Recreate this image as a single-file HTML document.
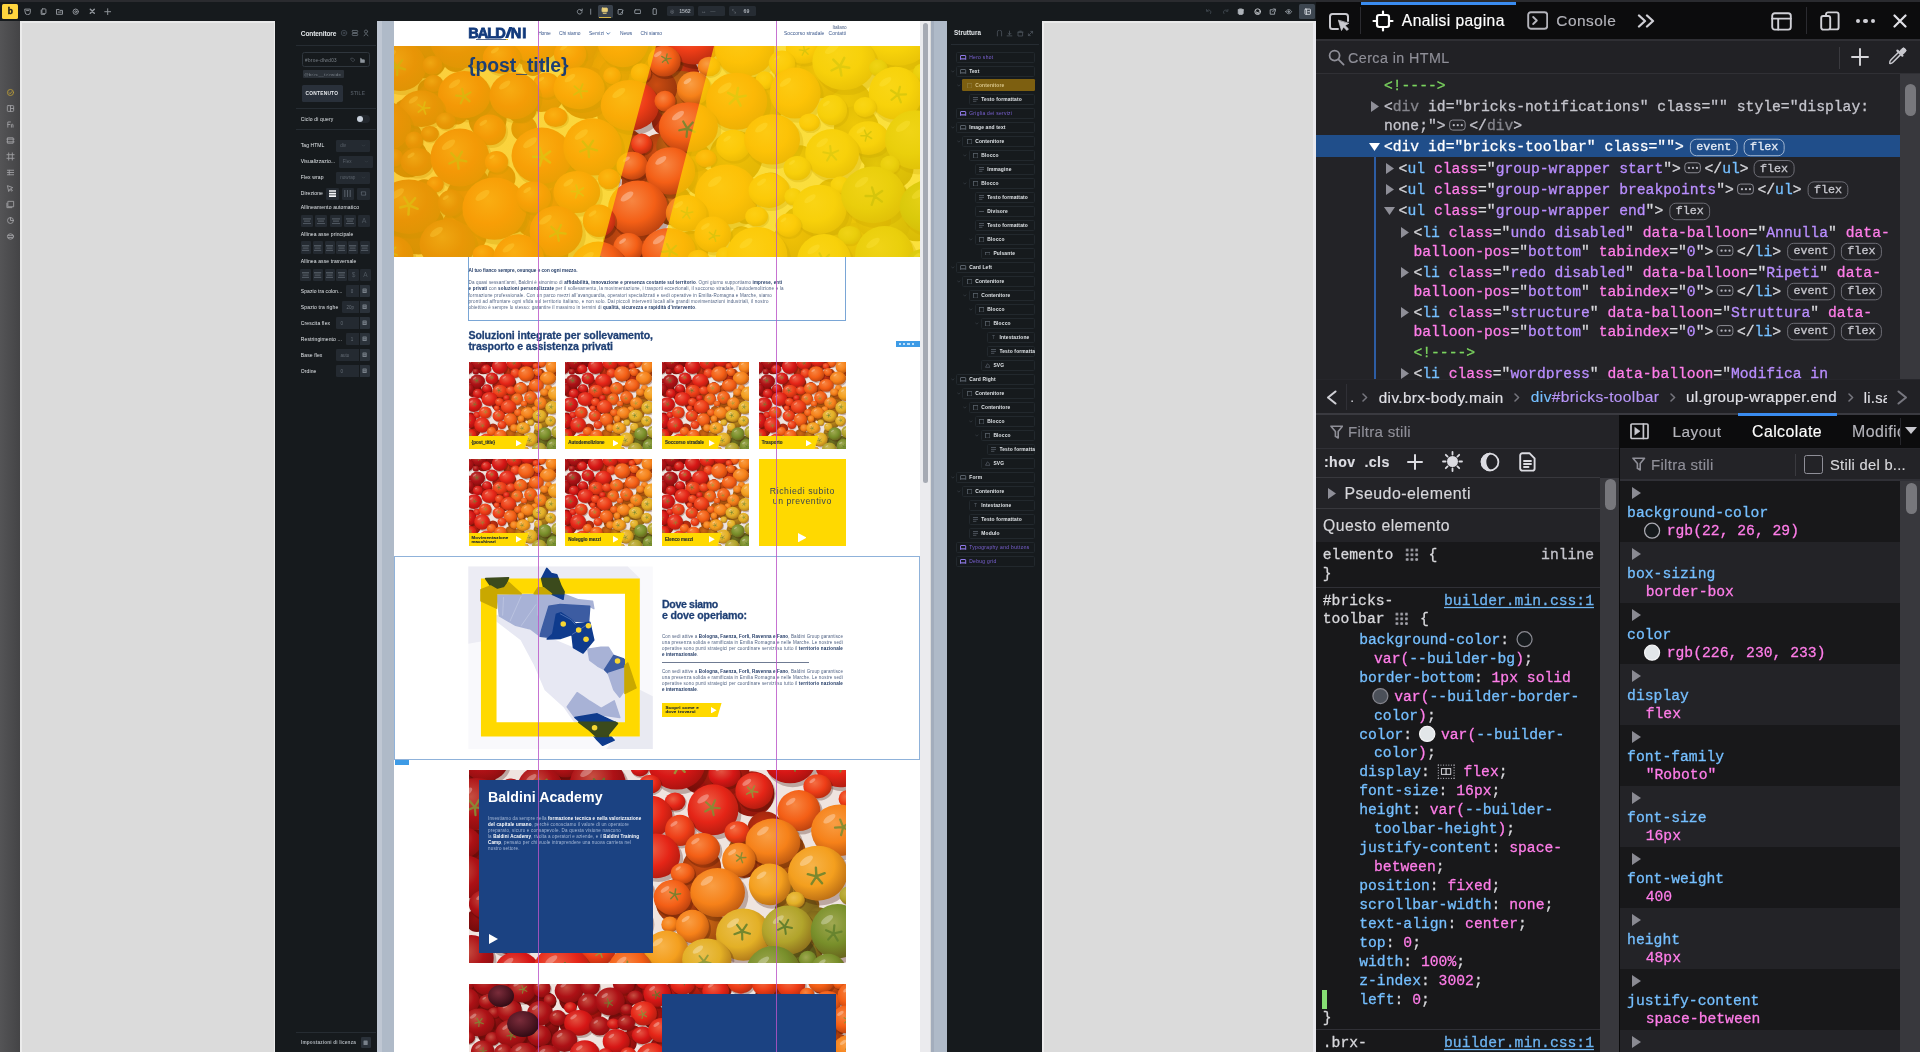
<!DOCTYPE html><html><head><meta charset="utf-8"><title>Bricks builder</title><style>
html,body{margin:0;padding:0}body{width:1920px;height:1052px;overflow:hidden;position:relative;background:#dcdcdc;font-family:"Liberation Sans",sans-serif;-webkit-font-smoothing:antialiased}
#root{position:absolute;left:0;top:0;width:1920px;height:1052px;overflow:hidden;will-change:transform}i{font-style:normal}
</style></head><body><div id="root">
<div style="position:absolute;left:20.00px;top:21.00px;width:255.00px;height:1031.00px;background:#dbdbdb;"></div>
<div style="position:absolute;left:1042.00px;top:21.00px;width:271.40px;height:1031.00px;background:#dbdbdb;"></div>
<div style="position:absolute;left:1313.40px;top:21.00px;width:2.80px;height:1031.00px;background:#e9e9ee;"></div>
<div style="position:absolute;left:377.00px;top:21.00px;width:5.20px;height:1031.00px;background:#bfc7d3;"></div>
<div style="position:absolute;left:273.60px;top:21.00px;width:1.40px;height:1031.00px;background:#ececec;"></div>
<div style="position:absolute;left:1042.00px;top:21.00px;width:2.40px;height:1031.00px;background:#ececec;"></div>
<div style="position:absolute;left:20.00px;top:21.00px;width:1.80px;height:1031.00px;background:#ebebeb;"></div>
<div style="position:absolute;left:20.00px;top:21.00px;width:255.00px;height:1.60px;background:#e9e9e9;"></div>
<div style="position:absolute;left:1042.00px;top:21.00px;width:272.00px;height:1.60px;background:#e9e9e9;"></div>
<div style="position:absolute;left:382.20px;top:21.00px;width:12.00px;height:1031.00px;background:#afbac8;"></div>
<div style="position:absolute;left:930.50px;top:21.00px;width:16.50px;height:1031.00px;background:#afbac8;"></div>
<div style="position:absolute;left:930.50px;top:21.00px;width:3.00px;height:1031.00px;background:#a3adbc;"></div>
<div style="position:absolute;left:394.20px;top:21.00px;width:526.00px;height:1031.00px;background:#ffffff;"></div>
<span style='position:absolute;left:468px;top:17px;font:700 58.40px/117px "Liberation Sans",sans-serif;color:#123a7c;white-space:pre;transform:translate(0.200px,0.940px) scale(.25);transform-origin:0 0;letter-spacing:-3.950px;-webkit-text-stroke:3.2px #123a7c;'>BALD</span><svg style="position:absolute;left:504.80px;top:26.60px;" width="7.40" height="11.20" viewBox="0 0 7.4 11.2"><path d="M4.2 0H7.4L3.2 11.2H0z" fill="#123a7c"/></svg><span style='position:absolute;left:510px;top:17px;font:700 58.40px/117px "Liberation Sans",sans-serif;color:#123a7c;white-space:pre;transform:translate(0.800px,0.940px) scale(.25);transform-origin:0 0;letter-spacing:3.600px;-webkit-text-stroke:3.2px #123a7c;'>NI</span><div style="position:absolute;left:476.00px;top:39.40px;width:30.00px;height:1.00px;background:#54688c;"></div><div style="position:absolute;left:506.40px;top:38.80px;width:2.00px;height:1.60px;background:#f0c818;"></div><span style='position:absolute;left:538px;top:28px;font:400 19.60px/39px "Liberation Sans",sans-serif;color:#37558a;white-space:pre;transform:translate(0.200px,0.788px) scale(.25);transform-origin:0 0;letter-spacing:-0.671px;'>Home</span><span style='position:absolute;left:559px;top:28px;font:400 19.60px/39px "Liberation Sans",sans-serif;color:#37558a;white-space:pre;transform:translate(0.000px,0.788px) scale(.25);transform-origin:0 0;letter-spacing:-0.171px;'>Chi siamo</span><span style='position:absolute;left:589px;top:28px;font:400 19.60px/39px "Liberation Sans",sans-serif;color:#37558a;white-space:pre;transform:translate(0.000px,0.788px) scale(.25);transform-origin:0 0;letter-spacing:0.284px;'>Servizi</span><span style='position:absolute;left:620px;top:28px;font:400 19.60px/39px "Liberation Sans",sans-serif;color:#37558a;white-space:pre;transform:translate(0.000px,0.788px) scale(.25);transform-origin:0 0;letter-spacing:-0.053px;'>News</span><span style='position:absolute;left:640px;top:28px;font:400 19.60px/39px "Liberation Sans",sans-serif;color:#37558a;white-space:pre;transform:translate(0.400px,0.788px) scale(.25);transform-origin:0 0;letter-spacing:-0.082px;'>Chi siamo</span><svg style="position:absolute;left:606.40px;top:32.20px;" width="4.40" height="3.00" viewBox="0 0 4.4 3"><path d="M.5 .5l1.7 1.8L3.9 .5" fill="none" stroke="#2c5a9a" stroke-width=".8"/></svg><span style='position:absolute;left:832px;top:22px;font:400 18.80px/38px "Liberation Sans",sans-serif;color:#4a5f85;white-space:pre;transform:translate(0.600px,0.984px) scale(.25);transform-origin:0 0;letter-spacing:-0.578px;'>Italiano</span><span style='position:absolute;left:784px;top:28px;font:400 19.60px/39px "Liberation Sans",sans-serif;color:#37558a;white-space:pre;transform:translate(0.000px,0.788px) scale(.25);transform-origin:0 0;letter-spacing:0.278px;'>Soccorso stradale</span><span style='position:absolute;left:828px;top:28px;font:400 19.60px/39px "Liberation Sans",sans-serif;color:#37558a;white-space:pre;transform:translate(0.600px,0.788px) scale(.25);transform-origin:0 0;letter-spacing:0.256px;'>Contatti</span>
<svg style="position:absolute;left:394.00px;top:45.60px;" width="526.00" height="211.60" viewBox="0 0 526 211.6"><defs><radialGradient id="h0" cx=".40" cy=".36" r=".70"><stop offset="0" stop-color="#c65042"/><stop offset=".55" stop-color="#ad1116"/><stop offset="1" stop-color="#880e0e"/></radialGradient><radialGradient id="hd0" cx=".45" cy=".40" r=".75"><stop offset="0" stop-color="#940f11"/><stop offset="1" stop-color="#690b0a"/></radialGradient><radialGradient id="h1" cx=".40" cy=".36" r=".70"><stop offset="0" stop-color="#e35442"/><stop offset=".55" stop-color="#d71716"/><stop offset="1" stop-color="#a3120e"/></radialGradient><radialGradient id="hd1" cx=".45" cy=".40" r=".75"><stop offset="0" stop-color="#b51411"/><stop offset="1" stop-color="#7d0e0a"/></radialGradient><radialGradient id="h2" cx=".40" cy=".36" r=".70"><stop offset="0" stop-color="#ed5e43"/><stop offset=".55" stop-color="#e52517"/><stop offset="1" stop-color="#ac1b0f"/></radialGradient><radialGradient id="hd2" cx=".45" cy=".40" r=".75"><stop offset="0" stop-color="#c01f12"/><stop offset="1" stop-color="#83150b"/></radialGradient><radialGradient id="h3" cx=".40" cy=".36" r=".70"><stop offset="0" stop-color="#f36e43"/><stop offset=".55" stop-color="#ee3d17"/><stop offset="1" stop-color="#b22a0f"/></radialGradient><radialGradient id="hd3" cx=".45" cy=".40" r=".75"><stop offset="0" stop-color="#c73212"/><stop offset="1" stop-color="#88200b"/></radialGradient><radialGradient id="h4" cx=".40" cy=".36" r=".70"><stop offset="0" stop-color="#f78642"/><stop offset=".55" stop-color="#f45f16"/><stop offset="1" stop-color="#b53f0e"/></radialGradient><radialGradient id="hd4" cx=".45" cy=".40" r=".75"><stop offset="0" stop-color="#cb4c11"/><stop offset="1" stop-color="#8a300a"/></radialGradient><radialGradient id="h5" cx=".40" cy=".36" r=".70"><stop offset="0" stop-color="#f99e44"/><stop offset=".55" stop-color="#f68119"/><stop offset="1" stop-color="#b75510"/></radialGradient><radialGradient id="hd5" cx=".45" cy=".40" r=".75"><stop offset="0" stop-color="#cd6713"/><stop offset="1" stop-color="#8b400b"/></radialGradient><radialGradient id="h6" cx=".40" cy=".36" r=".70"><stop offset="0" stop-color="#f7b348"/><stop offset=".55" stop-color="#f49f1e"/><stop offset="1" stop-color="#b56913"/></radialGradient><radialGradient id="hd6" cx=".45" cy=".40" r=".75"><stop offset="0" stop-color="#cc7e18"/><stop offset="1" stop-color="#8a4e0e"/></radialGradient><radialGradient id="h7" cx=".40" cy=".36" r=".70"><stop offset="0" stop-color="#ebbf4d"/><stop offset=".55" stop-color="#e3b026"/><stop offset="1" stop-color="#aa7318"/></radialGradient><radialGradient id="hd7" cx=".45" cy=".40" r=".75"><stop offset="0" stop-color="#be8b1d"/><stop offset="1" stop-color="#825612"/></radialGradient><radialGradient id="h8" cx=".40" cy=".36" r=".70"><stop offset="0" stop-color="#c9b751"/><stop offset=".55" stop-color="#b1a42b"/><stop offset="1" stop-color="#8b6c1b"/></radialGradient><radialGradient id="hd8" cx=".45" cy=".40" r=".75"><stop offset="0" stop-color="#988221"/><stop offset="1" stop-color="#6b5014"/></radialGradient><radialGradient id="h9" cx=".40" cy=".36" r=".70"><stop offset="0" stop-color="#a0a851"/><stop offset=".55" stop-color="#788f2a"/><stop offset="1" stop-color="#665e1b"/></radialGradient><radialGradient id="hd9" cx=".45" cy=".40" r=".75"><stop offset="0" stop-color="#6b7121"/><stop offset="1" stop-color="#504614"/></radialGradient><clipPath id="hsl"><polygon points="262,0 320,0 266,211.6 205.6,211.6"/></clipPath></defs><g><rect width="526" height="211.6" fill="#efe4df"/><circle cx="79.3" cy="137.7" r="16.1" fill="url(#hd1)"/><circle cx="192.4" cy="12.3" r="19.6" fill="url(#hd2)"/><circle cx="228.1" cy="14.8" r="11.4" fill="url(#hd2)"/><circle cx="434.9" cy="26.2" r="17.8" fill="url(#hd6)"/><circle cx="498.5" cy="122.1" r="21.1" fill="url(#hd8)"/><circle cx="24.5" cy="181.7" r="26.8" fill="url(#hd0)"/><circle cx="62.0" cy="65.3" r="13.2" fill="url(#hd1)"/><circle cx="305.9" cy="135.2" r="13.8" fill="url(#hd5)"/><circle cx="33.0" cy="12.6" r="19.8" fill="url(#hd0)"/><circle cx="224.9" cy="66.5" r="22.0" fill="url(#hd3)"/><circle cx="157.7" cy="168.1" r="18.2" fill="url(#hd3)"/><circle cx="302.1" cy="111.1" r="14.8" fill="url(#hd5)"/><circle cx="151.5" cy="207.4" r="22.8" fill="url(#hd2)"/><circle cx="398.3" cy="32.2" r="17.7" fill="url(#hd6)"/><circle cx="351.5" cy="161.8" r="11.4" fill="url(#hd6)"/><circle cx="165.0" cy="147.1" r="25.2" fill="url(#hd3)"/><circle cx="240.0" cy="177.7" r="20.3" fill="url(#hd4)"/><circle cx="349.3" cy="12.8" r="18.6" fill="url(#hd5)"/><circle cx="522.4" cy="173.9" r="21.4" fill="url(#hd8)"/><circle cx="351.7" cy="4.8" r="17.1" fill="url(#hd5)"/><circle cx="61.6" cy="12.5" r="13.6" fill="url(#hd1)"/><circle cx="130.2" cy="82.7" r="12.9" fill="url(#hd2)"/><circle cx="236.3" cy="116.3" r="12.1" fill="url(#hd4)"/><circle cx="454.5" cy="58.9" r="24.2" fill="url(#hd7)"/><circle cx="465.1" cy="202.7" r="16.7" fill="url(#hd7)"/><circle cx="122.0" cy="49.4" r="13.7" fill="url(#hd1)"/><circle cx="138.2" cy="0.9" r="20.5" fill="url(#hd1)"/><circle cx="297.9" cy="201.7" r="16.9" fill="url(#hd5)"/><circle cx="324.9" cy="143.1" r="19.3" fill="url(#hd5)"/><circle cx="410.3" cy="185.0" r="25.6" fill="url(#hd7)"/><circle cx="209.9" cy="21.9" r="17.2" fill="url(#hd3)"/><circle cx="35.4" cy="44.2" r="11.8" fill="url(#hd0)"/><circle cx="27.7" cy="0.0" r="16.4" fill="url(#hd0)"/><circle cx="191.3" cy="5.4" r="12.5" fill="url(#hd3)"/><circle cx="78.1" cy="53.4" r="20.9" fill="url(#hd0)"/><circle cx="64.6" cy="179.6" r="16.8" fill="url(#hd2)"/><circle cx="254.5" cy="18.2" r="18.4" fill="url(#hd3)"/><circle cx="139.3" cy="175.4" r="16.4" fill="url(#hd2)"/><circle cx="500.2" cy="111.8" r="11.2" fill="url(#hd7)"/><circle cx="14.2" cy="111.7" r="19.7" fill="url(#hd0)"/><circle cx="366.2" cy="55.3" r="25.0" fill="url(#hd5)"/><circle cx="406.0" cy="112.7" r="13.5" fill="url(#hd7)"/><circle cx="117.3" cy="171.7" r="16.2" fill="url(#hd2)"/><circle cx="424.0" cy="173.2" r="24.8" fill="url(#hd7)"/><circle cx="272.3" cy="75.2" r="14.5" fill="url(#hd3)"/><circle cx="147.0" cy="54.8" r="11.3" fill="url(#hd2)"/><circle cx="235.2" cy="198.3" r="26.5" fill="url(#hd4)"/><circle cx="191.8" cy="46.6" r="26.5" fill="url(#hd2)"/><circle cx="107.5" cy="132.1" r="14.0" fill="url(#hd2)"/><circle cx="252.2" cy="138.2" r="24.6" fill="url(#hd4)"/><circle cx="347.5" cy="192.5" r="12.2" fill="url(#hd6)"/><circle cx="251.4" cy="37.8" r="23.1" fill="url(#hd4)"/><circle cx="421.2" cy="205.6" r="16.3" fill="url(#hd7)"/><circle cx="498.0" cy="153.4" r="17.4" fill="url(#hd8)"/><circle cx="79.5" cy="191.5" r="12.9" fill="url(#hd2)"/><circle cx="434.7" cy="207.4" r="13.2" fill="url(#hd7)"/><circle cx="288.6" cy="27.7" r="16.5" fill="url(#hd3)"/><circle cx="341.7" cy="111.4" r="26.7" fill="url(#hd6)"/><circle cx="458.5" cy="174.8" r="17.9" fill="url(#hd7)"/><circle cx="154.1" cy="50.9" r="14.9" fill="url(#hd2)"/><circle cx="220.4" cy="27.7" r="15.1" fill="url(#hd3)"/><circle cx="241.0" cy="123.4" r="16.6" fill="url(#hd4)"/><circle cx="482.7" cy="106.1" r="17.7" fill="url(#hd8)"/><circle cx="9.8" cy="93.1" r="19.4" fill="url(#hd0)"/><circle cx="420.4" cy="36.5" r="10.9" fill="url(#hd6)"/><circle cx="292.7" cy="69.0" r="22.7" fill="url(#hd4)"/><circle cx="412.5" cy="22.5" r="19.9" fill="url(#hd6)"/><circle cx="145.7" cy="163.4" r="14.9" fill="url(#hd2)"/><circle cx="399.8" cy="193.1" r="20.0" fill="url(#hd6)"/><circle cx="265.9" cy="108.4" r="20.8" fill="url(#hd4)"/><circle cx="280.5" cy="101.2" r="18.2" fill="url(#hd5)"/><circle cx="461.1" cy="199.4" r="22.3" fill="url(#hd7)"/><circle cx="496.2" cy="177.7" r="20.0" fill="url(#hd8)"/><circle cx="232.6" cy="15.4" r="12.8" fill="url(#hd3)"/><circle cx="352.1" cy="165.9" r="12.0" fill="url(#hd6)"/><circle cx="376.7" cy="139.7" r="13.3" fill="url(#hd5)"/><circle cx="508.9" cy="46.5" r="25.3" fill="url(#hd8)"/><circle cx="256.3" cy="209.5" r="17.3" fill="url(#hd5)"/><circle cx="227.0" cy="109.1" r="13.4" fill="url(#hd3)"/><circle cx="167.5" cy="152.8" r="14.0" fill="url(#hd2)"/><circle cx="231.7" cy="3.8" r="19.9" fill="url(#hd3)"/><circle cx="269.4" cy="13.6" r="21.0" fill="url(#hd4)"/><circle cx="511.1" cy="22.2" r="23.7" fill="url(#hd7)"/><circle cx="409.8" cy="57.2" r="11.4" fill="url(#hd6)"/><circle cx="479.4" cy="173.3" r="17.7" fill="url(#hd7)"/><circle cx="483.5" cy="120.7" r="13.2" fill="url(#hd8)"/><circle cx="30.3" cy="145.6" r="12.3" fill="url(#hd0)"/><circle cx="493.6" cy="134.2" r="12.0" fill="url(#hd8)"/><circle cx="450.4" cy="14.1" r="12.2" fill="url(#hd7)"/><circle cx="178.4" cy="117.0" r="18.2" fill="url(#hd3)"/><circle cx="68.0" cy="111.5" r="15.2" fill="url(#hd0)"/><circle cx="84.9" cy="10.7" r="12.6" fill="url(#hd0)"/><circle cx="160.4" cy="160.7" r="15.9" fill="url(#hd2)"/><circle cx="93.6" cy="73.4" r="19.0" fill="url(#hd0)"/><circle cx="8.1" cy="155.1" r="14.9" fill="url(#hd0)"/><circle cx="249.7" cy="197.8" r="13.9" fill="url(#hd4)"/><circle cx="227.3" cy="104.7" r="24.2" fill="url(#hd4)"/><circle cx="266.5" cy="145.5" r="17.2" fill="url(#hd5)"/><circle cx="437.8" cy="149.5" r="16.4" fill="url(#hd7)"/><circle cx="182.8" cy="11.5" r="17.4" fill="url(#hd2)"/><circle cx="389.7" cy="54.1" r="12.0" fill="url(#hd5)"/><circle cx="442.5" cy="184.2" r="12.2" fill="url(#hd7)"/><circle cx="127.4" cy="62.0" r="15.4" fill="url(#hd1)"/><circle cx="234.5" cy="55.7" r="13.4" fill="url(#hd4)"/><circle cx="287.8" cy="51.7" r="26.8" fill="url(#hd5)"/><circle cx="187.6" cy="0.2" r="15.9" fill="url(#hd2)"/><circle cx="264.5" cy="42.5" r="18.6" fill="url(#hd4)"/><circle cx="139.0" cy="19.0" r="10.9" fill="url(#hd1)"/><circle cx="11.8" cy="64.4" r="11.5" fill="url(#hd0)"/><circle cx="278.4" cy="158.8" r="20.4" fill="url(#hd5)"/><circle cx="462.4" cy="82.4" r="22.5" fill="url(#hd7)"/><circle cx="78.6" cy="153.2" r="26.9" fill="url(#hd1)"/><circle cx="439.4" cy="188.7" r="11.5" fill="url(#hd7)"/><circle cx="427.2" cy="29.5" r="22.8" fill="url(#hd6)"/><circle cx="439.2" cy="170.3" r="19.1" fill="url(#hd7)"/><ellipse cx="70.6" cy="-1.4" rx="31.9" ry="28.4" fill="#3a0a00" opacity=".28"/><ellipse cx="67.6" cy="-5.5" rx="31.2" ry="27.8" fill="url(#h0)"/><ellipse cx="56.3" cy="-18.0" rx="7.7" ry="3.3" fill="#fff" opacity=".30" transform="rotate(-35 56.3 -18.0)"/><ellipse cx="8.9" cy="24.0" rx="26.5" ry="25.2" fill="#3a0a00" opacity=".28"/><ellipse cx="6.2" cy="20.2" rx="25.9" ry="24.7" fill="url(#h0)"/><ellipse cx="-4.2" cy="8.7" rx="7.1" ry="3.0" fill="#fff" opacity=".30" transform="rotate(-35 -4.2 8.7)"/><path d="M3.2 20.9L8.0 14.3M3.2 20.9L11.0 23.4M3.2 20.9L3.2 29.1M3.2 20.9L-4.6 23.5M3.2 20.9L-1.6 14.4" stroke="#607e2b" stroke-width="2.2" stroke-linecap="round" opacity=".85"/><ellipse cx="39.4" cy="20.8" rx="10.2" ry="9.8" fill="#3a0a00" opacity=".28"/><ellipse cx="38.4" cy="19.4" rx="10.0" ry="9.6" fill="url(#h0)"/><ellipse cx="142.9" cy="-6.1" rx="29.0" ry="26.7" fill="#3a0a00" opacity=".28"/><ellipse cx="140.2" cy="-9.8" rx="28.5" ry="26.2" fill="url(#h2)"/><ellipse cx="130.0" cy="-21.1" rx="7.0" ry="2.9" fill="#fff" opacity=".30" transform="rotate(-35 130.0 -21.1)"/><ellipse cx="109.4" cy="14.2" rx="19.3" ry="16.4" fill="#3a0a00" opacity=".28"/><ellipse cx="107.7" cy="11.7" rx="18.9" ry="16.1" fill="url(#h1)"/><ellipse cx="101.0" cy="4.4" rx="4.6" ry="1.9" fill="#fff" opacity=".30" transform="rotate(-35 101.0 4.4)"/><ellipse cx="40.5" cy="38.8" rx="9.9" ry="8.5" fill="#3a0a00" opacity=".28"/><ellipse cx="39.6" cy="37.5" rx="9.7" ry="8.4" fill="url(#h0)"/><ellipse cx="177.7" cy="10.6" rx="16.5" ry="15.6" fill="#3a0a00" opacity=".28"/><ellipse cx="176.1" cy="8.3" rx="16.2" ry="15.3" fill="url(#h2)"/><ellipse cx="169.8" cy="1.4" rx="4.3" ry="1.8" fill="#fff" opacity=".30" transform="rotate(-35 169.8 1.4)"/><ellipse cx="231.9" cy="-1.6" rx="26.3" ry="27.2" fill="#3a0a00" opacity=".28"/><ellipse cx="229.2" cy="-5.4" rx="25.8" ry="26.7" fill="url(#h3)"/><ellipse cx="219.0" cy="-16.7" rx="7.0" ry="3.0" fill="#fff" opacity=".30" transform="rotate(-35 219.0 -16.7)"/><ellipse cx="72.8" cy="52.3" rx="26.9" ry="24.1" fill="#3a0a00" opacity=".28"/><ellipse cx="70.3" cy="48.7" rx="26.4" ry="23.7" fill="url(#h1)"/><ellipse cx="60.5" cy="37.8" rx="6.7" ry="2.8" fill="#fff" opacity=".30" transform="rotate(-35 60.5 37.8)"/><path d="M69.8 50.3L68.1 42.7M69.8 50.3L76.5 46.4M69.8 50.3L75.6 55.4M69.8 50.3L66.7 57.4M69.8 50.3L62.1 49.6" stroke="#708830" stroke-width="2.1" stroke-linecap="round" opacity=".85"/><ellipse cx="29.5" cy="65.6" rx="22.8" ry="18.7" fill="#3a0a00" opacity=".28"/><ellipse cx="27.4" cy="62.7" rx="22.3" ry="18.3" fill="url(#h0)"/><ellipse cx="19.4" cy="53.9" rx="5.5" ry="2.3" fill="#fff" opacity=".30" transform="rotate(-35 19.4 53.9)"/><path d="M29.4 62.1L31.6 68.0M29.4 62.1L24.4 66.0M29.4 62.1L24.1 58.6M29.4 62.1L31.0 56.0M29.4 62.1L35.7 61.8" stroke="#929e3b" stroke-width="1.7" stroke-linecap="round" opacity=".85"/><ellipse cx="-8.8" cy="84.4" rx="29.4" ry="26.1" fill="#3a0a00" opacity=".28"/><ellipse cx="-11.8" cy="80.3" rx="28.8" ry="25.5" fill="url(#h0)"/><ellipse cx="-23.0" cy="67.8" rx="7.7" ry="3.3" fill="#fff" opacity=".30" transform="rotate(-35 -23.0 67.8)"/><path d="M-16.1 78.4L-7.7 81.4M-16.1 78.4L-16.3 87.3M-16.1 78.4L-24.6 80.9M-16.1 78.4L-21.1 71.0M-16.1 78.4L-10.7 71.3" stroke="#7c9034" stroke-width="2.4" stroke-linecap="round" opacity=".85"/><ellipse cx="302.9" cy="-4.3" rx="30.1" ry="27.3" fill="#3a0a00" opacity=".28"/><ellipse cx="300.1" cy="-8.2" rx="29.5" ry="26.8" fill="url(#h3)"/><ellipse cx="289.6" cy="-19.9" rx="7.2" ry="3.1" fill="#fff" opacity=".30" transform="rotate(-35 289.6 -19.9)"/><path d="M301.9 -10.0L294.7 -5.8M301.9 -10.0L295.7 -15.5M301.9 -10.0L305.3 -17.6M301.9 -10.0L310.2 -9.1M301.9 -10.0L303.6 -1.8" stroke="#708830" stroke-width="2.2" stroke-linecap="round" opacity=".85"/><ellipse cx="153.6" cy="41.0" rx="13.8" ry="13.0" fill="#3a0a00" opacity=".28"/><ellipse cx="152.3" cy="39.1" rx="13.5" ry="12.7" fill="url(#h2)"/><ellipse cx="147.1" cy="33.3" rx="3.6" ry="1.5" fill="#fff" opacity=".30" transform="rotate(-35 147.1 33.3)"/><ellipse cx="123.0" cy="53.3" rx="25.4" ry="24.0" fill="#3a0a00" opacity=".28"/><ellipse cx="120.4" cy="49.7" rx="24.9" ry="23.5" fill="url(#h1)"/><ellipse cx="110.7" cy="39.0" rx="6.6" ry="2.8" fill="#fff" opacity=".30" transform="rotate(-35 110.7 39.0)"/><ellipse cx="52.8" cy="76.3" rx="10.1" ry="8.7" fill="#3a0a00" opacity=".28"/><ellipse cx="51.8" cy="74.9" rx="9.9" ry="8.5" fill="url(#h0)"/><ellipse cx="219.0" cy="30.9" rx="9.1" ry="8.6" fill="#3a0a00" opacity=".28"/><ellipse cx="218.1" cy="29.7" rx="8.9" ry="8.5" fill="url(#h3)"/><ellipse cx="271.9" cy="17.5" rx="16.7" ry="15.7" fill="#3a0a00" opacity=".28"/><ellipse cx="270.2" cy="15.1" rx="16.4" ry="15.4" fill="url(#h4)"/><ellipse cx="263.8" cy="8.1" rx="4.4" ry="1.9" fill="#fff" opacity=".30" transform="rotate(-35 263.8 8.1)"/><path d="M272.1 13.0L274.2 17.6M272.1 13.0L268.4 16.3M272.1 13.0L267.7 10.4M272.1 13.0L273.1 8.0M272.1 13.0L277.1 12.4" stroke="#6d872f" stroke-width="1.3" stroke-linecap="round" opacity=".85"/><ellipse cx="187.5" cy="45.5" rx="26.2" ry="21.4" fill="#3a0a00" opacity=".28"/><ellipse cx="185.1" cy="42.2" rx="25.6" ry="21.0" fill="url(#h3)"/><ellipse cx="176.0" cy="32.1" rx="6.2" ry="2.6" fill="#fff" opacity=".30" transform="rotate(-35 176.0 32.1)"/><path d="M186.0 44.9L180.0 48.8M186.0 44.9L180.4 40.3M186.0 44.9L188.6 38.2M186.0 44.9L193.2 45.3M186.0 44.9L187.8 51.9" stroke="#798e33" stroke-width="1.9" stroke-linecap="round" opacity=".85"/><ellipse cx="36.8" cy="89.3" rx="9.3" ry="8.2" fill="#3a0a00" opacity=".28"/><ellipse cx="35.8" cy="88.0" rx="9.1" ry="8.0" fill="url(#h0)"/><ellipse cx="21.1" cy="96.1" rx="9.2" ry="9.3" fill="#3a0a00" opacity=".28"/><ellipse cx="20.2" cy="94.8" rx="9.0" ry="9.2" fill="url(#h0)"/><ellipse cx="248.0" cy="28.3" rx="10.5" ry="9.9" fill="#3a0a00" opacity=".28"/><ellipse cx="247.0" cy="26.9" rx="10.3" ry="9.7" fill="url(#h4)"/><ellipse cx="353.6" cy="7.8" rx="30.3" ry="27.6" fill="#3a0a00" opacity=".28"/><ellipse cx="350.6" cy="3.6" rx="29.7" ry="27.0" fill="url(#h5)"/><ellipse cx="339.2" cy="-8.9" rx="7.8" ry="3.3" fill="#fff" opacity=".30" transform="rotate(-35 339.2 -8.9)"/><ellipse cx="1.0" cy="113.0" rx="9.4" ry="9.1" fill="#3a0a00" opacity=".28"/><ellipse cx="0.1" cy="111.7" rx="9.2" ry="9.0" fill="url(#h0)"/><ellipse cx="97.4" cy="86.3" rx="16.6" ry="15.7" fill="#3a0a00" opacity=".28"/><ellipse cx="95.7" cy="83.9" rx="16.3" ry="15.4" fill="url(#h1)"/><ellipse cx="89.3" cy="76.8" rx="4.4" ry="1.9" fill="#fff" opacity=".30" transform="rotate(-35 89.3 76.8)"/><ellipse cx="316.3" cy="22.0" rx="11.5" ry="10.0" fill="#3a0a00" opacity=".28"/><ellipse cx="315.2" cy="20.5" rx="11.3" ry="9.8" fill="url(#h5)"/><ellipse cx="162.9" cy="72.7" rx="12.1" ry="10.1" fill="#3a0a00" opacity=".28"/><ellipse cx="161.7" cy="71.2" rx="11.8" ry="9.9" fill="url(#h2)"/><ellipse cx="24.5" cy="118.2" rx="16.4" ry="14.4" fill="#3a0a00" opacity=".28"/><ellipse cx="23.0" cy="116.0" rx="16.1" ry="14.1" fill="url(#h0)"/><ellipse cx="17.0" cy="109.4" rx="4.1" ry="1.7" fill="#fff" opacity=".30" transform="rotate(-35 17.0 109.4)"/><ellipse cx="411.1" cy="4.9" rx="17.9" ry="15.6" fill="#3a0a00" opacity=".28"/><ellipse cx="409.4" cy="2.5" rx="17.6" ry="15.3" fill="url(#h6)"/><ellipse cx="403.0" cy="-4.6" rx="4.4" ry="1.9" fill="#fff" opacity=".30" transform="rotate(-35 403.0 -4.6)"/><path d="M410.5 4.6L409.6 -0.4M410.5 4.6L415.0 2.3M410.5 4.6L414.1 8.2M410.5 4.6L408.2 9.2M410.5 4.6L405.5 3.9" stroke="#67832d" stroke-width="1.4" stroke-linecap="round" opacity=".85"/><ellipse cx="238.9" cy="63.4" rx="29.8" ry="25.9" fill="#3a0a00" opacity=".28"/><ellipse cx="235.9" cy="59.3" rx="29.2" ry="25.4" fill="url(#h3)"/><ellipse cx="224.8" cy="47.0" rx="7.6" ry="3.2" fill="#fff" opacity=".30" transform="rotate(-35 224.8 47.0)"/><ellipse cx="68.9" cy="115.7" rx="29.9" ry="29.5" fill="#3a0a00" opacity=".28"/><ellipse cx="65.9" cy="111.5" rx="29.4" ry="28.9" fill="url(#h1)"/><ellipse cx="54.5" cy="98.8" rx="7.8" ry="3.3" fill="#fff" opacity=".30" transform="rotate(-35 54.5 98.8)"/><path d="M63.5 113.7L72.3 115.4M63.5 113.7L64.6 122.7M63.5 113.7L55.3 117.5M63.5 113.7L57.3 107.1M63.5 113.7L67.9 105.8" stroke="#728a31" stroke-width="2.4" stroke-linecap="round" opacity=".85"/><ellipse cx="301.6" cy="44.6" rx="17.4" ry="17.0" fill="#3a0a00" opacity=".28"/><ellipse cx="299.9" cy="42.3" rx="17.0" ry="16.7" fill="url(#h5)"/><ellipse cx="293.5" cy="35.1" rx="4.4" ry="1.9" fill="#fff" opacity=".30" transform="rotate(-35 293.5 35.1)"/><ellipse cx="389.3" cy="19.1" rx="13.4" ry="13.2" fill="#3a0a00" opacity=".28"/><ellipse cx="388.0" cy="17.3" rx="13.2" ry="12.9" fill="url(#h6)"/><ellipse cx="383.1" cy="11.8" rx="3.4" ry="1.4" fill="#fff" opacity=".30" transform="rotate(-35 383.1 11.8)"/><ellipse cx="272.2" cy="56.6" rx="10.9" ry="10.6" fill="#3a0a00" opacity=".28"/><ellipse cx="271.0" cy="55.1" rx="10.6" ry="10.4" fill="url(#h4)"/><ellipse cx="507.5" cy="-4.6" rx="34.7" ry="29.7" fill="#3a0a00" opacity=".28"/><ellipse cx="504.2" cy="-9.3" rx="34.1" ry="29.1" fill="url(#h7)"/><ellipse cx="491.4" cy="-23.3" rx="8.7" ry="3.7" fill="#fff" opacity=".30" transform="rotate(-35 491.4 -23.3)"/><ellipse cx="371.6" cy="35.6" rx="9.3" ry="9.2" fill="#3a0a00" opacity=".28"/><ellipse cx="370.6" cy="34.3" rx="9.2" ry="9.0" fill="url(#h6)"/><ellipse cx="103.7" cy="117.6" rx="11.8" ry="11.1" fill="#3a0a00" opacity=".28"/><ellipse cx="102.5" cy="115.9" rx="11.6" ry="10.8" fill="url(#h2)"/><ellipse cx="98.0" cy="110.9" rx="3.1" ry="1.3" fill="#fff" opacity=".30" transform="rotate(-35 98.0 110.9)"/><ellipse cx="453.1" cy="20.2" rx="32.2" ry="28.9" fill="#3a0a00" opacity=".28"/><ellipse cx="449.9" cy="15.8" rx="31.6" ry="28.3" fill="url(#h7)"/><ellipse cx="438.0" cy="2.6" rx="8.2" ry="3.5" fill="#fff" opacity=".30" transform="rotate(-35 438.0 2.6)"/><path d="M445.9 20.3L439.3 13.6M445.9 20.3L450.3 11.9M445.9 20.3L455.3 21.8M445.9 20.3L447.4 29.6M445.9 20.3L437.5 24.5" stroke="#819335" stroke-width="2.5" stroke-linecap="round" opacity=".85"/><ellipse cx="42.1" cy="139.9" rx="8.8" ry="8.2" fill="#3a0a00" opacity=".28"/><ellipse cx="41.2" cy="138.6" rx="8.6" ry="8.0" fill="url(#h1)"/><ellipse cx="150.9" cy="114.0" rx="30.9" ry="28.8" fill="#3a0a00" opacity=".28"/><ellipse cx="147.8" cy="109.7" rx="30.3" ry="28.2" fill="url(#h2)"/><ellipse cx="136.0" cy="96.7" rx="8.1" ry="3.4" fill="#fff" opacity=".30" transform="rotate(-35 136.0 96.7)"/><path d="M148.5 110.9L156.0 116.4M148.5 110.9L145.6 119.7M148.5 110.9L139.2 110.8M148.5 110.9L145.7 102.0M148.5 110.9L156.1 105.5" stroke="#909c3a" stroke-width="2.5" stroke-linecap="round" opacity=".85"/><ellipse cx="345.8" cy="59.6" rx="31.2" ry="29.1" fill="#3a0a00" opacity=".28"/><ellipse cx="342.6" cy="55.2" rx="30.6" ry="28.5" fill="url(#h4)"/><ellipse cx="330.7" cy="42.0" rx="8.1" ry="3.4" fill="#fff" opacity=".30" transform="rotate(-35 330.7 42.0)"/><path d="M342.4 51.2L344.0 41.9M342.4 51.2L351.7 49.8M342.4 51.2L346.6 59.6M342.4 51.2L335.7 57.7M342.4 51.2L334.1 46.8" stroke="#8f9b3a" stroke-width="2.5" stroke-linecap="round" opacity=".85"/><ellipse cx="201.4" cy="105.0" rx="29.8" ry="29.3" fill="#3a0a00" opacity=".28"/><ellipse cx="198.5" cy="100.9" rx="29.2" ry="28.7" fill="url(#h3)"/><ellipse cx="187.3" cy="88.5" rx="7.7" ry="3.2" fill="#fff" opacity=".30" transform="rotate(-35 187.3 88.5)"/><path d="M194.4 102.2L188.7 95.4M194.4 102.2L199.1 94.7M194.4 102.2L203.0 104.3M194.4 102.2L195.0 111.0M194.4 102.2L186.2 105.5" stroke="#6f8830" stroke-width="2.4" stroke-linecap="round" opacity=".85"/><ellipse cx="17.9" cy="165.1" rx="32.8" ry="27.7" fill="#3a0a00" opacity=".28"/><ellipse cx="14.8" cy="160.7" rx="32.2" ry="27.2" fill="url(#h0)"/><ellipse cx="3.0" cy="147.7" rx="8.1" ry="3.4" fill="#fff" opacity=".30" transform="rotate(-35 3.0 147.7)"/><path d="M15.1 159.3L14.4 168.6M15.1 159.3L6.1 161.5M15.1 159.3L10.2 151.4M15.1 159.3L21.1 152.2M15.1 159.3L23.7 162.8" stroke="#8d9a39" stroke-width="2.5" stroke-linecap="round" opacity=".85"/><ellipse cx="485.3" cy="23.1" rx="9.5" ry="8.5" fill="#3a0a00" opacity=".28"/><ellipse cx="484.4" cy="21.8" rx="9.3" ry="8.3" fill="url(#h8)"/><ellipse cx="403.8" cy="50.7" rx="25.9" ry="26.0" fill="#3a0a00" opacity=".28"/><ellipse cx="401.2" cy="47.1" rx="25.4" ry="25.5" fill="url(#h5)"/><ellipse cx="391.4" cy="36.3" rx="6.7" ry="2.8" fill="#fff" opacity=".30" transform="rotate(-35 391.4 36.3)"/><ellipse cx="297.1" cy="85.0" rx="30.2" ry="25.4" fill="#3a0a00" opacity=".28"/><ellipse cx="294.4" cy="81.1" rx="29.6" ry="24.9" fill="url(#h4)"/><ellipse cx="284.0" cy="69.6" rx="7.1" ry="3.0" fill="#fff" opacity=".30" transform="rotate(-35 284.0 69.6)"/><path d="M293.3 82.6L298.8 76.5M293.3 82.6L300.8 85.9M293.3 82.6L292.5 90.8M293.3 82.6L285.3 84.3M293.3 82.6L289.2 75.5" stroke="#6d872f" stroke-width="2.2" stroke-linecap="round" opacity=".85"/><ellipse cx="248.6" cy="99.4" rx="10.7" ry="10.4" fill="#3a0a00" opacity=".28"/><ellipse cx="247.6" cy="97.8" rx="10.5" ry="10.2" fill="url(#h3)"/><ellipse cx="58.0" cy="159.0" rx="13.2" ry="13.3" fill="#3a0a00" opacity=".28"/><ellipse cx="56.7" cy="157.2" rx="12.9" ry="13.1" fill="url(#h0)"/><ellipse cx="51.7" cy="151.6" rx="3.4" ry="1.5" fill="#fff" opacity=".30" transform="rotate(-35 51.7 151.6)"/><ellipse cx="529.0" cy="28.0" rx="9.3" ry="9.3" fill="#3a0a00" opacity=".28"/><ellipse cx="528.1" cy="26.7" rx="9.1" ry="9.1" fill="url(#h8)"/><ellipse cx="239.9" cy="121.8" rx="16.1" ry="14.3" fill="#3a0a00" opacity=".28"/><ellipse cx="238.3" cy="119.7" rx="15.8" ry="14.0" fill="url(#h4)"/><ellipse cx="232.4" cy="113.2" rx="4.0" ry="1.7" fill="#fff" opacity=".30" transform="rotate(-35 232.4 113.2)"/><ellipse cx="103.7" cy="167.0" rx="32.7" ry="31.8" fill="#3a0a00" opacity=".28"/><ellipse cx="100.5" cy="162.6" rx="32.1" ry="31.2" fill="url(#h2)"/><ellipse cx="88.5" cy="149.4" rx="8.2" ry="3.5" fill="#fff" opacity=".30" transform="rotate(-35 88.5 149.4)"/><ellipse cx="141.2" cy="153.4" rx="17.9" ry="16.0" fill="#3a0a00" opacity=".28"/><ellipse cx="139.5" cy="151.0" rx="17.6" ry="15.6" fill="url(#h2)"/><ellipse cx="133.2" cy="144.1" rx="4.3" ry="1.8" fill="#fff" opacity=".30" transform="rotate(-35 133.2 144.1)"/><ellipse cx="439.8" cy="66.2" rx="15.2" ry="15.4" fill="#3a0a00" opacity=".28"/><ellipse cx="438.2" cy="64.1" rx="14.9" ry="15.1" fill="url(#h7)"/><ellipse cx="432.3" cy="57.6" rx="4.0" ry="1.7" fill="#fff" opacity=".30" transform="rotate(-35 432.3 57.6)"/><ellipse cx="216.2" cy="134.5" rx="11.3" ry="10.5" fill="#3a0a00" opacity=".28"/><ellipse cx="215.1" cy="133.0" rx="11.1" ry="10.3" fill="url(#h3)"/><ellipse cx="504.4" cy="51.1" rx="27.4" ry="27.0" fill="#3a0a00" opacity=".28"/><ellipse cx="501.7" cy="47.3" rx="26.9" ry="26.5" fill="url(#h7)"/><ellipse cx="491.3" cy="35.8" rx="7.1" ry="3.0" fill="#fff" opacity=".30" transform="rotate(-35 491.3 35.8)"/><path d="M503.9 48.7L512.1 48.3M503.9 48.7L506.9 56.4M503.9 48.7L497.5 53.9M503.9 48.7L497.0 44.3M503.9 48.7L506.0 40.8" stroke="#6b852e" stroke-width="2.2" stroke-linecap="round" opacity=".85"/><ellipse cx="185.0" cy="149.1" rx="23.8" ry="21.6" fill="#3a0a00" opacity=".28"/><ellipse cx="182.8" cy="146.0" rx="23.4" ry="21.1" fill="url(#h3)"/><ellipse cx="174.4" cy="136.7" rx="5.7" ry="2.4" fill="#fff" opacity=".30" transform="rotate(-35 174.4 136.7)"/><path d="M183.9 145.6L189.4 141.9M183.9 145.6L189.1 149.6M183.9 145.6L181.7 151.8M183.9 145.6L177.3 145.3M183.9 145.6L182.1 139.2" stroke="#939e3b" stroke-width="1.8" stroke-linecap="round" opacity=".85"/><ellipse cx="416.5" cy="77.9" rx="10.7" ry="9.2" fill="#3a0a00" opacity=".28"/><ellipse cx="415.5" cy="76.4" rx="10.5" ry="9.0" fill="url(#h6)"/><ellipse cx="340.8" cy="101.7" rx="17.5" ry="16.0" fill="#3a0a00" opacity=".28"/><ellipse cx="339.2" cy="99.5" rx="17.1" ry="15.7" fill="url(#h6)"/><ellipse cx="333.1" cy="92.7" rx="4.2" ry="1.8" fill="#fff" opacity=".30" transform="rotate(-35 333.1 92.7)"/><ellipse cx="472.1" cy="62.6" rx="11.4" ry="10.3" fill="#3a0a00" opacity=".28"/><ellipse cx="471.0" cy="61.1" rx="11.2" ry="10.1" fill="url(#h7)"/><ellipse cx="312.9" cy="113.7" rx="10.9" ry="8.9" fill="#3a0a00" opacity=".28"/><ellipse cx="311.9" cy="112.3" rx="10.6" ry="8.7" fill="url(#h4)"/><ellipse cx="380.9" cy="97.3" rx="28.6" ry="25.7" fill="#3a0a00" opacity=".28"/><ellipse cx="378.1" cy="93.4" rx="28.0" ry="25.2" fill="url(#h5)"/><ellipse cx="367.4" cy="81.6" rx="7.3" ry="3.1" fill="#fff" opacity=".30" transform="rotate(-35 367.4 81.6)"/><ellipse cx="278.9" cy="128.5" rx="25.4" ry="24.3" fill="#3a0a00" opacity=".28"/><ellipse cx="276.3" cy="125.0" rx="24.9" ry="23.8" fill="url(#h4)"/><ellipse cx="266.8" cy="114.4" rx="6.5" ry="2.8" fill="#fff" opacity=".30" transform="rotate(-35 266.8 114.4)"/><ellipse cx="-0.4" cy="212.5" rx="22.5" ry="19.7" fill="#3a0a00" opacity=".28"/><ellipse cx="-2.6" cy="209.4" rx="22.0" ry="19.4" fill="url(#h0)"/><ellipse cx="-11.0" cy="200.1" rx="5.7" ry="2.4" fill="#fff" opacity=".30" transform="rotate(-35 -11.0 200.1)"/><path d="M-3.0 206.3L-9.5 207.6M-3.0 206.3L-6.2 200.5M-3.0 206.3L1.5 201.4M-3.0 206.3L3.0 209.0M-3.0 206.3L-3.7 212.8" stroke="#8b9939" stroke-width="1.8" stroke-linecap="round" opacity=".85"/><ellipse cx="56.4" cy="202.4" rx="28.4" ry="25.6" fill="#3a0a00" opacity=".28"/><ellipse cx="53.4" cy="198.3" rx="27.8" ry="25.1" fill="url(#h0)"/><ellipse cx="42.4" cy="186.0" rx="7.6" ry="3.2" fill="#fff" opacity=".30" transform="rotate(-35 42.4 186.0)"/><ellipse cx="164.9" cy="189.3" rx="27.0" ry="25.8" fill="#3a0a00" opacity=".28"/><ellipse cx="162.1" cy="185.4" rx="26.5" ry="25.3" fill="url(#h2)"/><ellipse cx="151.5" cy="173.7" rx="7.3" ry="3.1" fill="#fff" opacity=".30" transform="rotate(-35 151.5 173.7)"/><path d="M163.4 186.6L164.8 194.8M163.4 186.6L156.0 190.5M163.4 186.6L157.3 180.7M163.4 186.6L167.0 179.0M163.4 186.6L171.7 187.7" stroke="#7b8f33" stroke-width="2.2" stroke-linecap="round" opacity=".85"/><ellipse cx="476.3" cy="94.8" rx="21.1" ry="17.1" fill="#3a0a00" opacity=".28"/><ellipse cx="474.3" cy="92.1" rx="20.7" ry="16.8" fill="url(#h7)"/><ellipse cx="467.0" cy="84.1" rx="5.0" ry="2.1" fill="#fff" opacity=".30" transform="rotate(-35 467.0 84.1)"/><path d="M472.7 89.4L471.3 95.0M472.7 89.4L466.9 89.8M472.7 89.4L470.5 84.1M472.7 89.4L477.1 85.7M472.7 89.4L477.6 92.5" stroke="#5d7c2a" stroke-width="1.5" stroke-linecap="round" opacity=".85"/><ellipse cx="90.8" cy="209.8" rx="11.3" ry="9.7" fill="#3a0a00" opacity=".28"/><ellipse cx="89.8" cy="208.3" rx="11.1" ry="9.5" fill="url(#h2)"/><ellipse cx="246.8" cy="166.5" rx="30.5" ry="28.5" fill="#3a0a00" opacity=".28"/><ellipse cx="243.9" cy="162.5" rx="29.9" ry="27.9" fill="url(#h4)"/><ellipse cx="233.0" cy="150.5" rx="7.5" ry="3.2" fill="#fff" opacity=".30" transform="rotate(-35 233.0 150.5)"/><ellipse cx="206.7" cy="177.1" rx="16.5" ry="16.5" fill="#3a0a00" opacity=".28"/><ellipse cx="205.0" cy="174.7" rx="16.2" ry="16.2" fill="url(#h3)"/><ellipse cx="198.5" cy="167.5" rx="4.5" ry="1.9" fill="#fff" opacity=".30" transform="rotate(-35 198.5 167.5)"/><ellipse cx="440.8" cy="111.5" rx="27.5" ry="25.2" fill="#3a0a00" opacity=".28"/><ellipse cx="438.1" cy="107.8" rx="26.9" ry="24.7" fill="url(#h7)"/><ellipse cx="428.2" cy="96.8" rx="6.8" ry="2.9" fill="#fff" opacity=".30" transform="rotate(-35 428.2 96.8)"/><path d="M437.0 107.8L429.3 106.2M437.0 107.8L436.2 100.0M437.0 107.8L444.2 104.6M437.0 107.8L442.2 113.6M437.0 107.8L433.1 114.6" stroke="#8b9938" stroke-width="2.1" stroke-linecap="round" opacity=".85"/><ellipse cx="404.5" cy="124.0" rx="14.0" ry="12.3" fill="#3a0a00" opacity=".28"/><ellipse cx="403.2" cy="122.1" rx="13.7" ry="12.1" fill="url(#h7)"/><ellipse cx="398.0" cy="116.4" rx="3.5" ry="1.5" fill="#fff" opacity=".30" transform="rotate(-35 398.0 116.4)"/><ellipse cx="335.6" cy="152.8" rx="32.4" ry="30.6" fill="#3a0a00" opacity=".28"/><ellipse cx="332.5" cy="148.5" rx="31.7" ry="30.0" fill="url(#h5)"/><ellipse cx="320.8" cy="135.6" rx="8.0" ry="3.4" fill="#fff" opacity=".30" transform="rotate(-35 320.8 135.6)"/><ellipse cx="524.5" cy="98.3" rx="30.9" ry="30.1" fill="#3a0a00" opacity=".28"/><ellipse cx="521.3" cy="93.8" rx="30.3" ry="29.5" fill="url(#h8)"/><ellipse cx="509.0" cy="80.3" rx="8.4" ry="3.5" fill="#fff" opacity=".30" transform="rotate(-35 509.0 80.3)"/><ellipse cx="127.2" cy="216.7" rx="25.9" ry="25.2" fill="#3a0a00" opacity=".28"/><ellipse cx="124.6" cy="213.0" rx="25.4" ry="24.7" fill="url(#h2)"/><ellipse cx="114.5" cy="201.9" rx="6.9" ry="2.9" fill="#fff" opacity=".30" transform="rotate(-35 114.5 201.9)"/><ellipse cx="294.2" cy="169.9" rx="20.8" ry="18.6" fill="#3a0a00" opacity=".28"/><ellipse cx="292.2" cy="167.1" rx="20.4" ry="18.2" fill="url(#h5)"/><ellipse cx="284.6" cy="158.7" rx="5.2" ry="2.2" fill="#fff" opacity=".30" transform="rotate(-35 284.6 158.7)"/><path d="M292.8 167.2L295.8 172.5M292.8 167.2L288.8 171.7M292.8 167.2L287.3 164.8M292.8 167.2L293.4 161.2M292.8 167.2L298.7 166.0" stroke="#839436" stroke-width="1.6" stroke-linecap="round" opacity=".85"/><ellipse cx="377.1" cy="147.3" rx="21.1" ry="17.7" fill="#3a0a00" opacity=".28"/><ellipse cx="375.1" cy="144.5" rx="20.6" ry="17.4" fill="url(#h6)"/><ellipse cx="367.6" cy="136.2" rx="5.2" ry="2.2" fill="#fff" opacity=".30" transform="rotate(-35 367.6 136.2)"/><ellipse cx="496.9" cy="119.9" rx="9.9" ry="9.3" fill="#3a0a00" opacity=".28"/><ellipse cx="496.0" cy="118.6" rx="9.7" ry="9.1" fill="url(#h8)"/><ellipse cx="400.0" cy="151.9" rx="9.0" ry="8.9" fill="#3a0a00" opacity=".28"/><ellipse cx="399.1" cy="150.6" rx="8.8" ry="8.7" fill="url(#h7)"/><ellipse cx="235.9" cy="203.6" rx="15.4" ry="14.9" fill="#3a0a00" opacity=".28"/><ellipse cx="234.4" cy="201.5" rx="15.1" ry="14.6" fill="url(#h4)"/><ellipse cx="228.6" cy="195.1" rx="4.0" ry="1.7" fill="#fff" opacity=".30" transform="rotate(-35 228.6 195.1)"/><ellipse cx="447.2" cy="140.2" rx="10.0" ry="8.8" fill="#3a0a00" opacity=".28"/><ellipse cx="446.3" cy="138.9" rx="9.8" ry="8.6" fill="url(#h7)"/><ellipse cx="363.7" cy="172.0" rx="11.6" ry="10.0" fill="#3a0a00" opacity=".28"/><ellipse cx="362.6" cy="170.5" rx="11.4" ry="9.8" fill="url(#h6)"/><ellipse cx="207.1" cy="226.5" rx="28.9" ry="27.6" fill="#3a0a00" opacity=".28"/><ellipse cx="204.3" cy="222.6" rx="28.3" ry="27.0" fill="url(#h4)"/><ellipse cx="193.5" cy="210.8" rx="7.3" ry="3.1" fill="#fff" opacity=".30" transform="rotate(-35 193.5 210.8)"/><path d="M207.5 219.6L203.4 226.9M207.5 219.6L199.2 217.9M207.5 219.6L206.6 211.2M207.5 219.6L215.2 216.1M207.5 219.6L213.2 225.8" stroke="#8f9c3a" stroke-width="2.3" stroke-linecap="round" opacity=".85"/><ellipse cx="320.6" cy="191.1" rx="18.6" ry="18.3" fill="#3a0a00" opacity=".28"/><ellipse cx="318.7" cy="188.4" rx="18.3" ry="18.0" fill="url(#h5)"/><ellipse cx="311.4" cy="180.4" rx="5.0" ry="2.1" fill="#fff" opacity=".30" transform="rotate(-35 311.4 180.4)"/><path d="M320.0 189.8L321.7 195.2M320.0 189.8L315.3 193.1M320.0 189.8L315.4 186.4M320.0 189.8L321.8 184.3M320.0 189.8L325.7 189.8" stroke="#728a31" stroke-width="1.5" stroke-linecap="round" opacity=".85"/><ellipse cx="277.2" cy="208.3" rx="27.4" ry="23.3" fill="#3a0a00" opacity=".28"/><ellipse cx="274.6" cy="204.7" rx="26.9" ry="22.8" fill="url(#h4)"/><ellipse cx="264.7" cy="193.8" rx="6.8" ry="2.9" fill="#fff" opacity=".30" transform="rotate(-35 264.7 193.8)"/><path d="M276.3 205.0L283.0 208.9M276.3 205.0L274.7 212.7M276.3 205.0L268.5 205.9M276.3 205.0L273.0 198.0M276.3 205.0L282.0 199.8" stroke="#7b8f34" stroke-width="2.1" stroke-linecap="round" opacity=".85"/><ellipse cx="428.1" cy="166.9" rx="27.6" ry="25.1" fill="#3a0a00" opacity=".28"/><ellipse cx="425.6" cy="163.3" rx="27.0" ry="24.6" fill="url(#h7)"/><ellipse cx="416.0" cy="152.7" rx="6.6" ry="2.8" fill="#fff" opacity=".30" transform="rotate(-35 416.0 152.7)"/><ellipse cx="482.2" cy="153.2" rx="32.7" ry="28.8" fill="#3a0a00" opacity=".28"/><ellipse cx="479.2" cy="148.9" rx="32.1" ry="28.3" fill="url(#h8)"/><ellipse cx="467.6" cy="136.2" rx="7.9" ry="3.3" fill="#fff" opacity=".30" transform="rotate(-35 467.6 136.2)"/><path d="M480.7 150.1L478.0 141.4M480.7 150.1L488.2 144.9M480.7 150.1L487.9 155.6M480.7 150.1L477.7 158.8M480.7 150.1L471.6 150.0" stroke="#5a7a29" stroke-width="2.4" stroke-linecap="round" opacity=".85"/><ellipse cx="395.6" cy="181.0" rx="13.1" ry="12.0" fill="#3a0a00" opacity=".28"/><ellipse cx="394.3" cy="179.3" rx="12.8" ry="11.7" fill="url(#h6)"/><ellipse cx="389.5" cy="173.9" rx="3.3" ry="1.4" fill="#fff" opacity=".30" transform="rotate(-35 389.5 173.9)"/><ellipse cx="305.3" cy="214.2" rx="10.9" ry="9.3" fill="#3a0a00" opacity=".28"/><ellipse cx="304.3" cy="212.8" rx="10.7" ry="9.1" fill="url(#h5)"/><ellipse cx="331.6" cy="211.3" rx="8.9" ry="9.2" fill="#3a0a00" opacity=".28"/><ellipse cx="330.7" cy="210.1" rx="8.7" ry="9.0" fill="url(#h6)"/><ellipse cx="365.9" cy="213.5" rx="31.0" ry="29.2" fill="#3a0a00" opacity=".28"/><ellipse cx="363.0" cy="209.5" rx="30.4" ry="28.6" fill="url(#h6)"/><ellipse cx="352.0" cy="197.3" rx="7.6" ry="3.2" fill="#fff" opacity=".30" transform="rotate(-35 352.0 197.3)"/><ellipse cx="538.9" cy="164.7" rx="30.8" ry="27.1" fill="#3a0a00" opacity=".28"/><ellipse cx="535.9" cy="160.5" rx="30.2" ry="26.6" fill="url(#h9)"/><ellipse cx="524.5" cy="147.8" rx="7.8" ry="3.3" fill="#fff" opacity=".30" transform="rotate(-35 524.5 147.8)"/><path d="M538.5 158.2L531.6 164.1M538.5 158.2L530.8 153.5M538.5 158.2L540.6 149.4M538.5 158.2L547.5 157.5M538.5 158.2L542.0 166.6" stroke="#758c32" stroke-width="2.4" stroke-linecap="round" opacity=".85"/><ellipse cx="456.4" cy="190.7" rx="11.5" ry="9.5" fill="#3a0a00" opacity=".28"/><ellipse cx="455.4" cy="189.2" rx="11.3" ry="9.3" fill="url(#h8)"/><ellipse cx="432.8" cy="218.8" rx="27.6" ry="27.5" fill="#3a0a00" opacity=".28"/><ellipse cx="430.1" cy="214.9" rx="27.0" ry="26.9" fill="url(#h7)"/><ellipse cx="419.6" cy="203.3" rx="7.2" ry="3.0" fill="#fff" opacity=".30" transform="rotate(-35 419.6 203.3)"/><path d="M429.3 214.6L428.1 222.8M429.3 214.6L421.1 216.0M429.3 214.6L425.5 207.3M429.3 214.6L435.1 208.7M429.3 214.6L436.7 218.3" stroke="#849536" stroke-width="2.2" stroke-linecap="round" opacity=".85"/><ellipse cx="493.5" cy="214.0" rx="30.1" ry="30.1" fill="#3a0a00" opacity=".28"/><ellipse cx="490.5" cy="209.7" rx="29.5" ry="29.6" fill="url(#h8)"/><ellipse cx="479.0" cy="197.0" rx="7.9" ry="3.3" fill="#fff" opacity=".30" transform="rotate(-35 479.0 197.0)"/><ellipse cx="530.2" cy="218.3" rx="16.4" ry="13.5" fill="#3a0a00" opacity=".28"/><ellipse cx="528.7" cy="216.2" rx="16.0" ry="13.2" fill="url(#h9)"/><ellipse cx="523.0" cy="209.9" rx="3.9" ry="1.7" fill="#fff" opacity=".30" transform="rotate(-35 523.0 209.9)"/></g><linearGradient id="hov" x1="0" x2="1" y1="0" y2="0"><stop offset="0" stop-color="#ffc400"/><stop offset=".42" stop-color="#ffd400"/><stop offset="1" stop-color="#ffe000"/></linearGradient><path d="M0 0H526 V211.6 H0z M262 0 L205.6 211.6 L266 211.6 L320 0z" fill="url(#hov)" fill-opacity=".73" fill-rule="evenodd"/></svg><span style='position:absolute;left:468px;top:46px;font:700 77.60px/155px "Liberation Sans",sans-serif;color:#1d3f73;white-space:pre;transform:translate(0.000px,0.465px) scale(.25);transform-origin:0 0;letter-spacing:-0.244px;'>{post_title}</span>
<div style="position:absolute;left:468.40px;top:257.00px;width:377.40px;height:63.60px;box-sizing:border-box;border:1px solid #7aa6d6;border-top:none;"></div><span style='position:absolute;left:468px;top:266px;font:700 18.40px/37px "Liberation Sans",sans-serif;color:#1f3864;white-space:pre;transform:translate(0.600px,0.082px) scale(.25);transform-origin:0 0;letter-spacing:0.076px;'>Al tuo fianco sempre, ovunque e con ogni mezzo.</span><div style='position:absolute;left:468px;top:278px;font:400 18.00px/36px "Liberation Sans",sans-serif;color:#506283;white-space:pre;letter-spacing:0.576px;transform:translate(0.600px,0.305px) scale(.25);transform-origin:0 0;'><span style="font-weight:400;color:#506283">Da quasi sessant’anni, Baldini è sinonimo di </span><span style="font-weight:700;color:#1f3864">affidabilità, innovazione e presenza costante sul territorio</span><span style="font-weight:400;color:#506283">. Ogni giorno supportiamo </span><span style="font-weight:700;color:#1f3864">imprese, enti</span></div><div style='position:absolute;left:468px;top:284px;font:400 18.00px/36px "Liberation Sans",sans-serif;color:#506283;white-space:pre;letter-spacing:0.706px;transform:translate(0.600px,0.405px) scale(.25);transform-origin:0 0;'><span style="font-weight:700;color:#1f3864">e privati</span><span style="font-weight:400;color:#506283"> con </span><span style="font-weight:700;color:#1f3864">soluzioni personalizzate</span><span style="font-weight:400;color:#506283"> per il sollevamento, la movimentazione, i trasporti eccezionali, il soccorso stradale, l’autodemolizione e la</span></div><div style='position:absolute;left:468px;top:290px;font:400 18.00px/36px "Liberation Sans",sans-serif;color:#506283;white-space:pre;letter-spacing:0.780px;transform:translate(0.600px,0.505px) scale(.25);transform-origin:0 0;'><span style="font-weight:400;color:#506283">formazione professionale. Con un parco mezzi all’avanguardia, operatori specializzati e sedi operative in Emilia-Romagna e Marche, siamo</span></div><div style='position:absolute;left:468px;top:296px;font:400 18.00px/36px "Liberation Sans",sans-serif;color:#506283;white-space:pre;letter-spacing:0.836px;transform:translate(0.600px,0.805px) scale(.25);transform-origin:0 0;'><span style="font-weight:400;color:#506283">pronti ad affrontare ogni sfida sul territorio italiano, e non solo. Dai piccoli interventi locali alle grandi movimentazioni industriali, il nostro</span></div><div style='position:absolute;left:468px;top:302px;font:400 18.00px/36px "Liberation Sans",sans-serif;color:#506283;white-space:pre;letter-spacing:0.636px;transform:translate(0.600px,0.905px) scale(.25);transform-origin:0 0;'><span style="font-weight:400;color:#506283">obiettivo è sempre lo stesso: garantire il massimo in termini di </span><span style="font-weight:700;color:#1f3864">qualità, sicurezza e rapidità d’intervento</span><span style="font-weight:400;color:#506283">.</span></div>
<span style='position:absolute;left:468px;top:324px;font:700 42.40px/85px "Liberation Sans",sans-serif;color:#1e3f74;white-space:pre;transform:translate(0.400px,0.702px) scale(.25);transform-origin:0 0;letter-spacing:-0.356px;-webkit-text-stroke:1.1px #1e3f74;'>Soluzioni integrate per sollevamento,</span><span style='position:absolute;left:468px;top:336px;font:700 42.40px/85px "Liberation Sans",sans-serif;color:#1e3f74;white-space:pre;transform:translate(0.400px,0.202px) scale(.25);transform-origin:0 0;letter-spacing:-0.279px;-webkit-text-stroke:1.1px #1e3f74;'>trasporto e assistenza privati</span><div style="position:absolute;left:896.40px;top:341.00px;width:23.80px;height:6.00px;background:#3d9be6;"></div><div style="position:absolute;left:899.00px;top:343.00px;width:2.20px;height:2.00px;background:#bfe0fa;"></div><div style="position:absolute;left:903.20px;top:343.00px;width:2.20px;height:2.00px;background:#bfe0fa;"></div><div style="position:absolute;left:907.40px;top:343.00px;width:2.20px;height:2.00px;background:#bfe0fa;"></div><div style="position:absolute;left:911.60px;top:343.00px;width:2.20px;height:2.00px;background:#bfe0fa;"></div>
<svg width="0" height="0" style="position:absolute"><defs><radialGradient id="c0" cx=".40" cy=".36" r=".70"><stop offset="0" stop-color="#c65042"/><stop offset=".55" stop-color="#ad1116"/><stop offset="1" stop-color="#880e0e"/></radialGradient><radialGradient id="cd0" cx=".45" cy=".40" r=".75"><stop offset="0" stop-color="#940f11"/><stop offset="1" stop-color="#690b0a"/></radialGradient><radialGradient id="c1" cx=".40" cy=".36" r=".70"><stop offset="0" stop-color="#e35442"/><stop offset=".55" stop-color="#d71716"/><stop offset="1" stop-color="#a3120e"/></radialGradient><radialGradient id="cd1" cx=".45" cy=".40" r=".75"><stop offset="0" stop-color="#b51411"/><stop offset="1" stop-color="#7d0e0a"/></radialGradient><radialGradient id="c2" cx=".40" cy=".36" r=".70"><stop offset="0" stop-color="#ed5e43"/><stop offset=".55" stop-color="#e52517"/><stop offset="1" stop-color="#ac1b0f"/></radialGradient><radialGradient id="cd2" cx=".45" cy=".40" r=".75"><stop offset="0" stop-color="#c01f12"/><stop offset="1" stop-color="#83150b"/></radialGradient><radialGradient id="c3" cx=".40" cy=".36" r=".70"><stop offset="0" stop-color="#f36e43"/><stop offset=".55" stop-color="#ee3d17"/><stop offset="1" stop-color="#b22a0f"/></radialGradient><radialGradient id="cd3" cx=".45" cy=".40" r=".75"><stop offset="0" stop-color="#c73212"/><stop offset="1" stop-color="#88200b"/></radialGradient><radialGradient id="c4" cx=".40" cy=".36" r=".70"><stop offset="0" stop-color="#f78642"/><stop offset=".55" stop-color="#f45f16"/><stop offset="1" stop-color="#b53f0e"/></radialGradient><radialGradient id="cd4" cx=".45" cy=".40" r=".75"><stop offset="0" stop-color="#cb4c11"/><stop offset="1" stop-color="#8a300a"/></radialGradient><radialGradient id="c5" cx=".40" cy=".36" r=".70"><stop offset="0" stop-color="#f99e44"/><stop offset=".55" stop-color="#f68119"/><stop offset="1" stop-color="#b75510"/></radialGradient><radialGradient id="cd5" cx=".45" cy=".40" r=".75"><stop offset="0" stop-color="#cd6713"/><stop offset="1" stop-color="#8b400b"/></radialGradient><radialGradient id="c6" cx=".40" cy=".36" r=".70"><stop offset="0" stop-color="#f7b348"/><stop offset=".55" stop-color="#f49f1e"/><stop offset="1" stop-color="#b56913"/></radialGradient><radialGradient id="cd6" cx=".45" cy=".40" r=".75"><stop offset="0" stop-color="#cc7e18"/><stop offset="1" stop-color="#8a4e0e"/></radialGradient><radialGradient id="c7" cx=".40" cy=".36" r=".70"><stop offset="0" stop-color="#ebbf4d"/><stop offset=".55" stop-color="#e3b026"/><stop offset="1" stop-color="#aa7318"/></radialGradient><radialGradient id="cd7" cx=".45" cy=".40" r=".75"><stop offset="0" stop-color="#be8b1d"/><stop offset="1" stop-color="#825612"/></radialGradient><radialGradient id="c8" cx=".40" cy=".36" r=".70"><stop offset="0" stop-color="#c9b751"/><stop offset=".55" stop-color="#b1a42b"/><stop offset="1" stop-color="#8b6c1b"/></radialGradient><radialGradient id="cd8" cx=".45" cy=".40" r=".75"><stop offset="0" stop-color="#988221"/><stop offset="1" stop-color="#6b5014"/></radialGradient><radialGradient id="c9" cx=".40" cy=".36" r=".70"><stop offset="0" stop-color="#a0a851"/><stop offset=".55" stop-color="#788f2a"/><stop offset="1" stop-color="#665e1b"/></radialGradient><radialGradient id="cd9" cx=".45" cy=".40" r=".75"><stop offset="0" stop-color="#6b7121"/><stop offset="1" stop-color="#504614"/></radialGradient><g id="cardimg"><rect width="87" height="87" fill="#efe4df"/><circle cx="60.0" cy="55.2" r="4.1" fill="url(#cd6)"/><circle cx="69.0" cy="70.3" r="4.3" fill="url(#cd7)"/><circle cx="20.5" cy="0.3" r="5.2" fill="url(#cd0)"/><circle cx="6.0" cy="69.1" r="5.4" fill="url(#cd2)"/><circle cx="3.7" cy="86.8" r="4.3" fill="url(#cd3)"/><circle cx="53.6" cy="3.0" r="6.3" fill="url(#cd2)"/><circle cx="10.1" cy="82.8" r="5.2" fill="url(#cd3)"/><circle cx="71.1" cy="10.9" r="4.1" fill="url(#cd4)"/><circle cx="48.0" cy="29.8" r="5.0" fill="url(#cd3)"/><circle cx="3.2" cy="75.3" r="4.2" fill="url(#cd2)"/><circle cx="18.1" cy="84.3" r="6.0" fill="url(#cd4)"/><circle cx="66.4" cy="50.5" r="6.0" fill="url(#cd6)"/><circle cx="41.4" cy="72.0" r="4.0" fill="url(#cd5)"/><circle cx="77.2" cy="35.6" r="6.5" fill="url(#cd6)"/><circle cx="33.6" cy="86.6" r="5.0" fill="url(#cd5)"/><circle cx="8.1" cy="62.5" r="3.7" fill="url(#cd3)"/><circle cx="42.8" cy="47.9" r="5.1" fill="url(#cd4)"/><circle cx="53.0" cy="48.4" r="4.3" fill="url(#cd5)"/><circle cx="14.8" cy="30.3" r="4.2" fill="url(#cd2)"/><circle cx="52.0" cy="26.7" r="4.7" fill="url(#cd3)"/><circle cx="70.8" cy="67.6" r="3.8" fill="url(#cd7)"/><circle cx="58.8" cy="78.2" r="5.7" fill="url(#cd7)"/><circle cx="86.1" cy="83.6" r="4.9" fill="url(#cd9)"/><circle cx="42.7" cy="32.7" r="6.4" fill="url(#cd3)"/><circle cx="14.1" cy="6.0" r="6.3" fill="url(#cd1)"/><circle cx="42.0" cy="72.8" r="6.0" fill="url(#cd5)"/><circle cx="25.2" cy="36.5" r="4.4" fill="url(#cd2)"/><circle cx="29.4" cy="78.2" r="3.8" fill="url(#cd5)"/><circle cx="41.7" cy="21.9" r="5.9" fill="url(#cd3)"/><circle cx="63.4" cy="2.5" r="5.2" fill="url(#cd3)"/><circle cx="69.2" cy="76.7" r="6.2" fill="url(#cd8)"/><circle cx="50.6" cy="73.9" r="4.9" fill="url(#cd6)"/><circle cx="24.0" cy="66.8" r="5.3" fill="url(#cd3)"/><circle cx="83.0" cy="2.0" r="5.7" fill="url(#cd4)"/><circle cx="74.1" cy="50.8" r="5.6" fill="url(#cd6)"/><circle cx="83.4" cy="78.8" r="4.9" fill="url(#cd9)"/><circle cx="8.2" cy="2.2" r="3.9" fill="url(#cd0)"/><circle cx="75.5" cy="57.0" r="4.0" fill="url(#cd7)"/><circle cx="28.2" cy="43.0" r="5.3" fill="url(#cd2)"/><circle cx="16.0" cy="32.9" r="4.1" fill="url(#cd2)"/><circle cx="4.0" cy="61.8" r="5.3" fill="url(#cd2)"/><circle cx="68.8" cy="0.7" r="6.0" fill="url(#cd3)"/><circle cx="66.5" cy="15.3" r="3.8" fill="url(#cd4)"/><circle cx="60.6" cy="27.3" r="4.4" fill="url(#cd4)"/><circle cx="26.9" cy="78.4" r="4.8" fill="url(#cd4)"/><circle cx="47.8" cy="82.5" r="5.2" fill="url(#cd6)"/><circle cx="44.2" cy="63.9" r="5.5" fill="url(#cd5)"/><circle cx="60.9" cy="45.7" r="4.6" fill="url(#cd5)"/><circle cx="70.9" cy="85.0" r="3.8" fill="url(#cd8)"/><circle cx="86.4" cy="9.4" r="4.6" fill="url(#cd4)"/><circle cx="70.8" cy="66.1" r="3.8" fill="url(#cd7)"/><circle cx="1.7" cy="56.1" r="5.5" fill="url(#cd1)"/><circle cx="33.9" cy="34.9" r="5.2" fill="url(#cd2)"/><circle cx="37.8" cy="21.5" r="3.8" fill="url(#cd3)"/><circle cx="63.0" cy="39.7" r="6.1" fill="url(#cd5)"/><circle cx="42.4" cy="55.0" r="4.8" fill="url(#cd5)"/><circle cx="41.7" cy="42.8" r="3.9" fill="url(#cd4)"/><circle cx="67.8" cy="54.5" r="6.4" fill="url(#cd7)"/><circle cx="74.7" cy="60.8" r="5.7" fill="url(#cd7)"/><circle cx="79.8" cy="33.6" r="4.4" fill="url(#cd6)"/><circle cx="83.8" cy="86.1" r="6.2" fill="url(#cd9)"/><circle cx="27.1" cy="34.0" r="4.6" fill="url(#cd2)"/><circle cx="6.9" cy="26.3" r="5.3" fill="url(#cd1)"/><circle cx="40.2" cy="9.4" r="5.9" fill="url(#cd3)"/><circle cx="17.9" cy="29.2" r="5.8" fill="url(#cd2)"/><circle cx="22.7" cy="82.8" r="5.7" fill="url(#cd4)"/><circle cx="73.5" cy="13.3" r="4.4" fill="url(#cd4)"/><circle cx="52.0" cy="24.1" r="4.2" fill="url(#cd3)"/><circle cx="40.6" cy="38.0" r="6.5" fill="url(#cd4)"/><circle cx="15.2" cy="33.5" r="4.5" fill="url(#cd1)"/><circle cx="83.6" cy="3.0" r="4.2" fill="url(#cd4)"/><circle cx="61.3" cy="1.7" r="6.5" fill="url(#cd3)"/><circle cx="52.9" cy="60.9" r="3.7" fill="url(#cd5)"/><circle cx="47.4" cy="8.2" r="3.6" fill="url(#cd2)"/><circle cx="77.8" cy="32.2" r="5.0" fill="url(#cd5)"/><circle cx="71.5" cy="46.1" r="6.1" fill="url(#cd6)"/><circle cx="35.1" cy="48.0" r="4.2" fill="url(#cd3)"/><circle cx="73.4" cy="80.5" r="6.1" fill="url(#cd9)"/><circle cx="50.6" cy="7.0" r="3.7" fill="url(#cd3)"/><circle cx="66.1" cy="16.4" r="5.9" fill="url(#cd3)"/><circle cx="52.8" cy="54.0" r="6.1" fill="url(#cd5)"/><circle cx="29.4" cy="23.5" r="6.1" fill="url(#cd2)"/><circle cx="54.6" cy="77.4" r="4.5" fill="url(#cd6)"/><circle cx="44.5" cy="59.0" r="3.8" fill="url(#cd4)"/><circle cx="5.1" cy="3.2" r="4.4" fill="url(#cd0)"/><circle cx="56.8" cy="13.8" r="5.7" fill="url(#cd3)"/><circle cx="46.9" cy="35.5" r="6.5" fill="url(#cd4)"/><circle cx="45.6" cy="6.8" r="5.9" fill="url(#cd3)"/><circle cx="3.5" cy="30.6" r="4.3" fill="url(#cd1)"/><ellipse cx="10.0" cy="0.6" rx="7.8" ry="7.3" fill="#3a0a00" opacity=".28"/><ellipse cx="9.3" cy="-0.4" rx="7.7" ry="7.1" fill="url(#c0)"/><ellipse cx="6.6" cy="-3.4" rx="1.9" ry="0.8" fill="#fff" opacity=".30" transform="rotate(-35 6.6 -3.4)"/><path d="M10.3 -0.3L9.7 -2.4M10.3 -0.3L12.1 -1.5M10.3 -0.3L11.9 1.0M10.3 -0.3L9.5 1.6M10.3 -0.3L8.1 -0.5" stroke="#889738" stroke-width="0.6" stroke-linecap="round" opacity=".85"/><ellipse cx="-1.6" cy="6.8" rx="7.1" ry="6.4" fill="#3a0a00" opacity=".28"/><ellipse cx="-2.2" cy="5.9" rx="7.0" ry="6.3" fill="url(#c0)"/><ellipse cx="-4.7" cy="3.2" rx="1.7" ry="0.7" fill="#fff" opacity=".30" transform="rotate(-35 -4.7 3.2)"/><path d="M-2.7 6.1L-0.8 5.5M-2.7 6.1L-1.5 7.7M-2.7 6.1L-3.8 7.8M-2.7 6.1L-4.6 5.6M-2.7 6.1L-2.7 4.2" stroke="#8d9a39" stroke-width="0.5" stroke-linecap="round" opacity=".85"/><ellipse cx="7.1" cy="10.0" rx="3.3" ry="3.0" fill="#3a0a00" opacity=".28"/><ellipse cx="6.8" cy="9.5" rx="3.2" ry="2.9" fill="url(#c0)"/><ellipse cx="17.7" cy="7.8" rx="5.2" ry="4.6" fill="#3a0a00" opacity=".28"/><ellipse cx="17.2" cy="7.1" rx="5.1" ry="4.5" fill="url(#c1)"/><ellipse cx="15.3" cy="5.0" rx="1.3" ry="0.6" fill="#fff" opacity=".30" transform="rotate(-35 15.3 5.0)"/><ellipse cx="31.4" cy="5.6" rx="8.0" ry="7.6" fill="#3a0a00" opacity=".28"/><ellipse cx="30.6" cy="4.5" rx="7.8" ry="7.5" fill="url(#c1)"/><ellipse cx="27.5" cy="1.1" rx="2.1" ry="0.9" fill="#fff" opacity=".30" transform="rotate(-35 27.5 1.1)"/><ellipse cx="45.8" cy="2.1" rx="7.6" ry="6.8" fill="#3a0a00" opacity=".28"/><ellipse cx="45.1" cy="1.0" rx="7.5" ry="6.6" fill="url(#c2)"/><ellipse cx="42.4" cy="-2.0" rx="1.9" ry="0.8" fill="#fff" opacity=".30" transform="rotate(-35 42.4 -2.0)"/><path d="M45.2 1.2L43.0 1.0M45.2 1.2L44.7 -0.9M45.2 1.2L47.0 0.1M45.2 1.2L46.9 2.6M45.2 1.2L44.4 3.2" stroke="#64812c" stroke-width="0.6" stroke-linecap="round" opacity=".85"/><ellipse cx="59.4" cy="-1.1" rx="7.4" ry="7.1" fill="#3a0a00" opacity=".28"/><ellipse cx="58.7" cy="-2.1" rx="7.3" ry="7.0" fill="url(#c2)"/><ellipse cx="55.9" cy="-5.1" rx="1.9" ry="0.8" fill="#fff" opacity=".30" transform="rotate(-35 55.9 -5.1)"/><ellipse cx="-0.4" cy="19.7" rx="3.0" ry="2.7" fill="#3a0a00" opacity=".28"/><ellipse cx="-0.7" cy="19.2" rx="3.0" ry="2.7" fill="url(#c0)"/><ellipse cx="9.2" cy="20.4" rx="7.8" ry="6.9" fill="#3a0a00" opacity=".28"/><ellipse cx="8.4" cy="19.3" rx="7.6" ry="6.7" fill="url(#c0)"/><ellipse cx="5.6" cy="16.2" rx="1.9" ry="0.8" fill="#fff" opacity=".30" transform="rotate(-35 5.6 16.2)"/><path d="M7.9 18.7L5.7 18.3M7.9 18.7L7.5 16.5M7.9 18.7L9.9 17.7M7.9 18.7L9.4 20.3M7.9 18.7L6.8 20.7" stroke="#63802c" stroke-width="0.6" stroke-linecap="round" opacity=".85"/><ellipse cx="73.3" cy="1.6" rx="4.4" ry="4.6" fill="#3a0a00" opacity=".28"/><ellipse cx="72.9" cy="0.9" rx="4.3" ry="4.5" fill="url(#c4)"/><ellipse cx="71.2" cy="-1.0" rx="1.2" ry="0.5" fill="#fff" opacity=".30" transform="rotate(-35 71.2 -1.0)"/><ellipse cx="23.5" cy="17.3" rx="6.4" ry="6.0" fill="#3a0a00" opacity=".28"/><ellipse cx="22.9" cy="16.4" rx="6.3" ry="5.9" fill="url(#c1)"/><ellipse cx="20.5" cy="13.8" rx="1.7" ry="0.7" fill="#fff" opacity=".30" transform="rotate(-35 20.5 13.8)"/><path d="M22.8 15.5L23.9 14.0M22.8 15.5L24.6 16.1M22.8 15.5L22.8 17.4M22.8 15.5L21.0 16.1M22.8 15.5L21.6 14.0" stroke="#879637" stroke-width="0.5" stroke-linecap="round" opacity=".85"/><ellipse cx="67.2" cy="4.6" rx="3.4" ry="3.2" fill="#3a0a00" opacity=".28"/><ellipse cx="66.9" cy="4.1" rx="3.3" ry="3.1" fill="url(#c3)"/><ellipse cx="46.9" cy="11.9" rx="4.9" ry="4.9" fill="#3a0a00" opacity=".28"/><ellipse cx="46.4" cy="11.2" rx="4.8" ry="4.8" fill="url(#c3)"/><ellipse cx="44.5" cy="9.1" rx="1.3" ry="0.5" fill="#fff" opacity=".30" transform="rotate(-35 44.5 9.1)"/><ellipse cx="0.2" cy="27.5" rx="5.4" ry="5.4" fill="#3a0a00" opacity=".28"/><ellipse cx="-0.4" cy="26.7" rx="5.3" ry="5.3" fill="url(#c0)"/><ellipse cx="-2.4" cy="24.5" rx="1.4" ry="0.6" fill="#fff" opacity=".30" transform="rotate(-35 -2.4 24.5)"/><ellipse cx="58.0" cy="13.0" rx="8.2" ry="7.9" fill="#3a0a00" opacity=".28"/><ellipse cx="57.2" cy="11.9" rx="8.1" ry="7.7" fill="url(#c4)"/><ellipse cx="54.2" cy="8.6" rx="2.1" ry="0.9" fill="#fff" opacity=".30" transform="rotate(-35 54.2 8.6)"/><ellipse cx="83.5" cy="5.6" rx="6.6" ry="6.7" fill="#3a0a00" opacity=".28"/><ellipse cx="82.9" cy="4.7" rx="6.4" ry="6.6" fill="url(#c5)"/><ellipse cx="80.3" cy="1.9" rx="1.7" ry="0.7" fill="#fff" opacity=".30" transform="rotate(-35 80.3 1.9)"/><ellipse cx="38.9" cy="19.6" rx="8.3" ry="6.9" fill="#3a0a00" opacity=".28"/><ellipse cx="38.2" cy="18.5" rx="8.1" ry="6.8" fill="url(#c2)"/><ellipse cx="35.3" cy="15.4" rx="2.0" ry="0.8" fill="#fff" opacity=".30" transform="rotate(-35 35.3 15.4)"/><ellipse cx="69.4" cy="10.7" rx="4.3" ry="4.2" fill="#3a0a00" opacity=".28"/><ellipse cx="69.0" cy="10.1" rx="4.2" ry="4.1" fill="url(#c4)"/><ellipse cx="67.4" cy="8.4" rx="1.1" ry="0.4" fill="#fff" opacity=".30" transform="rotate(-35 67.4 8.4)"/><ellipse cx="18.5" cy="27.1" rx="4.8" ry="4.3" fill="#3a0a00" opacity=".28"/><ellipse cx="18.0" cy="26.5" rx="4.7" ry="4.2" fill="url(#c1)"/><ellipse cx="16.2" cy="24.5" rx="1.2" ry="0.5" fill="#fff" opacity=".30" transform="rotate(-35 16.2 24.5)"/><ellipse cx="9.3" cy="32.1" rx="5.1" ry="4.8" fill="#3a0a00" opacity=".28"/><ellipse cx="8.8" cy="31.5" rx="5.0" ry="4.7" fill="url(#c1)"/><ellipse cx="7.0" cy="29.5" rx="1.2" ry="0.5" fill="#fff" opacity=".30" transform="rotate(-35 7.0 29.5)"/><ellipse cx="31.8" cy="30.3" rx="7.7" ry="6.7" fill="#3a0a00" opacity=".28"/><ellipse cx="31.0" cy="29.2" rx="7.5" ry="6.5" fill="url(#c3)"/><ellipse cx="28.1" cy="26.0" rx="2.0" ry="0.8" fill="#fff" opacity=".30" transform="rotate(-35 28.1 26.0)"/><path d="M30.0 28.5L28.8 26.5M30.0 28.5L31.5 26.8M30.0 28.5L32.0 29.4M30.0 28.5L29.7 30.8M30.0 28.5L27.8 29.0" stroke="#5b7b2a" stroke-width="0.6" stroke-linecap="round" opacity=".85"/><ellipse cx="79.7" cy="17.3" rx="8.2" ry="7.0" fill="#3a0a00" opacity=".28"/><ellipse cx="79.0" cy="16.2" rx="8.1" ry="6.8" fill="url(#c5)"/><ellipse cx="76.1" cy="13.1" rx="1.9" ry="0.8" fill="#fff" opacity=".30" transform="rotate(-35 76.1 13.1)"/><ellipse cx="42.3" cy="29.2" rx="5.0" ry="4.4" fill="#3a0a00" opacity=".28"/><ellipse cx="41.8" cy="28.5" rx="4.9" ry="4.3" fill="url(#c3)"/><ellipse cx="40.0" cy="26.4" rx="1.3" ry="0.5" fill="#fff" opacity=".30" transform="rotate(-35 40.0 26.4)"/><ellipse cx="52.4" cy="27.4" rx="6.9" ry="6.1" fill="#3a0a00" opacity=".28"/><ellipse cx="51.7" cy="26.4" rx="6.8" ry="6.0" fill="url(#c4)"/><ellipse cx="49.1" cy="23.5" rx="1.8" ry="0.8" fill="#fff" opacity=".30" transform="rotate(-35 49.1 23.5)"/><path d="M50.8 26.1L50.5 28.2M50.8 26.1L48.8 26.4M50.8 26.1L49.9 24.3M50.8 26.1L52.3 24.7M50.8 26.1L52.6 27.1" stroke="#96a03c" stroke-width="0.5" stroke-linecap="round" opacity=".85"/><ellipse cx="21.3" cy="38.1" rx="8.3" ry="7.0" fill="#3a0a00" opacity=".28"/><ellipse cx="20.5" cy="37.0" rx="8.1" ry="6.9" fill="url(#c2)"/><ellipse cx="17.6" cy="33.8" rx="2.0" ry="0.8" fill="#fff" opacity=".30" transform="rotate(-35 17.6 33.8)"/><ellipse cx="68.0" cy="24.4" rx="7.6" ry="6.5" fill="#3a0a00" opacity=".28"/><ellipse cx="67.3" cy="23.4" rx="7.5" ry="6.4" fill="url(#c4)"/><ellipse cx="64.5" cy="20.3" rx="1.9" ry="0.8" fill="#fff" opacity=".30" transform="rotate(-35 64.5 20.3)"/><ellipse cx="5.8" cy="43.6" rx="8.0" ry="7.5" fill="#3a0a00" opacity=".28"/><ellipse cx="5.1" cy="42.6" rx="7.9" ry="7.3" fill="url(#c1)"/><ellipse cx="2.3" cy="39.5" rx="1.9" ry="0.8" fill="#fff" opacity=".30" transform="rotate(-35 2.3 39.5)"/><path d="M5.6 42.3L6.6 40.3M5.6 42.3L7.8 42.6M5.6 42.3L6.0 44.5M5.6 42.3L3.7 43.3M5.6 42.3L4.0 40.7" stroke="#68832e" stroke-width="0.6" stroke-linecap="round" opacity=".85"/><ellipse cx="37.7" cy="36.3" rx="3.3" ry="2.9" fill="#3a0a00" opacity=".28"/><ellipse cx="37.4" cy="35.9" rx="3.2" ry="2.8" fill="url(#c2)"/><ellipse cx="30.8" cy="40.6" rx="4.5" ry="4.1" fill="#3a0a00" opacity=".28"/><ellipse cx="30.4" cy="40.0" rx="4.4" ry="4.1" fill="url(#c3)"/><ellipse cx="28.8" cy="38.3" rx="1.1" ry="0.5" fill="#fff" opacity=".30" transform="rotate(-35 28.8 38.3)"/><ellipse cx="79.8" cy="26.4" rx="3.5" ry="2.9" fill="#3a0a00" opacity=".28"/><ellipse cx="79.5" cy="25.9" rx="3.4" ry="2.9" fill="url(#c5)"/><ellipse cx="48.8" cy="38.1" rx="6.0" ry="6.1" fill="#3a0a00" opacity=".28"/><ellipse cx="48.2" cy="37.3" rx="5.9" ry="6.0" fill="url(#c4)"/><ellipse cx="46.0" cy="34.8" rx="1.6" ry="0.7" fill="#fff" opacity=".30" transform="rotate(-35 46.0 34.8)"/><path d="M47.4 36.5L49.0 37.3M47.4 36.5L47.0 38.2M47.4 36.5L45.6 36.7M47.4 36.5L46.7 34.8M47.4 36.5L48.7 35.2" stroke="#96a03c" stroke-width="0.5" stroke-linecap="round" opacity=".85"/><ellipse cx="75.6" cy="30.8" rx="4.2" ry="3.9" fill="#3a0a00" opacity=".28"/><ellipse cx="75.3" cy="30.2" rx="4.1" ry="3.8" fill="url(#c5)"/><ellipse cx="62.3" cy="36.5" rx="6.6" ry="6.5" fill="#3a0a00" opacity=".28"/><ellipse cx="61.6" cy="35.5" rx="6.5" ry="6.4" fill="url(#c4)"/><ellipse cx="59.1" cy="32.8" rx="1.7" ry="0.7" fill="#fff" opacity=".30" transform="rotate(-35 59.1 32.8)"/><path d="M61.1 36.4L62.9 37.3M61.1 36.4L60.8 38.3M61.1 36.4L59.2 36.7M61.1 36.4L60.2 34.7M61.1 36.4L62.5 35.0" stroke="#889738" stroke-width="0.5" stroke-linecap="round" opacity=".85"/><ellipse cx="28.0" cy="46.6" rx="3.1" ry="2.8" fill="#3a0a00" opacity=".28"/><ellipse cx="27.7" cy="46.2" rx="3.0" ry="2.7" fill="url(#c3)"/><ellipse cx="8.1" cy="53.6" rx="3.5" ry="3.4" fill="#3a0a00" opacity=".28"/><ellipse cx="7.8" cy="53.1" rx="3.4" ry="3.3" fill="url(#c2)"/><ellipse cx="16.8" cy="51.5" rx="6.6" ry="6.3" fill="#3a0a00" opacity=".28"/><ellipse cx="16.2" cy="50.6" rx="6.4" ry="6.2" fill="url(#c3)"/><ellipse cx="13.7" cy="47.8" rx="1.7" ry="0.7" fill="#fff" opacity=".30" transform="rotate(-35 13.7 47.8)"/><path d="M16.6 49.9L17.7 48.3M16.6 49.9L18.5 50.4M16.6 49.9L16.7 51.9M16.6 49.9L14.8 50.6M16.6 49.9L15.4 48.4" stroke="#8c9a39" stroke-width="0.5" stroke-linecap="round" opacity=".85"/><ellipse cx="40.2" cy="45.8" rx="7.8" ry="6.8" fill="#3a0a00" opacity=".28"/><ellipse cx="39.5" cy="44.8" rx="7.7" ry="6.7" fill="url(#c3)"/><ellipse cx="36.6" cy="41.6" rx="2.0" ry="0.8" fill="#fff" opacity=".30" transform="rotate(-35 36.6 41.6)"/><ellipse cx="87.1" cy="32.8" rx="7.7" ry="7.4" fill="#3a0a00" opacity=".28"/><ellipse cx="86.4" cy="31.8" rx="7.5" ry="7.3" fill="url(#c6)"/><ellipse cx="83.6" cy="28.7" rx="1.9" ry="0.8" fill="#fff" opacity=".30" transform="rotate(-35 83.6 28.7)"/><ellipse cx="55.3" cy="42.1" rx="3.4" ry="3.0" fill="#3a0a00" opacity=".28"/><ellipse cx="55.0" cy="41.7" rx="3.3" ry="2.9" fill="url(#c4)"/><ellipse cx="0.2" cy="60.0" rx="7.9" ry="7.7" fill="#3a0a00" opacity=".28"/><ellipse cx="-0.6" cy="58.9" rx="7.8" ry="7.5" fill="url(#c1)"/><ellipse cx="-3.5" cy="55.7" rx="2.0" ry="0.8" fill="#fff" opacity=".30" transform="rotate(-35 -3.5 55.7)"/><path d="M-0.5 59.5L-0.7 57.2M-0.5 59.5L1.6 58.6M-0.5 59.5L0.9 61.2M-0.5 59.5L-1.7 61.4M-0.5 59.5L-2.7 58.9" stroke="#919d3a" stroke-width="0.6" stroke-linecap="round" opacity=".85"/><ellipse cx="72.1" cy="42.0" rx="6.6" ry="5.9" fill="#3a0a00" opacity=".28"/><ellipse cx="71.5" cy="41.1" rx="6.4" ry="5.8" fill="url(#c5)"/><ellipse cx="69.0" cy="38.3" rx="1.7" ry="0.7" fill="#fff" opacity=".30" transform="rotate(-35 69.0 38.3)"/><path d="M71.0 41.3L69.1 41.2M71.0 41.3L70.6 39.4M71.0 41.3L72.7 40.3M71.0 41.3L72.5 42.6M71.0 41.3L70.3 43.2" stroke="#949f3b" stroke-width="0.5" stroke-linecap="round" opacity=".85"/><ellipse cx="30.5" cy="54.9" rx="6.4" ry="5.8" fill="#3a0a00" opacity=".28"/><ellipse cx="29.8" cy="54.0" rx="6.3" ry="5.7" fill="url(#c3)"/><ellipse cx="27.4" cy="51.2" rx="1.7" ry="0.7" fill="#fff" opacity=".30" transform="rotate(-35 27.4 51.2)"/><path d="M29.7 53.3L27.8 52.6M29.7 53.3L29.7 51.3M29.7 53.3L31.6 52.7M29.7 53.3L30.8 54.9M29.7 53.3L28.5 54.8" stroke="#909c3a" stroke-width="0.5" stroke-linecap="round" opacity=".85"/><ellipse cx="49.3" cy="51.2" rx="3.9" ry="3.7" fill="#3a0a00" opacity=".28"/><ellipse cx="49.0" cy="50.6" rx="3.9" ry="3.6" fill="url(#c4)"/><ellipse cx="66.1" cy="47.6" rx="3.4" ry="2.9" fill="#3a0a00" opacity=".28"/><ellipse cx="65.8" cy="47.1" rx="3.3" ry="2.9" fill="url(#c5)"/><ellipse cx="13.9" cy="64.1" rx="8.1" ry="7.8" fill="#3a0a00" opacity=".28"/><ellipse cx="13.1" cy="63.0" rx="8.0" ry="7.7" fill="url(#c2)"/><ellipse cx="10.2" cy="59.8" rx="2.0" ry="0.8" fill="#fff" opacity=".30" transform="rotate(-35 10.2 59.8)"/><path d="M13.6 63.5L11.4 64.4M13.6 63.5L12.1 61.8M13.6 63.5L14.8 61.6M13.6 63.5L15.8 64.1M13.6 63.5L13.7 65.8" stroke="#829436" stroke-width="0.6" stroke-linecap="round" opacity=".85"/><ellipse cx="59.3" cy="51.9" rx="7.0" ry="5.9" fill="#3a0a00" opacity=".28"/><ellipse cx="58.6" cy="51.0" rx="6.8" ry="5.8" fill="url(#c5)"/><ellipse cx="56.2" cy="48.3" rx="1.7" ry="0.7" fill="#fff" opacity=".30" transform="rotate(-35 56.2 48.3)"/><ellipse cx="42.1" cy="58.6" rx="6.7" ry="6.6" fill="#3a0a00" opacity=".28"/><ellipse cx="41.4" cy="57.7" rx="6.6" ry="6.5" fill="url(#c4)"/><ellipse cx="38.9" cy="54.9" rx="1.7" ry="0.7" fill="#fff" opacity=".30" transform="rotate(-35 38.9 54.9)"/><ellipse cx="83.7" cy="46.6" rx="6.8" ry="6.6" fill="#3a0a00" opacity=".28"/><ellipse cx="83.0" cy="45.6" rx="6.7" ry="6.5" fill="url(#c7)"/><ellipse cx="80.5" cy="42.8" rx="1.7" ry="0.7" fill="#fff" opacity=".30" transform="rotate(-35 80.5 42.8)"/><path d="M82.1 45.0L84.0 44.7M82.1 45.0L82.9 46.8M82.1 45.0L80.6 46.4M82.1 45.0L80.3 44.1M82.1 45.0L82.4 43.0" stroke="#68832e" stroke-width="0.5" stroke-linecap="round" opacity=".85"/><ellipse cx="52.5" cy="57.3" rx="3.4" ry="3.5" fill="#3a0a00" opacity=".28"/><ellipse cx="52.1" cy="56.8" rx="3.3" ry="3.5" fill="url(#c5)"/><ellipse cx="33.3" cy="63.6" rx="4.5" ry="4.2" fill="#3a0a00" opacity=".28"/><ellipse cx="32.9" cy="62.9" rx="4.4" ry="4.1" fill="url(#c3)"/><ellipse cx="31.2" cy="61.1" rx="1.2" ry="0.5" fill="#fff" opacity=".30" transform="rotate(-35 31.2 61.1)"/><ellipse cx="1.1" cy="74.5" rx="7.5" ry="6.5" fill="#3a0a00" opacity=".28"/><ellipse cx="0.4" cy="73.5" rx="7.4" ry="6.4" fill="url(#c2)"/><ellipse cx="-2.4" cy="70.4" rx="1.9" ry="0.8" fill="#fff" opacity=".30" transform="rotate(-35 -2.4 70.4)"/><path d="M1.2 72.7L2.9 71.3M1.2 72.7L3.0 73.9M1.2 72.7L0.6 74.8M1.2 72.7L-1.0 72.8M1.2 72.7L0.4 70.6" stroke="#899838" stroke-width="0.6" stroke-linecap="round" opacity=".85"/><ellipse cx="71.4" cy="54.8" rx="7.3" ry="6.3" fill="#3a0a00" opacity=".28"/><ellipse cx="70.7" cy="53.9" rx="7.1" ry="6.2" fill="url(#c7)"/><ellipse cx="68.1" cy="51.1" rx="1.8" ry="0.7" fill="#fff" opacity=".30" transform="rotate(-35 68.1 51.1)"/><path d="M69.8 53.4L71.5 54.5M69.8 53.4L69.3 55.4M69.8 53.4L67.8 53.6M69.8 53.4L69.0 51.5M69.8 53.4L71.3 52.1" stroke="#577928" stroke-width="0.5" stroke-linecap="round" opacity=".85"/><ellipse cx="23.1" cy="70.2" rx="4.9" ry="4.5" fill="#3a0a00" opacity=".28"/><ellipse cx="22.6" cy="69.5" rx="4.8" ry="4.4" fill="url(#c4)"/><ellipse cx="20.7" cy="67.4" rx="1.3" ry="0.5" fill="#fff" opacity=".30" transform="rotate(-35 20.7 67.4)"/><ellipse cx="62.2" cy="61.1" rx="3.4" ry="3.2" fill="#3a0a00" opacity=".28"/><ellipse cx="61.8" cy="60.7" rx="3.3" ry="3.1" fill="url(#c7)"/><ellipse cx="45.5" cy="66.6" rx="4.0" ry="3.9" fill="#3a0a00" opacity=".28"/><ellipse cx="45.1" cy="66.1" rx="3.9" ry="3.8" fill="url(#c5)"/><ellipse cx="54.9" cy="67.1" rx="7.0" ry="6.0" fill="#3a0a00" opacity=".28"/><ellipse cx="54.2" cy="66.2" rx="6.9" ry="5.9" fill="url(#c6)"/><ellipse cx="51.7" cy="63.4" rx="1.7" ry="0.7" fill="#fff" opacity=".30" transform="rotate(-35 51.7 63.4)"/><path d="M53.2 66.3L52.8 68.3M53.2 66.3L51.2 66.6M53.2 66.3L52.4 64.5M53.2 66.3L54.7 64.9M53.2 66.3L55.0 67.2" stroke="#68832e" stroke-width="0.5" stroke-linecap="round" opacity=".85"/><ellipse cx="17.8" cy="78.3" rx="6.3" ry="5.9" fill="#3a0a00" opacity=".28"/><ellipse cx="17.2" cy="77.4" rx="6.1" ry="5.8" fill="url(#c3)"/><ellipse cx="14.8" cy="74.8" rx="1.7" ry="0.7" fill="#fff" opacity=".30" transform="rotate(-35 14.8 74.8)"/><ellipse cx="32.2" cy="74.5" rx="6.5" ry="6.3" fill="#3a0a00" opacity=".28"/><ellipse cx="31.5" cy="73.6" rx="6.4" ry="6.2" fill="url(#c4)"/><ellipse cx="29.1" cy="70.9" rx="1.7" ry="0.7" fill="#fff" opacity=".30" transform="rotate(-35 29.1 70.9)"/><ellipse cx="82.0" cy="59.8" rx="5.5" ry="5.4" fill="#3a0a00" opacity=".28"/><ellipse cx="81.5" cy="59.0" rx="5.4" ry="5.3" fill="url(#c7)"/><ellipse cx="79.4" cy="56.7" rx="1.4" ry="0.6" fill="#fff" opacity=".30" transform="rotate(-35 79.4 56.7)"/><path d="M82.0 58.4L83.3 57.4M82.0 58.4L83.3 59.3M82.0 58.4L81.5 59.9M82.0 58.4L80.3 58.3M82.0 58.4L81.5 56.8" stroke="#728a31" stroke-width="0.5" stroke-linecap="round" opacity=".85"/><ellipse cx="69.9" cy="65.6" rx="4.4" ry="4.2" fill="#3a0a00" opacity=".28"/><ellipse cx="69.4" cy="65.0" rx="4.3" ry="4.1" fill="url(#c7)"/><ellipse cx="67.8" cy="63.3" rx="1.1" ry="0.5" fill="#fff" opacity=".30" transform="rotate(-35 67.8 63.3)"/><ellipse cx="5.7" cy="86.9" rx="7.4" ry="6.4" fill="#3a0a00" opacity=".28"/><ellipse cx="5.0" cy="85.9" rx="7.3" ry="6.2" fill="url(#c3)"/><ellipse cx="2.2" cy="82.8" rx="1.9" ry="0.8" fill="#fff" opacity=".30" transform="rotate(-35 2.2 82.8)"/><ellipse cx="76.6" cy="72.8" rx="6.8" ry="6.7" fill="#3a0a00" opacity=".28"/><ellipse cx="75.9" cy="71.9" rx="6.7" ry="6.6" fill="url(#c9)"/><ellipse cx="73.4" cy="69.0" rx="1.8" ry="0.7" fill="#fff" opacity=".30" transform="rotate(-35 73.4 69.0)"/><ellipse cx="22.8" cy="89.6" rx="7.3" ry="7.0" fill="#3a0a00" opacity=".28"/><ellipse cx="22.2" cy="88.7" rx="7.2" ry="6.8" fill="url(#c5)"/><ellipse cx="19.5" cy="85.8" rx="1.8" ry="0.8" fill="#fff" opacity=".30" transform="rotate(-35 19.5 85.8)"/><path d="M21.5 89.3L20.4 91.1M21.5 89.3L19.4 88.8M21.5 89.3L21.3 87.2M21.5 89.3L23.4 88.5M21.5 89.3L22.8 90.8" stroke="#738a31" stroke-width="0.6" stroke-linecap="round" opacity=".85"/><ellipse cx="47.4" cy="82.9" rx="8.3" ry="7.3" fill="#3a0a00" opacity=".28"/><ellipse cx="46.6" cy="81.7" rx="8.1" ry="7.1" fill="url(#c7)"/><ellipse cx="43.5" cy="78.3" rx="2.1" ry="0.9" fill="#fff" opacity=".30" transform="rotate(-35 43.5 78.3)"/><path d="M46.5 82.6L47.2 80.2M46.5 82.6L48.9 82.5M46.5 82.6L47.3 84.9M46.5 82.6L44.5 84.1M46.5 82.6L44.4 81.2" stroke="#839436" stroke-width="0.7" stroke-linecap="round" opacity=".85"/><ellipse cx="62.2" cy="78.5" rx="7.4" ry="7.1" fill="#3a0a00" opacity=".28"/><ellipse cx="61.5" cy="77.5" rx="7.2" ry="7.0" fill="url(#c7)"/><ellipse cx="58.6" cy="74.3" rx="2.0" ry="0.8" fill="#fff" opacity=".30" transform="rotate(-35 58.6 74.3)"/><path d="M60.5 78.5L62.4 79.6M60.5 78.5L60.0 80.7M60.5 78.5L58.2 78.7M60.5 78.5L59.6 76.4M60.5 78.5L62.2 77.0" stroke="#6e8730" stroke-width="0.6" stroke-linecap="round" opacity=".85"/><ellipse cx="89.4" cy="71.0" rx="6.6" ry="6.5" fill="#3a0a00" opacity=".28"/><ellipse cx="88.7" cy="70.0" rx="6.4" ry="6.3" fill="url(#c8)"/><ellipse cx="86.1" cy="67.2" rx="1.8" ry="0.7" fill="#fff" opacity=".30" transform="rotate(-35 86.1 67.2)"/><ellipse cx="35.3" cy="87.2" rx="6.8" ry="6.9" fill="#3a0a00" opacity=".28"/><ellipse cx="34.6" cy="86.3" rx="6.7" ry="6.8" fill="url(#c5)"/><ellipse cx="32.0" cy="83.4" rx="1.8" ry="0.7" fill="#fff" opacity=".30" transform="rotate(-35 32.0 83.4)"/><path d="M33.6 86.9L34.4 85.0M33.6 86.9L35.7 87.0M33.6 86.9L34.2 88.9M33.6 86.9L31.9 88.0M33.6 86.9L32.1 85.6" stroke="#849536" stroke-width="0.5" stroke-linecap="round" opacity=".85"/><ellipse cx="56.4" cy="89.0" rx="4.0" ry="4.0" fill="#3a0a00" opacity=".28"/><ellipse cx="56.0" cy="88.5" rx="3.9" ry="3.9" fill="url(#c7)"/><ellipse cx="54.5" cy="86.7" rx="1.1" ry="0.4" fill="#fff" opacity=".30" transform="rotate(-35 54.5 86.7)"/><ellipse cx="71.0" cy="88.1" rx="7.5" ry="6.8" fill="#3a0a00" opacity=".28"/><ellipse cx="70.3" cy="87.2" rx="7.3" ry="6.7" fill="url(#c8)"/><ellipse cx="67.8" cy="84.3" rx="1.8" ry="0.7" fill="#fff" opacity=".30" transform="rotate(-35 67.8 84.3)"/><ellipse cx="85.2" cy="85.0" rx="7.0" ry="7.1" fill="#3a0a00" opacity=".28"/><ellipse cx="84.5" cy="84.0" rx="6.9" ry="7.0" fill="url(#c9)"/><ellipse cx="81.7" cy="81.0" rx="1.9" ry="0.8" fill="#fff" opacity=".30" transform="rotate(-35 81.7 81.0)"/><path d="M84.7 84.5L85.6 82.5M84.7 84.5L86.8 84.8M84.7 84.5L85.0 86.6M84.7 84.5L82.7 85.5M84.7 84.5L83.1 83.0" stroke="#5e7d2b" stroke-width="0.6" stroke-linecap="round" opacity=".85"/></g></defs></svg><svg style="position:absolute;left:468.50px;top:362.40px;" width="87.00" height="87.00" viewBox="0 0 87 87"><use href="#cardimg"/></svg><svg style="position:absolute;left:468.50px;top:436.00px;" width="60.00" height="13.40" viewBox="0 0 60 13.4"><path d="M0 0H59.6L55.4 13.4H0z" fill="#ffd900"/></svg><span style='position:absolute;left:471px;top:438px;font:700 18.00px/36px "Liberation Sans",sans-serif;color:#1f2832;white-space:pre;transform:translate(0.500px,0.405px) scale(.25);transform-origin:0 0;-webkit-text-stroke:.5px #1f2832;'>{post_title}</span><svg style="position:absolute;left:515.90px;top:439.60px;" width="5.80" height="6.40" viewBox="0 0 5.8 6.4"><path d="M0 0L5.8 3.2 0 6.4z" fill="#fff"/></svg><svg style="position:absolute;left:565.30px;top:362.40px;" width="87.00" height="87.00" viewBox="0 0 87 87"><use href="#cardimg"/></svg><svg style="position:absolute;left:565.30px;top:436.00px;" width="60.00" height="13.40" viewBox="0 0 60 13.4"><path d="M0 0H59.6L55.4 13.4H0z" fill="#ffd900"/></svg><span style='position:absolute;left:568px;top:438px;font:700 18.00px/36px "Liberation Sans",sans-serif;color:#1f2832;white-space:pre;transform:translate(0.300px,0.405px) scale(.25);transform-origin:0 0;-webkit-text-stroke:.5px #1f2832;'>Autodemolizione</span><svg style="position:absolute;left:612.70px;top:439.60px;" width="5.80" height="6.40" viewBox="0 0 5.8 6.4"><path d="M0 0L5.8 3.2 0 6.4z" fill="#fff"/></svg><svg style="position:absolute;left:662.00px;top:362.40px;" width="87.00" height="87.00" viewBox="0 0 87 87"><use href="#cardimg"/></svg><svg style="position:absolute;left:662.00px;top:436.00px;" width="60.00" height="13.40" viewBox="0 0 60 13.4"><path d="M0 0H59.6L55.4 13.4H0z" fill="#ffd900"/></svg><span style='position:absolute;left:665px;top:438px;font:700 18.00px/36px "Liberation Sans",sans-serif;color:#1f2832;white-space:pre;transform:translate(0.000px,0.405px) scale(.25);transform-origin:0 0;-webkit-text-stroke:.5px #1f2832;'>Soccorso stradale</span><svg style="position:absolute;left:709.40px;top:439.60px;" width="5.80" height="6.40" viewBox="0 0 5.8 6.4"><path d="M0 0L5.8 3.2 0 6.4z" fill="#fff"/></svg><svg style="position:absolute;left:758.80px;top:362.40px;" width="87.00" height="87.00" viewBox="0 0 87 87"><use href="#cardimg"/></svg><svg style="position:absolute;left:758.80px;top:436.00px;" width="60.00" height="13.40" viewBox="0 0 60 13.4"><path d="M0 0H59.6L55.4 13.4H0z" fill="#ffd900"/></svg><span style='position:absolute;left:761px;top:438px;font:700 18.00px/36px "Liberation Sans",sans-serif;color:#1f2832;white-space:pre;transform:translate(0.800px,0.405px) scale(.25);transform-origin:0 0;-webkit-text-stroke:.5px #1f2832;'>Trasporto</span><svg style="position:absolute;left:806.20px;top:439.60px;" width="5.80" height="6.40" viewBox="0 0 5.8 6.4"><path d="M0 0L5.8 3.2 0 6.4z" fill="#fff"/></svg><svg style="position:absolute;left:468.50px;top:459.00px;" width="87.00" height="87.00" viewBox="0 0 87 87"><use href="#cardimg"/></svg><svg style="position:absolute;left:468.50px;top:532.60px;" width="60.00" height="13.40" viewBox="0 0 60 13.4"><path d="M0 0H59.6L55.4 13.4H0z" fill="#ffd900"/></svg><span style='position:absolute;left:471px;top:532px;font:700 17.60px/35px "Liberation Sans",sans-serif;color:#1f2832;white-space:pre;transform:translate(0.500px,0.803px) scale(.25);transform-origin:0 0;letter-spacing:0.792px;-webkit-text-stroke:.5px #1f2832;'>Movimentazione</span><span style='position:absolute;left:471px;top:537px;font:700 17.60px/35px "Liberation Sans",sans-serif;color:#1f2832;white-space:pre;transform:translate(0.500px,0.203px) scale(.25);transform-origin:0 0;letter-spacing:0.467px;-webkit-text-stroke:.5px #1f2832;'>macchinari</span><svg style="position:absolute;left:515.90px;top:536.20px;" width="5.80" height="6.40" viewBox="0 0 5.8 6.4"><path d="M0 0L5.8 3.2 0 6.4z" fill="#fff"/></svg><svg style="position:absolute;left:565.30px;top:459.00px;" width="87.00" height="87.00" viewBox="0 0 87 87"><use href="#cardimg"/></svg><svg style="position:absolute;left:565.30px;top:532.60px;" width="60.00" height="13.40" viewBox="0 0 60 13.4"><path d="M0 0H59.6L55.4 13.4H0z" fill="#ffd900"/></svg><span style='position:absolute;left:568px;top:535px;font:700 18.00px/36px "Liberation Sans",sans-serif;color:#1f2832;white-space:pre;transform:translate(0.300px,0.005px) scale(.25);transform-origin:0 0;-webkit-text-stroke:.5px #1f2832;'>Noleggio mezzi</span><svg style="position:absolute;left:612.70px;top:536.20px;" width="5.80" height="6.40" viewBox="0 0 5.8 6.4"><path d="M0 0L5.8 3.2 0 6.4z" fill="#fff"/></svg><svg style="position:absolute;left:662.00px;top:459.00px;" width="87.00" height="87.00" viewBox="0 0 87 87"><use href="#cardimg"/></svg><svg style="position:absolute;left:662.00px;top:532.60px;" width="60.00" height="13.40" viewBox="0 0 60 13.4"><path d="M0 0H59.6L55.4 13.4H0z" fill="#ffd900"/></svg><span style='position:absolute;left:665px;top:535px;font:700 18.00px/36px "Liberation Sans",sans-serif;color:#1f2832;white-space:pre;transform:translate(0.000px,0.005px) scale(.25);transform-origin:0 0;-webkit-text-stroke:.5px #1f2832;'>Elenco mezzi</span><svg style="position:absolute;left:709.40px;top:536.20px;" width="5.80" height="6.40" viewBox="0 0 5.8 6.4"><path d="M0 0L5.8 3.2 0 6.4z" fill="#fff"/></svg><div style="position:absolute;left:758.80px;top:459.00px;width:87.00px;height:87.00px;background:#ffd900;"></div><span style='position:absolute;left:769px;top:482px;font:400 34.80px/70px "Liberation Sans",sans-serif;color:#3b4650;white-space:pre;transform:translate(0.800px,0.189px) scale(.25);transform-origin:0 0;letter-spacing:2.245px;'>Richiedi subito</span><span style='position:absolute;left:772px;top:492px;font:400 34.80px/70px "Liberation Sans",sans-serif;color:#3b4650;white-space:pre;transform:translate(0.800px,0.289px) scale(.25);transform-origin:0 0;letter-spacing:2.081px;'>un preventivo</span><svg style="position:absolute;left:797.80px;top:533.00px;" width="8.60" height="9.40" viewBox="0 0 8.6 9.4"><path d="M0 0L8.6 4.7 0 9.4z" fill="#fff"/></svg>
<div style="position:absolute;left:394.40px;top:556.00px;width:525.80px;height:203.60px;box-sizing:border-box;border:1px solid #8fb2da;"></div><div style="position:absolute;left:394.60px;top:760.00px;width:14.40px;height:4.80px;background:#3d9be6;"></div><svg style="position:absolute;left:460.00px;top:560.00px;" width="200.00" height="195.00" viewBox="0 0 1079 1052"><rect x="45" y="35" width="995" height="985" fill="#f9f9fc"/><path d="M45 35H905L972 100V182H113V440L45 452z" fill="#ececf4"/><path d="M970 700L1040 735V1020H790L840 952H970z" fill="#e9eaf2"/><rect x="197" y="182" width="693" height="693" fill="#fff"/><polygon points="200,300 300,350 430,400 600,470 700,480 800,600 890,720 890,875 620,875 560,790 460,700 400,560 330,430 200,330" fill="#e7e8f3" stroke="#e7e8f3" stroke-width="8" stroke-linejoin="round" /><polygon points="200,190 560,185 640,215 715,222 722,262 700,250 540,240 480,250 440,380 425,405 380,372 300,352 212,302" fill="#a8b2d6" stroke="#a8b2d6" stroke-width="8" stroke-linejoin="round" /><path d="M235 200L230 300M330 195L270 330M410 240L330 355M420 190L420 300" stroke="#c9d0e8" stroke-width="3" fill="none"/><polygon points="480,250 540,240 700,250 694,332 620,330 545,292 500,420 432,412 440,380" fill="#3c5ca2" stroke="#3c5ca2" stroke-width="8" stroke-linejoin="round" /><polygon points="520,292 545,285 600,322 625,345 700,336 722,432 664,502 612,472 604,402 540,424 470,426 500,400" fill="#0f3b8d" stroke="#0f3b8d" stroke-width="8" stroke-linejoin="round" /><path d="M540 290L600 322 622 348M604 402L640 380 700 338" stroke="#8ea6d8" stroke-width="2.5" fill="none"/><polygon points="690,482 760,470 800,470 832,520 782,592 742,572 700,540" fill="#a8b2d6" stroke="#a8b2d6" stroke-width="8" stroke-linejoin="round" /><polygon points="780,592 830,515 880,532 905,556 890,582 800,612" fill="#3c5ca2" stroke="#3c5ca2" stroke-width="8" stroke-linejoin="round" /><polygon points="800,612 890,582 890,700 862,740 830,700" fill="#a8b2d6" stroke="#a8b2d6" stroke-width="8" stroke-linejoin="round" /><polygon points="578,792 632,716 668,740 700,762 762,800 832,760 862,850 740,832 620,850" fill="#a8b2d6" stroke="#a8b2d6" stroke-width="8" stroke-linejoin="round" /><polygon points="620,850 740,830 850,882 802,940 832,972 770,1000 735,965 690,912" fill="#0f3b8d" stroke="#0f3b8d" stroke-width="8" stroke-linejoin="round" /><polygon points="440,100 468,45 492,72 522,80 545,140 562,172 556,212 500,186" fill="#0f3b8d" stroke="#0f3b8d" stroke-width="8" stroke-linejoin="round" /><path d="M113 100H970V952H113z M197 182V875H890V182z" fill="#ffd900" fill-rule="evenodd"/><polygon points="440,100 530,100 545,140 562,172 560,182 494,182 452,150" fill="#3b4a1c" stroke="#3b4a1c" stroke-width="8" stroke-linejoin="round" /><polygon points="138,100 262,96 240,150 200,160 165,140" fill="#3b4a1c" stroke="#3b4a1c" stroke-width="8" stroke-linejoin="round" /><polygon points="113,160 165,140 200,160 240,150 262,120 330,182 197,182 197,260 113,220" fill="#c9a800" stroke="#c9a800" stroke-width="8" stroke-linejoin="round" /><polygon points="400,182 420,150 452,150 494,182" fill="#c9a800" stroke="#c9a800" stroke-width="8" stroke-linejoin="round" /><polygon points="640,875 690,912 735,952 800,952 802,940 850,882 838,875" fill="#3b4a1c" stroke="#3b4a1c" stroke-width="8" stroke-linejoin="round" /><polygon points="890,570 905,556 950,690 890,720" fill="#c9a800" stroke="#c9a800" stroke-width="8" stroke-linejoin="round" /><circle cx="557" cy="345" r="15" fill="#f7d633"/><circle cx="640" cy="378" r="15" fill="#f7d633"/><circle cx="693" cy="355" r="15" fill="#f7d633"/><circle cx="680" cy="428" r="15" fill="#f7d633"/><circle cx="850" cy="545" r="15" fill="#f7d633"/><circle cx="726" cy="905" r="15" fill="#f7d633"/></svg><span style='position:absolute;left:662px;top:594px;font:700 42.40px/85px "Liberation Sans",sans-serif;color:#1e3f74;white-space:pre;transform:translate(0.000px,0.002px) scale(.25);transform-origin:0 0;letter-spacing:-1.401px;-webkit-text-stroke:1.1px #1e3f74;'>Dove siamo</span><span style='position:absolute;left:662px;top:605px;font:700 42.40px/85px "Liberation Sans",sans-serif;color:#1e3f74;white-space:pre;transform:translate(0.000px,0.002px) scale(.25);transform-origin:0 0;letter-spacing:-0.692px;-webkit-text-stroke:1.1px #1e3f74;'>e dove operiamo:</span><div style='position:absolute;left:662px;top:631px;font:400 18.00px/36px "Liberation Sans",sans-serif;color:#506283;white-space:pre;letter-spacing:0.460px;transform:translate(0.000px,0.605px) scale(.25);transform-origin:0 0;'><span style="font-weight:400;color:#506283">Con sedi attive a </span><span style="font-weight:700;color:#1f3864">Bologna, Faenza, Forlì, Ravenna e Fano</span><span style="font-weight:400;color:#506283">, Baldini Group garantisce</span></div><div style='position:absolute;left:662px;top:637px;font:400 18.00px/36px "Liberation Sans",sans-serif;color:#506283;white-space:pre;letter-spacing:0.773px;transform:translate(0.000px,0.605px) scale(.25);transform-origin:0 0;'><span style="font-weight:400;color:#506283">una presenza solida e ramificata in Emilia Romagna e nelle Marche. Le nostre sedi</span></div><div style='position:absolute;left:662px;top:643px;font:400 18.00px/36px "Liberation Sans",sans-serif;color:#506283;white-space:pre;letter-spacing:0.732px;transform:translate(0.000px,0.705px) scale(.25);transform-origin:0 0;'><span style="font-weight:400;color:#506283">operative sono punti strategici per coordinare servizi su tutto il </span><span style="font-weight:700;color:#1f3864">territorio nazionale</span></div><div style='position:absolute;left:662px;top:649px;font:400 18.00px/36px "Liberation Sans",sans-serif;color:#506283;white-space:pre;letter-spacing:0.174px;transform:translate(0.000px,0.805px) scale(.25);transform-origin:0 0;'><span style="font-weight:700;color:#1f3864">e internazionale</span><span style="font-weight:400;color:#506283">.</span></div><div style="position:absolute;left:662.00px;top:662.00px;width:147.00px;height:1.20px;background:#6f7b92;"></div><div style='position:absolute;left:662px;top:666px;font:400 18.00px/36px "Liberation Sans",sans-serif;color:#506283;white-space:pre;letter-spacing:0.460px;transform:translate(0.000px,0.805px) scale(.25);transform-origin:0 0;'><span style="font-weight:400;color:#506283">Con sedi attive a </span><span style="font-weight:700;color:#1f3864">Bologna, Faenza, Forlì, Ravenna e Fano</span><span style="font-weight:400;color:#506283">, Baldini Group garantisce</span></div><div style='position:absolute;left:662px;top:672px;font:400 18.00px/36px "Liberation Sans",sans-serif;color:#506283;white-space:pre;letter-spacing:0.773px;transform:translate(0.000px,0.905px) scale(.25);transform-origin:0 0;'><span style="font-weight:400;color:#506283">una presenza solida e ramificata in Emilia Romagna e nelle Marche. Le nostre sedi</span></div><div style='position:absolute;left:662px;top:679px;font:400 18.00px/36px "Liberation Sans",sans-serif;color:#506283;white-space:pre;letter-spacing:0.732px;transform:translate(0.000px,0.005px) scale(.25);transform-origin:0 0;'><span style="font-weight:400;color:#506283">operative sono punti strategici per coordinare servizi su tutto il </span><span style="font-weight:700;color:#1f3864">territorio nazionale</span></div><div style='position:absolute;left:662px;top:685px;font:400 18.00px/36px "Liberation Sans",sans-serif;color:#506283;white-space:pre;letter-spacing:0.174px;transform:translate(0.000px,0.105px) scale(.25);transform-origin:0 0;'><span style="font-weight:700;color:#1f3864">e internazionale</span><span style="font-weight:400;color:#506283">.</span></div><svg style="position:absolute;left:662.00px;top:702.60px;" width="60.00" height="14.20" viewBox="0 0 60 14.2"><path d="M0 0H59.6L55.4 14.2H0z" fill="#ffd900"/></svg><span style='position:absolute;left:665px;top:703px;font:700 17.60px/35px "Liberation Sans",sans-serif;color:#1f2832;white-space:pre;transform:translate(0.400px,0.203px) scale(.25);transform-origin:0 0;letter-spacing:1.084px;-webkit-text-stroke:.5px #1f2832;'>Scopri come e</span><span style='position:absolute;left:665px;top:707px;font:700 17.60px/35px "Liberation Sans",sans-serif;color:#1f2832;white-space:pre;transform:translate(0.400px,0.403px) scale(.25);transform-origin:0 0;letter-spacing:0.851px;-webkit-text-stroke:.5px #1f2832;'>dove trovarci</span><svg style="position:absolute;left:711.40px;top:706.60px;" width="5.60" height="6.40" viewBox="0 0 5.6 6.4"><path d="M0 0L5.6 3.2 0 6.4z" fill="#fff"/></svg>
<svg style="position:absolute;left:468.70px;top:770.00px;" width="377.20" height="193.00" viewBox="0 0 377.2 193"><defs><radialGradient id="l0" cx=".40" cy=".36" r=".70"><stop offset="0" stop-color="#c65042"/><stop offset=".55" stop-color="#ad1116"/><stop offset="1" stop-color="#880e0e"/></radialGradient><radialGradient id="ld0" cx=".45" cy=".40" r=".75"><stop offset="0" stop-color="#940f11"/><stop offset="1" stop-color="#690b0a"/></radialGradient><radialGradient id="l1" cx=".40" cy=".36" r=".70"><stop offset="0" stop-color="#e35442"/><stop offset=".55" stop-color="#d71716"/><stop offset="1" stop-color="#a3120e"/></radialGradient><radialGradient id="ld1" cx=".45" cy=".40" r=".75"><stop offset="0" stop-color="#b51411"/><stop offset="1" stop-color="#7d0e0a"/></radialGradient><radialGradient id="l2" cx=".40" cy=".36" r=".70"><stop offset="0" stop-color="#ed5e43"/><stop offset=".55" stop-color="#e52517"/><stop offset="1" stop-color="#ac1b0f"/></radialGradient><radialGradient id="ld2" cx=".45" cy=".40" r=".75"><stop offset="0" stop-color="#c01f12"/><stop offset="1" stop-color="#83150b"/></radialGradient><radialGradient id="l3" cx=".40" cy=".36" r=".70"><stop offset="0" stop-color="#f36e43"/><stop offset=".55" stop-color="#ee3d17"/><stop offset="1" stop-color="#b22a0f"/></radialGradient><radialGradient id="ld3" cx=".45" cy=".40" r=".75"><stop offset="0" stop-color="#c73212"/><stop offset="1" stop-color="#88200b"/></radialGradient><radialGradient id="l4" cx=".40" cy=".36" r=".70"><stop offset="0" stop-color="#f78642"/><stop offset=".55" stop-color="#f45f16"/><stop offset="1" stop-color="#b53f0e"/></radialGradient><radialGradient id="ld4" cx=".45" cy=".40" r=".75"><stop offset="0" stop-color="#cb4c11"/><stop offset="1" stop-color="#8a300a"/></radialGradient><radialGradient id="l5" cx=".40" cy=".36" r=".70"><stop offset="0" stop-color="#f99e44"/><stop offset=".55" stop-color="#f68119"/><stop offset="1" stop-color="#b75510"/></radialGradient><radialGradient id="ld5" cx=".45" cy=".40" r=".75"><stop offset="0" stop-color="#cd6713"/><stop offset="1" stop-color="#8b400b"/></radialGradient><radialGradient id="l6" cx=".40" cy=".36" r=".70"><stop offset="0" stop-color="#f7b348"/><stop offset=".55" stop-color="#f49f1e"/><stop offset="1" stop-color="#b56913"/></radialGradient><radialGradient id="ld6" cx=".45" cy=".40" r=".75"><stop offset="0" stop-color="#cc7e18"/><stop offset="1" stop-color="#8a4e0e"/></radialGradient><radialGradient id="l7" cx=".40" cy=".36" r=".70"><stop offset="0" stop-color="#ebbf4d"/><stop offset=".55" stop-color="#e3b026"/><stop offset="1" stop-color="#aa7318"/></radialGradient><radialGradient id="ld7" cx=".45" cy=".40" r=".75"><stop offset="0" stop-color="#be8b1d"/><stop offset="1" stop-color="#825612"/></radialGradient><radialGradient id="l8" cx=".40" cy=".36" r=".70"><stop offset="0" stop-color="#c9b751"/><stop offset=".55" stop-color="#b1a42b"/><stop offset="1" stop-color="#8b6c1b"/></radialGradient><radialGradient id="ld8" cx=".45" cy=".40" r=".75"><stop offset="0" stop-color="#988221"/><stop offset="1" stop-color="#6b5014"/></radialGradient><radialGradient id="l9" cx=".40" cy=".36" r=".70"><stop offset="0" stop-color="#a0a851"/><stop offset=".55" stop-color="#788f2a"/><stop offset="1" stop-color="#665e1b"/></radialGradient><radialGradient id="ld9" cx=".45" cy=".40" r=".75"><stop offset="0" stop-color="#6b7121"/><stop offset="1" stop-color="#504614"/></radialGradient></defs><rect width="377.2" height="193" fill="#efe4df"/><circle cx="238.5" cy="157.7" r="18.3" fill="url(#ld5)"/><circle cx="336.0" cy="175.4" r="19.4" fill="url(#ld8)"/><circle cx="232.8" cy="97.2" r="19.4" fill="url(#ld4)"/><circle cx="167.9" cy="182.1" r="17.8" fill="url(#ld4)"/><circle cx="116.7" cy="95.7" r="14.8" fill="url(#ld1)"/><circle cx="277.6" cy="82.2" r="18.8" fill="url(#ld5)"/><circle cx="209.6" cy="131.5" r="23.0" fill="url(#ld4)"/><circle cx="369.7" cy="54.9" r="11.5" fill="url(#ld4)"/><circle cx="282.8" cy="23.8" r="22.6" fill="url(#ld2)"/><circle cx="102.9" cy="1.2" r="14.0" fill="url(#ld0)"/><circle cx="148.7" cy="35.8" r="14.8" fill="url(#ld1)"/><circle cx="329.2" cy="144.2" r="11.2" fill="url(#ld8)"/><circle cx="56.2" cy="23.1" r="12.4" fill="url(#ld0)"/><circle cx="103.9" cy="39.2" r="11.6" fill="url(#ld0)"/><circle cx="172.7" cy="91.4" r="19.4" fill="url(#ld2)"/><circle cx="296.2" cy="59.4" r="17.9" fill="url(#ld3)"/><circle cx="143.0" cy="150.6" r="17.2" fill="url(#ld2)"/><circle cx="5.6" cy="104.7" r="22.3" fill="url(#ld0)"/><circle cx="335.3" cy="135.5" r="15.0" fill="url(#ld7)"/><circle cx="230.9" cy="6.5" r="17.3" fill="url(#ld1)"/><circle cx="275.2" cy="89.3" r="18.7" fill="url(#ld4)"/><circle cx="98.3" cy="169.2" r="17.5" fill="url(#ld3)"/><circle cx="7.7" cy="76.6" r="17.2" fill="url(#ld0)"/><circle cx="39.8" cy="35.8" r="15.1" fill="url(#ld0)"/><circle cx="107.9" cy="120.3" r="19.0" fill="url(#ld2)"/><circle cx="313.6" cy="83.8" r="23.6" fill="url(#ld5)"/><circle cx="327.8" cy="144.8" r="23.0" fill="url(#ld8)"/><circle cx="320.7" cy="120.6" r="17.6" fill="url(#ld7)"/><circle cx="34.8" cy="52.2" r="13.8" fill="url(#ld0)"/><circle cx="74.9" cy="36.4" r="18.4" fill="url(#ld1)"/><circle cx="349.4" cy="149.0" r="11.7" fill="url(#ld8)"/><circle cx="256.4" cy="1.3" r="23.9" fill="url(#ld2)"/><circle cx="345.7" cy="157.1" r="16.3" fill="url(#ld8)"/><circle cx="7.9" cy="150.7" r="11.3" fill="url(#ld0)"/><circle cx="42.5" cy="70.7" r="13.8" fill="url(#ld0)"/><circle cx="327.1" cy="186.8" r="20.6" fill="url(#ld9)"/><circle cx="6.2" cy="1.2" r="21.8" fill="url(#ld0)"/><circle cx="123.3" cy="24.7" r="19.0" fill="url(#ld0)"/><ellipse cx="18.9" cy="-5.0" rx="22.7" ry="19.5" fill="#3a0a00" opacity=".28"/><ellipse cx="16.8" cy="-8.0" rx="22.3" ry="19.1" fill="url(#l0)"/><ellipse cx="8.5" cy="-17.1" rx="5.6" ry="2.4" fill="#fff" opacity=".30" transform="rotate(-35 8.5 -17.1)"/><ellipse cx="97.7" cy="-3.3" rx="15.2" ry="12.7" fill="#3a0a00" opacity=".28"/><ellipse cx="96.3" cy="-5.2" rx="14.9" ry="12.5" fill="url(#l0)"/><ellipse cx="91.1" cy="-11.1" rx="3.6" ry="1.5" fill="#fff" opacity=".30" transform="rotate(-35 91.1 -11.1)"/><ellipse cx="43.1" cy="19.9" rx="10.8" ry="10.2" fill="#3a0a00" opacity=".28"/><ellipse cx="42.0" cy="18.4" rx="10.6" ry="10.0" fill="url(#l0)"/><ellipse cx="10.3" cy="37.8" rx="30.0" ry="26.5" fill="#3a0a00" opacity=".28"/><ellipse cx="7.5" cy="34.0" rx="29.4" ry="26.0" fill="url(#l0)"/><ellipse cx="-2.9" cy="22.4" rx="7.2" ry="3.0" fill="#fff" opacity=".30" transform="rotate(-35 -2.9 22.4)"/><path d="M5.8 37.0L0.4 30.8M5.8 37.0L10.0 29.9M5.8 37.0L13.8 38.9M5.8 37.0L6.5 45.2M5.8 37.0L-1.8 40.2" stroke="#839436" stroke-width="2.2" stroke-linecap="round" opacity=".85"/><ellipse cx="73.4" cy="21.1" rx="23.0" ry="22.2" fill="#3a0a00" opacity=".28"/><ellipse cx="71.1" cy="17.8" rx="22.6" ry="21.7" fill="url(#l0)"/><ellipse cx="62.3" cy="8.1" rx="6.0" ry="2.6" fill="#fff" opacity=".30" transform="rotate(-35 62.3 8.1)"/><path d="M73.0 14.5L79.4 17.5M73.0 14.5L72.2 21.5M73.0 14.5L66.2 15.9M73.0 14.5L69.6 8.5M73.0 14.5L77.8 9.4" stroke="#758b32" stroke-width="1.9" stroke-linecap="round" opacity=".85"/><ellipse cx="171.8" cy="-0.7" rx="9.5" ry="8.6" fill="#3a0a00" opacity=".28"/><ellipse cx="170.9" cy="-2.0" rx="9.3" ry="8.4" fill="url(#l1)"/><ellipse cx="41.7" cy="39.8" rx="10.6" ry="10.7" fill="#3a0a00" opacity=".28"/><ellipse cx="40.7" cy="38.3" rx="10.4" ry="10.4" fill="url(#l0)"/><ellipse cx="131.7" cy="18.2" rx="28.6" ry="26.7" fill="#3a0a00" opacity=".28"/><ellipse cx="128.8" cy="14.2" rx="28.1" ry="26.2" fill="url(#l0)"/><ellipse cx="117.7" cy="2.0" rx="7.6" ry="3.2" fill="#fff" opacity=".30" transform="rotate(-35 117.7 2.0)"/><path d="M130.3 15.9L138.7 18.3M130.3 15.9L130.6 24.6M130.3 15.9L122.1 19.0M130.3 15.9L124.9 9.1M130.3 15.9L135.1 8.7" stroke="#5d7c2a" stroke-width="2.3" stroke-linecap="round" opacity=".85"/><ellipse cx="210.5" cy="-1.6" rx="28.9" ry="25.7" fill="#3a0a00" opacity=".28"/><ellipse cx="207.7" cy="-5.6" rx="28.3" ry="25.2" fill="url(#l1)"/><ellipse cx="196.9" cy="-17.4" rx="7.3" ry="3.1" fill="#fff" opacity=".30" transform="rotate(-35 196.9 -17.4)"/><path d="M209.9 -4.3L205.8 3.1M209.9 -4.3L201.6 -5.9M209.9 -4.3L208.9 -12.7M209.9 -4.3L217.6 -7.9M209.9 -4.3L215.7 1.9" stroke="#96a03c" stroke-width="2.3" stroke-linecap="round" opacity=".85"/><ellipse cx="98.1" cy="35.3" rx="12.0" ry="10.7" fill="#3a0a00" opacity=".28"/><ellipse cx="96.9" cy="33.7" rx="11.7" ry="10.4" fill="url(#l0)"/><ellipse cx="52.3" cy="53.9" rx="10.0" ry="8.4" fill="#3a0a00" opacity=".28"/><ellipse cx="51.4" cy="52.6" rx="9.8" ry="8.2" fill="url(#l0)"/><ellipse cx="182.1" cy="15.7" rx="11.4" ry="9.6" fill="#3a0a00" opacity=".28"/><ellipse cx="181.0" cy="14.2" rx="11.1" ry="9.5" fill="url(#l2)"/><ellipse cx="-4.7" cy="74.8" rx="19.1" ry="15.7" fill="#3a0a00" opacity=".28"/><ellipse cx="-6.4" cy="72.3" rx="18.7" ry="15.4" fill="url(#l0)"/><ellipse cx="-13.2" cy="64.9" rx="4.6" ry="1.9" fill="#fff" opacity=".30" transform="rotate(-35 -13.2 64.9)"/><ellipse cx="75.3" cy="50.2" rx="11.4" ry="10.6" fill="#3a0a00" opacity=".28"/><ellipse cx="74.2" cy="48.5" rx="11.2" ry="10.4" fill="url(#l1)"/><ellipse cx="163.4" cy="24.0" rx="12.0" ry="11.9" fill="#3a0a00" opacity=".28"/><ellipse cx="162.2" cy="22.4" rx="11.7" ry="11.6" fill="url(#l1)"/><ellipse cx="157.7" cy="17.5" rx="3.0" ry="1.3" fill="#fff" opacity=".30" transform="rotate(-35 157.7 17.5)"/><ellipse cx="257.0" cy="6.8" rx="16.3" ry="13.1" fill="#3a0a00" opacity=".28"/><ellipse cx="255.5" cy="4.7" rx="16.0" ry="12.8" fill="url(#l1)"/><ellipse cx="249.9" cy="-1.5" rx="3.8" ry="1.6" fill="#fff" opacity=".30" transform="rotate(-35 249.9 -1.5)"/><ellipse cx="30.2" cy="76.2" rx="17.0" ry="15.2" fill="#3a0a00" opacity=".28"/><ellipse cx="28.5" cy="73.9" rx="16.7" ry="14.9" fill="url(#l0)"/><ellipse cx="22.3" cy="67.0" rx="4.3" ry="1.8" fill="#fff" opacity=".30" transform="rotate(-35 22.3 67.0)"/><path d="M30.5 72.6L33.0 76.8M30.5 72.6L27.2 76.2M30.5 72.6L26.0 70.6M30.5 72.6L31.0 67.7M30.5 72.6L35.3 71.5" stroke="#8e9b39" stroke-width="1.3" stroke-linecap="round" opacity=".85"/><ellipse cx="323.6" cy="-4.6" rx="26.0" ry="21.8" fill="#3a0a00" opacity=".28"/><ellipse cx="321.1" cy="-8.1" rx="25.5" ry="21.4" fill="url(#l1)"/><ellipse cx="311.7" cy="-18.5" rx="6.5" ry="2.7" fill="#fff" opacity=".30" transform="rotate(-35 311.7 -18.5)"/><path d="M324.5 -6.4L331.9 -5.5M324.5 -6.4L326.0 0.9M324.5 -6.4L318.0 -2.7M324.5 -6.4L319.0 -11.4M324.5 -6.4L327.5 -13.2" stroke="#728931" stroke-width="2.0" stroke-linecap="round" opacity=".85"/><ellipse cx="207.0" cy="33.1" rx="10.7" ry="9.3" fill="#3a0a00" opacity=".28"/><ellipse cx="206.0" cy="31.7" rx="10.5" ry="9.1" fill="url(#l2)"/><ellipse cx="150.9" cy="56.1" rx="10.2" ry="9.3" fill="#3a0a00" opacity=".28"/><ellipse cx="149.8" cy="54.6" rx="10.0" ry="9.1" fill="url(#l1)"/><ellipse cx="183.1" cy="49.5" rx="23.1" ry="21.3" fill="#3a0a00" opacity=".28"/><ellipse cx="180.9" cy="46.4" rx="22.6" ry="20.9" fill="url(#l2)"/><ellipse cx="172.7" cy="37.4" rx="5.6" ry="2.4" fill="#fff" opacity=".30" transform="rotate(-35 172.7 37.4)"/><path d="M178.0 44.4L171.5 44.3M178.0 44.4L176.1 38.2M178.0 44.4L183.3 40.7M178.0 44.4L183.2 48.3M178.0 44.4L175.9 50.5" stroke="#8a9938" stroke-width="1.7" stroke-linecap="round" opacity=".85"/><ellipse cx="126.5" cy="70.4" rx="22.8" ry="23.3" fill="#3a0a00" opacity=".28"/><ellipse cx="124.2" cy="67.1" rx="22.4" ry="22.8" fill="url(#l1)"/><ellipse cx="115.4" cy="57.4" rx="6.0" ry="2.6" fill="#fff" opacity=".30" transform="rotate(-35 115.4 57.4)"/><path d="M124.7 68.6L124.0 61.7M124.7 68.6L131.1 65.8M124.7 68.6L129.3 73.8M124.7 68.6L121.2 74.6M124.7 68.6L117.9 67.1" stroke="#96a03c" stroke-width="1.9" stroke-linecap="round" opacity=".85"/><ellipse cx="373.5" cy="-2.4" rx="25.4" ry="23.6" fill="#3a0a00" opacity=".28"/><ellipse cx="371.1" cy="-5.8" rx="24.9" ry="23.1" fill="url(#l2)"/><ellipse cx="362.1" cy="-15.8" rx="6.2" ry="2.6" fill="#fff" opacity=".30" transform="rotate(-35 362.1 -15.8)"/><path d="M373.6 -5.1L371.3 1.7M373.6 -5.1L366.5 -5.2M373.6 -5.1L371.6 -11.9M373.6 -5.1L379.5 -9.2M373.6 -5.1L379.3 -0.8" stroke="#788d33" stroke-width="1.9" stroke-linecap="round" opacity=".85"/><ellipse cx="69.4" cy="89.7" rx="27.2" ry="27.2" fill="#3a0a00" opacity=".28"/><ellipse cx="66.6" cy="85.8" rx="26.7" ry="26.6" fill="url(#l1)"/><ellipse cx="55.9" cy="74.0" rx="7.3" ry="3.1" fill="#fff" opacity=".30" transform="rotate(-35 55.9 74.0)"/><path d="M67.0 82.8L61.0 76.8M67.0 82.8L70.8 75.2M67.0 82.8L75.4 84.0M67.0 82.8L68.4 91.1M67.0 82.8L59.5 86.7" stroke="#6a842e" stroke-width="2.3" stroke-linecap="round" opacity=".85"/><ellipse cx="-1.1" cy="110.3" rx="23.1" ry="22.0" fill="#3a0a00" opacity=".28"/><ellipse cx="-3.4" cy="107.1" rx="22.7" ry="21.5" fill="url(#l0)"/><ellipse cx="-12.0" cy="97.5" rx="5.9" ry="2.5" fill="#fff" opacity=".30" transform="rotate(-35 -12.0 97.5)"/><ellipse cx="287.3" cy="23.5" rx="19.3" ry="18.6" fill="#3a0a00" opacity=".28"/><ellipse cx="285.3" cy="20.7" rx="18.9" ry="18.2" fill="url(#l2)"/><ellipse cx="277.8" cy="12.4" rx="5.1" ry="2.2" fill="#fff" opacity=".30" transform="rotate(-35 277.8 12.4)"/><path d="M282.9 21.3L278.6 17.2M282.9 21.3L285.5 16.0M282.9 21.3L288.7 22.1M282.9 21.3L283.9 27.2M282.9 21.3L277.6 24.1" stroke="#8b9939" stroke-width="1.6" stroke-linecap="round" opacity=".85"/><ellipse cx="246.6" cy="43.5" rx="25.9" ry="26.0" fill="#3a0a00" opacity=".28"/><ellipse cx="244.0" cy="39.8" rx="25.4" ry="25.5" fill="url(#l2)"/><ellipse cx="234.1" cy="28.9" rx="6.8" ry="2.9" fill="#fff" opacity=".30" transform="rotate(-35 234.1 28.9)"/><path d="M243.0 37.5L246.0 30.3M243.0 37.5L250.7 38.2M243.0 37.5L244.7 45.1M243.0 37.5L236.2 41.5M243.0 37.5L237.1 32.3" stroke="#7e9135" stroke-width="2.1" stroke-linecap="round" opacity=".85"/><ellipse cx="349.8" cy="18.2" rx="14.4" ry="12.4" fill="#3a0a00" opacity=".28"/><ellipse cx="348.5" cy="16.3" rx="14.1" ry="12.1" fill="url(#l3)"/><ellipse cx="343.4" cy="10.7" rx="3.4" ry="1.5" fill="#fff" opacity=".30" transform="rotate(-35 343.4 10.7)"/><ellipse cx="33.2" cy="114.7" rx="12.4" ry="12.3" fill="#3a0a00" opacity=".28"/><ellipse cx="32.0" cy="113.0" rx="12.2" ry="12.0" fill="url(#l0)"/><ellipse cx="27.2" cy="107.7" rx="3.3" ry="1.4" fill="#fff" opacity=".30" transform="rotate(-35 27.2 107.7)"/><ellipse cx="155.4" cy="78.0" rx="10.2" ry="9.5" fill="#3a0a00" opacity=".28"/><ellipse cx="154.3" cy="76.6" rx="10.0" ry="9.3" fill="url(#l1)"/><ellipse cx="212.5" cy="62.5" rx="15.2" ry="15.9" fill="#3a0a00" opacity=".28"/><ellipse cx="210.9" cy="60.4" rx="14.9" ry="15.6" fill="url(#l3)"/><ellipse cx="205.0" cy="53.8" rx="4.1" ry="1.7" fill="#fff" opacity=".30" transform="rotate(-35 205.0 53.8)"/><ellipse cx="107.1" cy="107.0" rx="21.6" ry="20.3" fill="#3a0a00" opacity=".28"/><ellipse cx="104.9" cy="104.0" rx="21.2" ry="19.9" fill="url(#l1)"/><ellipse cx="96.7" cy="94.9" rx="5.6" ry="2.4" fill="#fff" opacity=".30" transform="rotate(-35 96.7 94.9)"/><path d="M102.1 102.2L101.1 95.8M102.1 102.2L107.9 99.3M102.1 102.2L106.7 106.8M102.1 102.2L99.1 108.0M102.1 102.2L95.7 101.2" stroke="#8f9c3a" stroke-width="1.7" stroke-linecap="round" opacity=".85"/><ellipse cx="18.9" cy="136.3" rx="17.7" ry="14.9" fill="#3a0a00" opacity=".28"/><ellipse cx="17.3" cy="134.0" rx="17.4" ry="14.6" fill="url(#l0)"/><ellipse cx="11.0" cy="127.1" rx="4.3" ry="1.8" fill="#fff" opacity=".30" transform="rotate(-35 11.0 127.1)"/><path d="M17.8 133.8L22.3 135.9M17.8 133.8L17.3 138.7M17.8 133.8L13.0 134.8M17.8 133.8L15.4 129.6M17.8 133.8L21.1 130.2" stroke="#6b852f" stroke-width="1.3" stroke-linecap="round" opacity=".85"/><ellipse cx="50.3" cy="126.4" rx="12.6" ry="10.7" fill="#3a0a00" opacity=".28"/><ellipse cx="49.1" cy="124.7" rx="12.4" ry="10.5" fill="url(#l0)"/><ellipse cx="44.5" cy="119.6" rx="3.1" ry="1.3" fill="#fff" opacity=".30" transform="rotate(-35 44.5 119.6)"/><ellipse cx="332.0" cy="43.6" rx="22.0" ry="21.0" fill="#3a0a00" opacity=".28"/><ellipse cx="329.9" cy="40.6" rx="21.5" ry="20.5" fill="url(#l4)"/><ellipse cx="321.7" cy="31.6" rx="5.6" ry="2.4" fill="#fff" opacity=".30" transform="rotate(-35 321.7 31.6)"/><ellipse cx="189.4" cy="89.3" rx="24.7" ry="22.8" fill="#3a0a00" opacity=".28"/><ellipse cx="186.9" cy="85.8" rx="24.2" ry="22.4" fill="url(#l2)"/><ellipse cx="177.3" cy="75.3" rx="6.5" ry="2.8" fill="#fff" opacity=".30" transform="rotate(-35 177.3 75.3)"/><ellipse cx="379.6" cy="30.2" rx="9.1" ry="9.1" fill="#3a0a00" opacity=".28"/><ellipse cx="378.6" cy="28.9" rx="9.0" ry="8.9" fill="url(#l3)"/><ellipse cx="269.5" cy="64.0" rx="13.0" ry="11.2" fill="#3a0a00" opacity=".28"/><ellipse cx="268.3" cy="62.2" rx="12.8" ry="11.0" fill="url(#l3)"/><ellipse cx="263.7" cy="57.1" rx="3.2" ry="1.4" fill="#fff" opacity=".30" transform="rotate(-35 263.7 57.1)"/><ellipse cx="74.5" cy="125.3" rx="16.0" ry="14.5" fill="#3a0a00" opacity=".28"/><ellipse cx="73.0" cy="123.2" rx="15.7" ry="14.3" fill="url(#l1)"/><ellipse cx="67.1" cy="116.7" rx="4.0" ry="1.7" fill="#fff" opacity=".30" transform="rotate(-35 67.1 116.7)"/><ellipse cx="235.3" cy="81.4" rx="18.0" ry="16.3" fill="#3a0a00" opacity=".28"/><ellipse cx="233.5" cy="78.8" rx="17.6" ry="15.9" fill="url(#l4)"/><ellipse cx="226.4" cy="71.1" rx="4.8" ry="2.0" fill="#fff" opacity=".30" transform="rotate(-35 226.4 71.1)"/><ellipse cx="143.2" cy="112.6" rx="20.0" ry="20.3" fill="#3a0a00" opacity=".28"/><ellipse cx="141.2" cy="109.7" rx="19.6" ry="19.9" fill="url(#l2)"/><ellipse cx="133.4" cy="101.1" rx="5.3" ry="2.3" fill="#fff" opacity=".30" transform="rotate(-35 133.4 101.1)"/><path d="M138.9 110.7L135.3 115.7M138.9 110.7L133.0 108.9M138.9 110.7L138.8 104.6M138.9 110.7L144.7 108.8M138.9 110.7L142.5 115.6" stroke="#8b9938" stroke-width="1.6" stroke-linecap="round" opacity=".85"/><ellipse cx="306.5" cy="75.8" rx="27.9" ry="24.0" fill="#3a0a00" opacity=".28"/><ellipse cx="303.9" cy="72.1" rx="27.4" ry="23.5" fill="url(#l5)"/><ellipse cx="293.9" cy="61.0" rx="6.8" ry="2.9" fill="#fff" opacity=".30" transform="rotate(-35 293.9 61.0)"/><ellipse cx="214.9" cy="104.9" rx="12.2" ry="10.6" fill="#3a0a00" opacity=".28"/><ellipse cx="213.7" cy="103.3" rx="12.0" ry="10.4" fill="url(#l4)"/><ellipse cx="209.2" cy="98.4" rx="3.1" ry="1.3" fill="#fff" opacity=".30" transform="rotate(-35 209.2 98.4)"/><ellipse cx="171.0" cy="121.6" rx="15.1" ry="13.2" fill="#3a0a00" opacity=".28"/><ellipse cx="169.6" cy="119.6" rx="14.8" ry="12.9" fill="url(#l4)"/><ellipse cx="164.1" cy="113.5" rx="3.7" ry="1.6" fill="#fff" opacity=".30" transform="rotate(-35 164.1 113.5)"/><ellipse cx="271.5" cy="92.2" rx="17.0" ry="17.4" fill="#3a0a00" opacity=".28"/><ellipse cx="269.8" cy="89.7" rx="16.7" ry="17.0" fill="url(#l5)"/><ellipse cx="263.1" cy="82.3" rx="4.6" ry="1.9" fill="#fff" opacity=".30" transform="rotate(-35 263.1 82.3)"/><path d="M271.7 87.8L267.3 84.9M271.7 87.8L273.0 82.7M271.7 87.8L276.9 87.5M271.7 87.8L273.6 92.7M271.7 87.8L267.6 91.1" stroke="#758c32" stroke-width="1.4" stroke-linecap="round" opacity=".85"/><ellipse cx="373.5" cy="64.1" rx="29.2" ry="26.2" fill="#3a0a00" opacity=".28"/><ellipse cx="370.7" cy="60.3" rx="28.6" ry="25.7" fill="url(#l5)"/><ellipse cx="360.4" cy="48.8" rx="7.1" ry="3.0" fill="#fff" opacity=".30" transform="rotate(-35 360.4 48.8)"/><path d="M374.2 57.2L381.1 61.6M374.2 57.2L372.1 65.1M374.2 57.2L366.0 57.7M374.2 57.2L371.2 49.6M374.2 57.2L380.5 52.0" stroke="#778c32" stroke-width="2.2" stroke-linecap="round" opacity=".85"/><ellipse cx="44.1" cy="164.2" rx="28.2" ry="24.3" fill="#3a0a00" opacity=".28"/><ellipse cx="41.5" cy="160.6" rx="27.6" ry="23.8" fill="url(#l0)"/><ellipse cx="31.7" cy="149.8" rx="6.7" ry="2.8" fill="#fff" opacity=".30" transform="rotate(-35 31.7 149.8)"/><ellipse cx="72.0" cy="154.5" rx="10.4" ry="9.6" fill="#3a0a00" opacity=".28"/><ellipse cx="71.0" cy="153.1" rx="10.2" ry="9.5" fill="url(#l1)"/><ellipse cx="104.5" cy="148.0" rx="26.8" ry="24.9" fill="#3a0a00" opacity=".28"/><ellipse cx="102.0" cy="144.5" rx="26.2" ry="24.4" fill="url(#l1)"/><ellipse cx="92.3" cy="133.8" rx="6.6" ry="2.8" fill="#fff" opacity=".30" transform="rotate(-35 92.3 133.8)"/><path d="M104.0 143.8L109.9 138.9M104.0 143.8L110.4 147.9M104.0 143.8L102.1 151.2M104.0 143.8L96.4 144.3M104.0 143.8L101.2 136.7" stroke="#738a31" stroke-width="2.0" stroke-linecap="round" opacity=".85"/><ellipse cx="205.3" cy="130.2" rx="19.2" ry="17.8" fill="#3a0a00" opacity=".28"/><ellipse cx="203.4" cy="127.5" rx="18.8" ry="17.5" fill="url(#l4)"/><ellipse cx="196.0" cy="119.4" rx="5.0" ry="2.1" fill="#fff" opacity=".30" transform="rotate(-35 196.0 119.4)"/><path d="M205.9 124.6L201.8 128.8M205.9 124.6L200.7 122.0M205.9 124.6L206.7 118.9M205.9 124.6L211.6 123.7M205.9 124.6L208.6 129.8" stroke="#66822d" stroke-width="1.5" stroke-linecap="round" opacity=".85"/><ellipse cx="4.5" cy="191.4" rx="23.0" ry="23.5" fill="#3a0a00" opacity=".28"/><ellipse cx="2.2" cy="188.1" rx="22.5" ry="23.0" fill="url(#l0)"/><ellipse cx="-6.7" cy="178.3" rx="6.1" ry="2.6" fill="#fff" opacity=".30" transform="rotate(-35 -6.7 178.3)"/><ellipse cx="79.3" cy="174.6" rx="9.8" ry="9.4" fill="#3a0a00" opacity=".28"/><ellipse cx="78.3" cy="173.2" rx="9.6" ry="9.2" fill="url(#l2)"/><ellipse cx="251.4" cy="126.6" rx="27.9" ry="25.0" fill="#3a0a00" opacity=".28"/><ellipse cx="248.6" cy="122.6" rx="27.4" ry="24.5" fill="url(#l5)"/><ellipse cx="237.9" cy="110.8" rx="7.3" ry="3.1" fill="#fff" opacity=".30" transform="rotate(-35 237.9 110.8)"/><ellipse cx="161.1" cy="154.5" rx="24.3" ry="22.3" fill="#3a0a00" opacity=".28"/><ellipse cx="158.7" cy="151.2" rx="23.9" ry="21.9" fill="url(#l3)"/><ellipse cx="149.7" cy="141.2" rx="6.2" ry="2.6" fill="#fff" opacity=".30" transform="rotate(-35 149.7 141.2)"/><path d="M158.5 154.7L151.8 157.3M158.5 154.7L153.9 149.2M158.5 154.7L162.3 148.7M158.5 154.7L165.3 156.5M158.5 154.7L158.9 161.8" stroke="#8c9a39" stroke-width="1.9" stroke-linecap="round" opacity=".85"/><ellipse cx="303.0" cy="117.4" rx="21.4" ry="21.3" fill="#3a0a00" opacity=".28"/><ellipse cx="300.8" cy="114.4" rx="21.0" ry="20.9" fill="url(#l6)"/><ellipse cx="292.5" cy="105.2" rx="5.7" ry="2.4" fill="#fff" opacity=".30" transform="rotate(-35 292.5 105.2)"/><ellipse cx="351.6" cy="107.3" rx="30.3" ry="28.1" fill="#3a0a00" opacity=".28"/><ellipse cx="348.7" cy="103.2" rx="29.7" ry="27.5" fill="url(#l6)"/><ellipse cx="337.4" cy="90.8" rx="7.7" ry="3.3" fill="#fff" opacity=".30" transform="rotate(-35 337.4 90.8)"/><path d="M347.4 106.4L355.7 103.2M347.4 106.4L353.1 113.3M347.4 106.4L342.6 113.9M347.4 106.4L338.8 104.2M347.4 106.4L346.9 97.6" stroke="#67832d" stroke-width="2.4" stroke-linecap="round" opacity=".85"/><ellipse cx="201.8" cy="155.7" rx="8.8" ry="8.0" fill="#3a0a00" opacity=".28"/><ellipse cx="200.9" cy="154.4" rx="8.6" ry="7.9" fill="url(#l5)"/><ellipse cx="50.6" cy="205.7" rx="23.3" ry="21.7" fill="#3a0a00" opacity=".28"/><ellipse cx="48.2" cy="202.3" rx="22.9" ry="21.2" fill="url(#l1)"/><ellipse cx="39.0" cy="192.1" rx="6.3" ry="2.7" fill="#fff" opacity=".30" transform="rotate(-35 39.0 192.1)"/><path d="M46.3 204.7L45.2 197.5M46.3 204.7L52.8 201.4M46.3 204.7L51.4 209.9M46.3 204.7L43.0 211.2M46.3 204.7L39.1 203.5" stroke="#728a31" stroke-width="1.9" stroke-linecap="round" opacity=".85"/><ellipse cx="131.2" cy="182.6" rx="17.6" ry="16.0" fill="#3a0a00" opacity=".28"/><ellipse cx="129.4" cy="180.0" rx="17.2" ry="15.7" fill="url(#l3)"/><ellipse cx="122.5" cy="172.4" rx="4.7" ry="2.0" fill="#fff" opacity=".30" transform="rotate(-35 122.5 172.4)"/><path d="M131.3 182.2L126.8 179.2M131.3 182.2L132.8 177.0M131.3 182.2L136.7 182.1M131.3 182.2L133.1 187.3M131.3 182.2L127.0 185.5" stroke="#929d3b" stroke-width="1.4" stroke-linecap="round" opacity=".85"/><ellipse cx="225.1" cy="158.9" rx="16.9" ry="17.0" fill="#3a0a00" opacity=".28"/><ellipse cx="223.4" cy="156.4" rx="16.6" ry="16.7" fill="url(#l5)"/><ellipse cx="216.7" cy="149.0" rx="4.6" ry="1.9" fill="#fff" opacity=".30" transform="rotate(-35 216.7 149.0)"/><ellipse cx="327.4" cy="131.2" rx="9.5" ry="8.2" fill="#3a0a00" opacity=".28"/><ellipse cx="326.5" cy="129.9" rx="9.4" ry="8.1" fill="url(#l7)"/><ellipse cx="95.3" cy="205.1" rx="29.2" ry="26.8" fill="#3a0a00" opacity=".28"/><ellipse cx="92.6" cy="201.3" rx="28.6" ry="26.3" fill="url(#l2)"/><ellipse cx="82.3" cy="190.0" rx="7.0" ry="3.0" fill="#fff" opacity=".30" transform="rotate(-35 82.3 190.0)"/><path d="M96.4 201.3L96.0 193.2M96.4 201.3L104.0 198.4M96.4 201.3L101.5 207.6M96.4 201.3L92.0 208.1M96.4 201.3L88.6 199.2" stroke="#567828" stroke-width="2.2" stroke-linecap="round" opacity=".85"/><ellipse cx="381.8" cy="126.8" rx="10.6" ry="9.5" fill="#3a0a00" opacity=".28"/><ellipse cx="380.8" cy="125.4" rx="10.4" ry="9.3" fill="url(#l8)"/><ellipse cx="199.8" cy="185.3" rx="22.8" ry="21.9" fill="#3a0a00" opacity=".28"/><ellipse cx="197.5" cy="182.0" rx="22.3" ry="21.5" fill="url(#l6)"/><ellipse cx="188.6" cy="172.2" rx="6.1" ry="2.6" fill="#fff" opacity=".30" transform="rotate(-35 188.6 172.2)"/><ellipse cx="277.1" cy="168.4" rx="28.0" ry="26.6" fill="#3a0a00" opacity=".28"/><ellipse cx="274.4" cy="164.6" rx="27.5" ry="26.1" fill="url(#l7)"/><ellipse cx="264.0" cy="153.1" rx="7.1" ry="3.0" fill="#fff" opacity=".30" transform="rotate(-35 264.0 153.1)"/><path d="M273.1 161.4L273.3 169.6M273.1 161.4L265.4 164.2M273.1 161.4L268.1 154.9M273.1 161.4L277.7 154.6M273.1 161.4L281.0 163.7" stroke="#617f2b" stroke-width="2.2" stroke-linecap="round" opacity=".85"/><ellipse cx="163.2" cy="203.3" rx="22.2" ry="22.3" fill="#3a0a00" opacity=".28"/><ellipse cx="161.0" cy="200.2" rx="21.8" ry="21.8" fill="url(#l4)"/><ellipse cx="152.4" cy="190.7" rx="5.9" ry="2.5" fill="#fff" opacity=".30" transform="rotate(-35 152.4 190.7)"/><path d="M158.1 198.3L161.8 203.9M158.1 198.3L153.8 203.6M158.1 198.3L151.7 195.9M158.1 198.3L158.4 191.5M158.1 198.3L164.6 196.5" stroke="#788d33" stroke-width="1.8" stroke-linecap="round" opacity=".85"/><ellipse cx="321.3" cy="163.5" rx="26.6" ry="25.0" fill="#3a0a00" opacity=".28"/><ellipse cx="318.8" cy="160.1" rx="26.0" ry="24.5" fill="url(#l8)"/><ellipse cx="309.3" cy="149.6" rx="6.5" ry="2.7" fill="#fff" opacity=".30" transform="rotate(-35 309.3 149.6)"/><path d="M315.8 156.5L310.6 151.1M315.8 156.5L319.3 149.9M315.8 156.5L323.1 157.9M315.8 156.5L316.8 163.9M315.8 156.5L309.0 159.8" stroke="#577828" stroke-width="2.0" stroke-linecap="round" opacity=".85"/><ellipse cx="240.2" cy="192.8" rx="25.2" ry="21.4" fill="#3a0a00" opacity=".28"/><ellipse cx="237.8" cy="189.5" rx="24.7" ry="21.0" fill="url(#l7)"/><ellipse cx="228.9" cy="179.6" rx="6.1" ry="2.6" fill="#fff" opacity=".30" transform="rotate(-35 228.9 179.6)"/><path d="M234.9 191.4L228.4 194.0M234.9 191.4L230.5 186.0M234.9 191.4L238.8 185.5M234.9 191.4L241.8 193.2M234.9 191.4L235.4 198.5" stroke="#889738" stroke-width="1.9" stroke-linecap="round" opacity=".85"/><ellipse cx="371.3" cy="165.0" rx="27.3" ry="27.8" fill="#3a0a00" opacity=".28"/><ellipse cx="368.5" cy="161.2" rx="26.8" ry="27.2" fill="url(#l9)"/><ellipse cx="358.1" cy="149.7" rx="7.1" ry="3.0" fill="#fff" opacity=".30" transform="rotate(-35 358.1 149.7)"/><path d="M364.6 163.5L359.2 169.6M364.6 163.5L357.1 160.2M364.6 163.5L365.4 155.3M364.6 163.5L372.6 161.7M364.6 163.5L368.8 170.6" stroke="#62802c" stroke-width="2.2" stroke-linecap="round" opacity=".85"/><ellipse cx="339.8" cy="191.2" rx="9.4" ry="9.3" fill="#3a0a00" opacity=".28"/><ellipse cx="338.8" cy="189.9" rx="9.2" ry="9.2" fill="url(#l9)"/><ellipse cx="307.0" cy="206.2" rx="28.0" ry="26.9" fill="#3a0a00" opacity=".28"/><ellipse cx="304.4" cy="202.4" rx="27.4" ry="26.3" fill="url(#l9)"/><ellipse cx="294.2" cy="191.2" rx="6.9" ry="2.9" fill="#fff" opacity=".30" transform="rotate(-35 294.2 191.2)"/><path d="M303.8 203.6L311.4 206.1M303.8 203.6L303.8 211.6M303.8 203.6L296.2 206.2M303.8 203.6L299.1 197.2M303.8 203.6L308.5 197.1" stroke="#909c3a" stroke-width="2.1" stroke-linecap="round" opacity=".85"/><ellipse cx="360.8" cy="201.6" rx="17.8" ry="15.9" fill="#3a0a00" opacity=".28"/><ellipse cx="359.1" cy="199.3" rx="17.4" ry="15.6" fill="url(#l9)"/><ellipse cx="352.9" cy="192.3" rx="4.3" ry="1.8" fill="#fff" opacity=".30" transform="rotate(-35 352.9 192.3)"/><path d="M357.6 197.6L357.3 192.6M357.6 197.6L362.2 195.8M357.6 197.6L360.7 201.4M357.6 197.6L354.9 201.7M357.6 197.6L352.8 196.3" stroke="#8b9939" stroke-width="1.3" stroke-linecap="round" opacity=".85"/></svg><div style="position:absolute;left:478.90px;top:780.00px;width:173.70px;height:173.00px;background:#1b4282;background:radial-gradient(circle at 70%% 75%%,#224a86 0,#1b4282 40%%,#1a3f7e 100%%);"></div><span style='position:absolute;left:488px;top:782px;font:700 56.80px/114px "Liberation Sans",sans-serif;color:#ffffff;white-space:pre;transform:translate(0.000px,0.699px) scale(.25);transform-origin:0 0;letter-spacing:0.187px;'>Baldini Academy</span><div style='position:absolute;left:488px;top:813px;font:400 18.00px/36px "Liberation Sans",sans-serif;color:#a9bbd9;white-space:pre;letter-spacing:0.549px;transform:translate(0.000px,0.605px) scale(.25);transform-origin:0 0;'><span style="font-weight:400;color:#a9bbd9">Investiamo da sempre nella </span><span style="font-weight:700;color:#ffffff">formazione tecnica e nella valorizzazione</span></div><div style='position:absolute;left:488px;top:819px;font:400 18.00px/36px "Liberation Sans",sans-serif;color:#a9bbd9;white-space:pre;letter-spacing:0.678px;transform:translate(0.000px,0.705px) scale(.25);transform-origin:0 0;'><span style="font-weight:700;color:#ffffff">del capitale umano</span><span style="font-weight:400;color:#a9bbd9">, perché conosciamo il valore di un operatore</span></div><div style='position:absolute;left:488px;top:825px;font:400 18.00px/36px "Liberation Sans",sans-serif;color:#a9bbd9;white-space:pre;letter-spacing:0.857px;transform:translate(0.000px,0.705px) scale(.25);transform-origin:0 0;'><span style="font-weight:400;color:#a9bbd9">preparato, sicuro e consapevole. Da questa visione nascono</span></div><div style='position:absolute;left:488px;top:831px;font:400 18.00px/36px "Liberation Sans",sans-serif;color:#a9bbd9;white-space:pre;letter-spacing:0.492px;transform:translate(0.000px,0.805px) scale(.25);transform-origin:0 0;'><span style="font-weight:400;color:#a9bbd9">la </span><span style="font-weight:700;color:#ffffff">Baldini Academy</span><span style="font-weight:400;color:#a9bbd9">, rivolta a operatori e aziende, e il </span><span style="font-weight:700;color:#ffffff">Baldini Training</span></div><div style='position:absolute;left:488px;top:838px;font:400 18.00px/36px "Liberation Sans",sans-serif;color:#a9bbd9;white-space:pre;letter-spacing:0.698px;transform:translate(0.000px,0.305px) scale(.25);transform-origin:0 0;'><span style="font-weight:700;color:#ffffff">Camp</span><span style="font-weight:400;color:#a9bbd9">, pensato per chi vuole intraprendere una nuova carriera nel</span></div><div style='position:absolute;left:488px;top:844px;font:400 18.00px/36px "Liberation Sans",sans-serif;color:#a9bbd9;white-space:pre;letter-spacing:0.756px;transform:translate(0.000px,0.405px) scale(.25);transform-origin:0 0;'><span style="font-weight:400;color:#a9bbd9">nostro settore.</span></div><svg style="position:absolute;left:488.60px;top:934.00px;" width="9.20" height="10.00" viewBox="0 0 9.2 10"><path d="M0 0L9.2 5 0 10z" fill="#fff"/></svg>
<svg style="position:absolute;left:468.70px;top:983.60px;" width="377.20" height="68.40" viewBox="0 0 377.2 68.4"><defs><radialGradient id="r0" cx=".40" cy=".36" r=".70"><stop offset="0" stop-color="#c65042"/><stop offset=".55" stop-color="#ad1116"/><stop offset="1" stop-color="#880e0e"/></radialGradient><radialGradient id="rd0" cx=".45" cy=".40" r=".75"><stop offset="0" stop-color="#940f11"/><stop offset="1" stop-color="#690b0a"/></radialGradient><radialGradient id="r1" cx=".40" cy=".36" r=".70"><stop offset="0" stop-color="#e35442"/><stop offset=".55" stop-color="#d71716"/><stop offset="1" stop-color="#a3120e"/></radialGradient><radialGradient id="rd1" cx=".45" cy=".40" r=".75"><stop offset="0" stop-color="#b51411"/><stop offset="1" stop-color="#7d0e0a"/></radialGradient><radialGradient id="r2" cx=".40" cy=".36" r=".70"><stop offset="0" stop-color="#ed5e43"/><stop offset=".55" stop-color="#e52517"/><stop offset="1" stop-color="#ac1b0f"/></radialGradient><radialGradient id="rd2" cx=".45" cy=".40" r=".75"><stop offset="0" stop-color="#c01f12"/><stop offset="1" stop-color="#83150b"/></radialGradient><radialGradient id="r3" cx=".40" cy=".36" r=".70"><stop offset="0" stop-color="#f36e43"/><stop offset=".55" stop-color="#ee3d17"/><stop offset="1" stop-color="#b22a0f"/></radialGradient><radialGradient id="rd3" cx=".45" cy=".40" r=".75"><stop offset="0" stop-color="#c73212"/><stop offset="1" stop-color="#88200b"/></radialGradient><radialGradient id="r4" cx=".40" cy=".36" r=".70"><stop offset="0" stop-color="#f78642"/><stop offset=".55" stop-color="#f45f16"/><stop offset="1" stop-color="#b53f0e"/></radialGradient><radialGradient id="rd4" cx=".45" cy=".40" r=".75"><stop offset="0" stop-color="#cb4c11"/><stop offset="1" stop-color="#8a300a"/></radialGradient><radialGradient id="r5" cx=".40" cy=".36" r=".70"><stop offset="0" stop-color="#f99e44"/><stop offset=".55" stop-color="#f68119"/><stop offset="1" stop-color="#b75510"/></radialGradient><radialGradient id="rd5" cx=".45" cy=".40" r=".75"><stop offset="0" stop-color="#cd6713"/><stop offset="1" stop-color="#8b400b"/></radialGradient><radialGradient id="r6" cx=".40" cy=".36" r=".70"><stop offset="0" stop-color="#f7b348"/><stop offset=".55" stop-color="#f49f1e"/><stop offset="1" stop-color="#b56913"/></radialGradient><radialGradient id="rd6" cx=".45" cy=".40" r=".75"><stop offset="0" stop-color="#cc7e18"/><stop offset="1" stop-color="#8a4e0e"/></radialGradient><radialGradient id="r7" cx=".40" cy=".36" r=".70"><stop offset="0" stop-color="#ebbf4d"/><stop offset=".55" stop-color="#e3b026"/><stop offset="1" stop-color="#aa7318"/></radialGradient><radialGradient id="rd7" cx=".45" cy=".40" r=".75"><stop offset="0" stop-color="#be8b1d"/><stop offset="1" stop-color="#825612"/></radialGradient><radialGradient id="r8" cx=".40" cy=".36" r=".70"><stop offset="0" stop-color="#c9b751"/><stop offset=".55" stop-color="#b1a42b"/><stop offset="1" stop-color="#8b6c1b"/></radialGradient><radialGradient id="rd8" cx=".45" cy=".40" r=".75"><stop offset="0" stop-color="#988221"/><stop offset="1" stop-color="#6b5014"/></radialGradient><radialGradient id="r9" cx=".40" cy=".36" r=".70"><stop offset="0" stop-color="#a0a851"/><stop offset=".55" stop-color="#788f2a"/><stop offset="1" stop-color="#665e1b"/></radialGradient><radialGradient id="rd9" cx=".45" cy=".40" r=".75"><stop offset="0" stop-color="#6b7121"/><stop offset="1" stop-color="#504614"/></radialGradient></defs><rect width="377.2" height="68.4" fill="#efe4df"/><circle cx="20.6" cy="49.6" r="11.9" fill="url(#rd0)"/><circle cx="153.5" cy="62.9" r="11.7" fill="url(#rd0)"/><circle cx="155.8" cy="12.5" r="12.0" fill="url(#rd0)"/><circle cx="12.9" cy="26.5" r="10.2" fill="url(#rd0)"/><circle cx="64.2" cy="15.8" r="7.5" fill="url(#rd0)"/><circle cx="156.9" cy="58.6" r="10.9" fill="url(#rd1)"/><circle cx="357.5" cy="39.4" r="11.5" fill="url(#rd4)"/><circle cx="205.1" cy="9.7" r="11.4" fill="url(#rd1)"/><circle cx="67.8" cy="6.3" r="9.7" fill="url(#rd0)"/><circle cx="306.4" cy="44.9" r="10.5" fill="url(#rd3)"/><circle cx="1.6" cy="44.8" r="7.3" fill="url(#rd0)"/><circle cx="64.7" cy="8.4" r="9.4" fill="url(#rd0)"/><circle cx="226.1" cy="21.0" r="7.8" fill="url(#rd2)"/><circle cx="206.7" cy="50.9" r="9.3" fill="url(#rd2)"/><circle cx="362.0" cy="58.4" r="7.9" fill="url(#rd5)"/><circle cx="359.1" cy="55.6" r="9.4" fill="url(#rd4)"/><circle cx="320.3" cy="51.5" r="10.5" fill="url(#rd4)"/><circle cx="253.2" cy="5.2" r="9.7" fill="url(#rd2)"/><circle cx="273.1" cy="61.7" r="7.9" fill="url(#rd3)"/><circle cx="16.3" cy="35.3" r="7.5" fill="url(#rd0)"/><circle cx="230.0" cy="34.2" r="10.7" fill="url(#rd2)"/><circle cx="172.9" cy="3.2" r="7.9" fill="url(#rd1)"/><circle cx="58.1" cy="47.1" r="11.0" fill="url(#rd0)"/><circle cx="78.6" cy="17.3" r="8.8" fill="url(#rd0)"/><circle cx="292.7" cy="17.9" r="7.6" fill="url(#rd3)"/><circle cx="319.7" cy="13.1" r="11.5" fill="url(#rd3)"/><circle cx="330.1" cy="20.2" r="8.7" fill="url(#rd3)"/><circle cx="32.6" cy="15.2" r="9.1" fill="url(#rd0)"/><circle cx="69.7" cy="64.0" r="8.8" fill="url(#rd0)"/><circle cx="258.0" cy="38.0" r="11.0" fill="url(#rd2)"/><circle cx="317.3" cy="47.5" r="10.0" fill="url(#rd3)"/><circle cx="191.3" cy="63.1" r="10.3" fill="url(#rd1)"/><circle cx="364.7" cy="4.6" r="9.4" fill="url(#rd4)"/><circle cx="229.7" cy="3.9" r="11.5" fill="url(#rd2)"/><circle cx="195.5" cy="55.9" r="8.5" fill="url(#rd1)"/><circle cx="44.0" cy="23.4" r="8.4" fill="url(#rd0)"/><circle cx="313.0" cy="3.8" r="10.5" fill="url(#rd3)"/><circle cx="293.4" cy="18.1" r="11.0" fill="url(#rd3)"/><circle cx="196.3" cy="68.3" r="10.5" fill="url(#rd2)"/><circle cx="47.2" cy="1.7" r="11.8" fill="url(#rd0)"/><circle cx="100.2" cy="16.6" r="10.0" fill="url(#rd0)"/><circle cx="5.1" cy="8.4" r="11.0" fill="url(#rd0)"/><circle cx="58.1" cy="64.9" r="9.2" fill="url(#rd0)"/><circle cx="155.3" cy="27.8" r="7.6" fill="url(#rd1)"/><circle cx="30.9" cy="32.3" r="10.9" fill="url(#rd0)"/><circle cx="334.9" cy="61.6" r="9.5" fill="url(#rd4)"/><circle cx="41.6" cy="67.2" r="10.3" fill="url(#rd0)"/><circle cx="190.1" cy="36.6" r="8.7" fill="url(#rd1)"/><circle cx="347.5" cy="53.8" r="9.8" fill="url(#rd4)"/><circle cx="240.1" cy="34.3" r="8.5" fill="url(#rd2)"/><circle cx="299.0" cy="48.8" r="8.5" fill="url(#rd3)"/><circle cx="183.0" cy="30.2" r="11.7" fill="url(#rd1)"/><circle cx="302.1" cy="63.1" r="9.1" fill="url(#rd3)"/><circle cx="176.8" cy="8.4" r="9.8" fill="url(#rd1)"/><circle cx="10.1" cy="16.0" r="9.2" fill="url(#rd0)"/><circle cx="67.1" cy="10.7" r="11.0" fill="url(#rd0)"/><circle cx="351.1" cy="0.7" r="8.7" fill="url(#rd3)"/><circle cx="147.4" cy="36.8" r="8.2" fill="url(#rd0)"/><circle cx="356.2" cy="38.8" r="11.8" fill="url(#rd5)"/><circle cx="367.9" cy="40.1" r="11.3" fill="url(#rd4)"/><circle cx="18.4" cy="28.0" r="9.9" fill="url(#rd0)"/><circle cx="258.5" cy="65.0" r="9.1" fill="url(#rd3)"/><circle cx="193.5" cy="8.4" r="9.0" fill="url(#rd1)"/><circle cx="122.3" cy="29.6" r="10.3" fill="url(#rd1)"/><circle cx="82.8" cy="42.9" r="7.4" fill="url(#rd0)"/><circle cx="237.9" cy="0.7" r="9.8" fill="url(#rd2)"/><circle cx="27.7" cy="36.2" r="9.9" fill="url(#rd0)"/><circle cx="298.4" cy="57.2" r="8.9" fill="url(#rd3)"/><circle cx="240.0" cy="63.2" r="7.6" fill="url(#rd2)"/><circle cx="281.0" cy="62.3" r="8.8" fill="url(#rd2)"/><circle cx="165.0" cy="48.8" r="7.4" fill="url(#rd1)"/><circle cx="59.9" cy="11.3" r="9.5" fill="url(#rd0)"/><circle cx="99.2" cy="39.7" r="9.4" fill="url(#rd0)"/><circle cx="288.0" cy="23.0" r="8.7" fill="url(#rd3)"/><circle cx="264.0" cy="67.1" r="9.4" fill="url(#rd3)"/><circle cx="283.4" cy="35.8" r="7.2" fill="url(#rd3)"/><circle cx="5.7" cy="1.1" r="7.4" fill="url(#rd0)"/><circle cx="267.8" cy="52.3" r="7.7" fill="url(#rd2)"/><circle cx="165.5" cy="7.9" r="8.2" fill="url(#rd0)"/><circle cx="337.7" cy="49.7" r="9.3" fill="url(#rd3)"/><circle cx="369.3" cy="60.8" r="11.0" fill="url(#rd4)"/><circle cx="356.9" cy="17.3" r="10.0" fill="url(#rd4)"/><circle cx="362.2" cy="56.5" r="10.2" fill="url(#rd4)"/><circle cx="77.0" cy="56.2" r="10.0" fill="url(#rd0)"/><circle cx="53.6" cy="49.6" r="10.4" fill="url(#rd0)"/><circle cx="153.3" cy="10.9" r="7.7" fill="url(#rd1)"/><circle cx="352.3" cy="57.0" r="8.3" fill="url(#rd4)"/><circle cx="100.3" cy="9.5" r="8.4" fill="url(#rd0)"/><circle cx="185.3" cy="34.8" r="10.7" fill="url(#rd1)"/><ellipse cx="-0.5" cy="0.9" rx="6.4" ry="6.0" fill="#3a0a00" opacity=".28"/><ellipse cx="-1.1" cy="0.0" rx="6.3" ry="5.9" fill="url(#r0)"/><ellipse cx="18.5" cy="0.4" rx="13.6" ry="12.7" fill="#3a0a00" opacity=".28"/><ellipse cx="17.2" cy="-1.6" rx="13.4" ry="12.4" fill="url(#r0)"/><ellipse cx="11.9" cy="-7.3" rx="3.6" ry="1.5" fill="#fff" opacity=".30" transform="rotate(-35 11.9 -7.3)"/><ellipse cx="36.2" cy="1.0" rx="7.5" ry="6.9" fill="#3a0a00" opacity=".28"/><ellipse cx="35.5" cy="0.0" rx="7.4" ry="6.8" fill="url(#r0)"/><ellipse cx="-0.9" cy="18.9" rx="13.0" ry="13.4" fill="#3a0a00" opacity=".28"/><ellipse cx="-2.3" cy="17.1" rx="12.8" ry="13.1" fill="url(#r0)"/><ellipse cx="-7.3" cy="11.5" rx="3.4" ry="1.5" fill="#fff" opacity=".30" transform="rotate(-35 -7.3 11.5)"/><ellipse cx="54.0" cy="7.7" rx="14.2" ry="13.0" fill="#3a0a00" opacity=".28"/><ellipse cx="52.7" cy="5.8" rx="13.9" ry="12.8" fill="url(#r0)"/><ellipse cx="47.5" cy="0.1" rx="3.6" ry="1.5" fill="#fff" opacity=".30" transform="rotate(-35 47.5 0.1)"/><path d="M54.3 5.2L50.2 5.6M54.3 5.2L52.8 1.4M54.3 5.2L57.5 2.6M54.3 5.2L57.8 7.4M54.3 5.2L53.4 9.2" stroke="#809235" stroke-width="1.1" stroke-linecap="round" opacity=".85"/><ellipse cx="19.0" cy="18.8" rx="8.6" ry="7.4" fill="#3a0a00" opacity=".28"/><ellipse cx="18.2" cy="17.7" rx="8.4" ry="7.3" fill="url(#r0)"/><ellipse cx="15.2" cy="14.3" rx="2.1" ry="0.9" fill="#fff" opacity=".30" transform="rotate(-35 15.2 14.3)"/><ellipse cx="73.7" cy="5.8" rx="9.0" ry="9.1" fill="#3a0a00" opacity=".28"/><ellipse cx="72.8" cy="4.6" rx="8.8" ry="8.9" fill="url(#r0)"/><ellipse cx="69.4" cy="0.8" rx="2.3" ry="1.0" fill="#fff" opacity=".30" transform="rotate(-35 69.4 0.8)"/><ellipse cx="25.7" cy="29.6" rx="6.3" ry="5.6" fill="#3a0a00" opacity=".28"/><ellipse cx="25.1" cy="28.7" rx="6.2" ry="5.5" fill="url(#r0)"/><ellipse cx="101.4" cy="8.7" rx="14.6" ry="12.6" fill="#3a0a00" opacity=".28"/><ellipse cx="100.0" cy="6.8" rx="14.3" ry="12.3" fill="url(#r0)"/><ellipse cx="94.6" cy="0.9" rx="3.6" ry="1.5" fill="#fff" opacity=".30" transform="rotate(-35 94.6 0.9)"/><ellipse cx="122.2" cy="3.9" rx="9.9" ry="9.3" fill="#3a0a00" opacity=".28"/><ellipse cx="121.2" cy="2.5" rx="9.7" ry="9.2" fill="url(#r0)"/><ellipse cx="117.5" cy="-1.6" rx="2.6" ry="1.1" fill="#fff" opacity=".30" transform="rotate(-35 117.5 -1.6)"/><ellipse cx="41.7" cy="28.7" rx="12.5" ry="11.6" fill="#3a0a00" opacity=".28"/><ellipse cx="40.5" cy="27.1" rx="12.3" ry="11.3" fill="url(#r0)"/><ellipse cx="36.2" cy="22.2" rx="3.0" ry="1.3" fill="#fff" opacity=".30" transform="rotate(-35 36.2 22.2)"/><ellipse cx="81.4" cy="16.8" rx="6.3" ry="6.0" fill="#3a0a00" opacity=".28"/><ellipse cx="80.8" cy="16.0" rx="6.2" ry="5.9" fill="url(#r0)"/><ellipse cx="11.2" cy="40.5" rx="15.9" ry="14.2" fill="#3a0a00" opacity=".28"/><ellipse cx="9.7" cy="38.4" rx="15.6" ry="14.0" fill="url(#r0)"/><ellipse cx="4.1" cy="32.2" rx="3.8" ry="1.6" fill="#fff" opacity=".30" transform="rotate(-35 4.1 32.2)"/><path d="M10.2 38.1L7.8 34.3M10.2 38.1L13.0 34.7M10.2 38.1L14.3 39.7M10.2 38.1L9.8 42.5M10.2 38.1L5.9 39.1" stroke="#7a8e33" stroke-width="1.2" stroke-linecap="round" opacity=".85"/><ellipse cx="155.8" cy="1.1" rx="11.2" ry="10.7" fill="#3a0a00" opacity=".28"/><ellipse cx="154.8" cy="-0.4" rx="11.0" ry="10.5" fill="url(#r0)"/><ellipse cx="150.7" cy="-4.8" rx="2.8" ry="1.2" fill="#fff" opacity=".30" transform="rotate(-35 150.7 -4.8)"/><ellipse cx="176.0" cy="-1.0" rx="7.9" ry="7.0" fill="#3a0a00" opacity=".28"/><ellipse cx="175.2" cy="-2.0" rx="7.7" ry="6.9" fill="url(#r1)"/><ellipse cx="72.3" cy="31.3" rx="13.2" ry="12.6" fill="#3a0a00" opacity=".28"/><ellipse cx="71.0" cy="29.4" rx="12.9" ry="12.3" fill="url(#r0)"/><ellipse cx="65.9" cy="23.7" rx="3.5" ry="1.5" fill="#fff" opacity=".30" transform="rotate(-35 65.9 23.7)"/><ellipse cx="-0.4" cy="54.7" rx="7.2" ry="6.3" fill="#3a0a00" opacity=".28"/><ellipse cx="-1.0" cy="53.7" rx="7.1" ry="6.1" fill="url(#r0)"/><ellipse cx="102.0" cy="24.4" rx="6.4" ry="5.8" fill="#3a0a00" opacity=".28"/><ellipse cx="101.4" cy="23.6" rx="6.3" ry="5.7" fill="url(#r1)"/><ellipse cx="120.7" cy="21.2" rx="11.2" ry="10.4" fill="#3a0a00" opacity=".28"/><ellipse cx="119.7" cy="19.7" rx="11.0" ry="10.2" fill="url(#r0)"/><ellipse cx="115.7" cy="15.3" rx="2.7" ry="1.2" fill="#fff" opacity=".30" transform="rotate(-35 115.7 15.3)"/><ellipse cx="142.5" cy="19.5" rx="14.9" ry="14.3" fill="#3a0a00" opacity=".28"/><ellipse cx="141.1" cy="17.5" rx="14.6" ry="14.0" fill="url(#r0)"/><ellipse cx="135.7" cy="11.5" rx="3.7" ry="1.6" fill="#fff" opacity=".30" transform="rotate(-35 135.7 11.5)"/><path d="M139.8 19.0L143.3 16.4M139.8 19.0L143.4 21.4M139.8 19.0L138.6 23.1M139.8 19.0L135.5 19.0M139.8 19.0L138.4 14.9" stroke="#6a842e" stroke-width="1.1" stroke-linecap="round" opacity=".85"/><ellipse cx="89.5" cy="35.0" rx="8.8" ry="8.0" fill="#3a0a00" opacity=".28"/><ellipse cx="88.7" cy="33.9" rx="8.6" ry="7.8" fill="url(#r0)"/><ellipse cx="85.6" cy="30.5" rx="2.1" ry="0.9" fill="#fff" opacity=".30" transform="rotate(-35 85.6 30.5)"/><ellipse cx="24.0" cy="55.8" rx="7.5" ry="7.0" fill="#3a0a00" opacity=".28"/><ellipse cx="23.3" cy="54.9" rx="7.3" ry="6.8" fill="url(#r0)"/><ellipse cx="43.5" cy="51.4" rx="15.9" ry="13.8" fill="#3a0a00" opacity=".28"/><ellipse cx="42.1" cy="49.4" rx="15.6" ry="13.6" fill="url(#r0)"/><ellipse cx="36.5" cy="43.3" rx="3.8" ry="1.6" fill="#fff" opacity=".30" transform="rotate(-35 36.5 43.3)"/><path d="M42.4 51.3L45.6 48.3M42.4 51.3L46.2 53.4M42.4 51.3L41.6 55.6M42.4 51.3L38.1 51.9M42.4 51.3L40.5 47.4" stroke="#6c862f" stroke-width="1.2" stroke-linecap="round" opacity=".85"/><ellipse cx="214.9" cy="0.8" rx="12.7" ry="11.8" fill="#3a0a00" opacity=".28"/><ellipse cx="213.7" cy="-1.0" rx="12.5" ry="11.6" fill="url(#r2)"/><ellipse cx="208.8" cy="-6.3" rx="3.3" ry="1.4" fill="#fff" opacity=".30" transform="rotate(-35 208.8 -6.3)"/><path d="M215.3 -2.8L211.7 -1.6M215.3 -2.8L213.0 -5.8M215.3 -2.8L217.4 -6.0M215.3 -2.8L218.9 -1.8M215.3 -2.8L215.4 1.0" stroke="#577928" stroke-width="1.0" stroke-linecap="round" opacity=".85"/><ellipse cx="167.0" cy="14.5" rx="8.2" ry="7.0" fill="#3a0a00" opacity=".28"/><ellipse cx="166.2" cy="13.4" rx="8.1" ry="6.9" fill="url(#r0)"/><ellipse cx="189.6" cy="11.9" rx="14.0" ry="13.0" fill="#3a0a00" opacity=".28"/><ellipse cx="188.3" cy="10.0" rx="13.7" ry="12.7" fill="url(#r1)"/><ellipse cx="183.1" cy="4.4" rx="3.5" ry="1.5" fill="#fff" opacity=".30" transform="rotate(-35 183.1 4.4)"/><path d="M187.6 10.8L190.7 8.2M187.6 10.8L191.0 13.0M187.6 10.8L186.6 14.7M187.6 10.8L183.5 11.1M187.6 10.8L186.1 7.0" stroke="#597a29" stroke-width="1.1" stroke-linecap="round" opacity=".85"/><ellipse cx="233.0" cy="-1.2" rx="7.2" ry="6.8" fill="#3a0a00" opacity=".28"/><ellipse cx="232.3" cy="-2.2" rx="7.1" ry="6.7" fill="url(#r2)"/><ellipse cx="14.9" cy="69.5" rx="12.1" ry="11.7" fill="#3a0a00" opacity=".28"/><ellipse cx="13.7" cy="67.8" rx="11.8" ry="11.4" fill="url(#r0)"/><ellipse cx="9.0" cy="62.7" rx="3.2" ry="1.3" fill="#fff" opacity=".30" transform="rotate(-35 9.0 62.7)"/><path d="M14.0 67.4L10.6 66.1M14.0 67.4L14.1 63.7M14.0 67.4L17.5 66.4M14.0 67.4L16.1 70.4M14.0 67.4L11.8 70.3" stroke="#6d872f" stroke-width="1.0" stroke-linecap="round" opacity=".85"/><ellipse cx="111.3" cy="40.9" rx="15.1" ry="13.2" fill="#3a0a00" opacity=".28"/><ellipse cx="109.9" cy="38.9" rx="14.8" ry="12.9" fill="url(#r1)"/><ellipse cx="104.5" cy="33.0" rx="3.7" ry="1.6" fill="#fff" opacity=".30" transform="rotate(-35 104.5 33.0)"/><ellipse cx="71.4" cy="53.2" rx="12.1" ry="10.8" fill="#3a0a00" opacity=".28"/><ellipse cx="70.3" cy="51.7" rx="11.8" ry="10.6" fill="url(#r0)"/><ellipse cx="66.0" cy="47.0" rx="2.9" ry="1.2" fill="#fff" opacity=".30" transform="rotate(-35 66.0 47.0)"/><ellipse cx="158.5" cy="26.3" rx="6.6" ry="5.4" fill="#3a0a00" opacity=".28"/><ellipse cx="157.9" cy="25.4" rx="6.5" ry="5.3" fill="url(#r0)"/><ellipse cx="35.2" cy="69.7" rx="9.4" ry="8.7" fill="#3a0a00" opacity=".28"/><ellipse cx="34.4" cy="68.5" rx="9.3" ry="8.5" fill="url(#r0)"/><ellipse cx="31.1" cy="64.9" rx="2.3" ry="1.0" fill="#fff" opacity=".30" transform="rotate(-35 31.1 64.9)"/><ellipse cx="273.0" cy="0.1" rx="13.9" ry="11.1" fill="#3a0a00" opacity=".28"/><ellipse cx="271.8" cy="-1.6" rx="13.6" ry="10.9" fill="url(#r3)"/><ellipse cx="267.0" cy="-7.0" rx="3.3" ry="1.4" fill="#fff" opacity=".30" transform="rotate(-35 267.0 -7.0)"/><path d="M272.7 -2.8L271.0 0.6M272.7 -2.8L268.9 -3.3M272.7 -2.8L272.0 -6.5M272.7 -2.8L276.0 -4.6M272.7 -2.8L275.4 -0.1" stroke="#6f8830" stroke-width="1.0" stroke-linecap="round" opacity=".85"/><ellipse cx="248.0" cy="8.6" rx="13.6" ry="11.6" fill="#3a0a00" opacity=".28"/><ellipse cx="246.7" cy="6.8" rx="13.4" ry="11.4" fill="url(#r2)"/><ellipse cx="241.8" cy="1.4" rx="3.4" ry="1.4" fill="#fff" opacity=".30" transform="rotate(-35 241.8 1.4)"/><ellipse cx="131.7" cy="43.6" rx="10.8" ry="9.7" fill="#3a0a00" opacity=".28"/><ellipse cx="130.7" cy="42.1" rx="10.6" ry="9.5" fill="url(#r0)"/><ellipse cx="126.8" cy="37.9" rx="2.6" ry="1.1" fill="#fff" opacity=".30" transform="rotate(-35 126.8 37.9)"/><ellipse cx="176.1" cy="31.3" rx="13.3" ry="12.5" fill="#3a0a00" opacity=".28"/><ellipse cx="174.8" cy="29.4" rx="13.1" ry="12.2" fill="url(#r2)"/><ellipse cx="169.7" cy="23.8" rx="3.5" ry="1.5" fill="#fff" opacity=".30" transform="rotate(-35 169.7 23.8)"/><path d="M173.9 30.5L173.0 34.4M173.9 30.5L169.9 30.9M173.9 30.5L172.4 26.8M173.9 30.5L176.9 27.9M173.9 30.5L177.4 32.6" stroke="#849536" stroke-width="1.1" stroke-linecap="round" opacity=".85"/><ellipse cx="145.0" cy="40.8" rx="6.7" ry="5.5" fill="#3a0a00" opacity=".28"/><ellipse cx="144.4" cy="39.9" rx="6.5" ry="5.4" fill="url(#r1)"/><ellipse cx="96.8" cy="58.4" rx="13.0" ry="11.5" fill="#3a0a00" opacity=".28"/><ellipse cx="95.5" cy="56.6" rx="12.8" ry="11.3" fill="url(#r0)"/><ellipse cx="90.6" cy="51.2" rx="3.4" ry="1.4" fill="#fff" opacity=".30" transform="rotate(-35 90.6 51.2)"/><ellipse cx="158.0" cy="40.1" rx="9.1" ry="7.8" fill="#3a0a00" opacity=".28"/><ellipse cx="157.2" cy="38.9" rx="8.9" ry="7.6" fill="url(#r0)"/><ellipse cx="154.0" cy="35.4" rx="2.2" ry="0.9" fill="#fff" opacity=".30" transform="rotate(-35 154.0 35.4)"/><ellipse cx="55.8" cy="72.2" rx="14.6" ry="11.8" fill="#3a0a00" opacity=".28"/><ellipse cx="54.5" cy="70.3" rx="14.3" ry="11.6" fill="url(#r0)"/><ellipse cx="49.5" cy="64.7" rx="3.5" ry="1.5" fill="#fff" opacity=".30" transform="rotate(-35 49.5 64.7)"/><ellipse cx="202.9" cy="29.7" rx="8.6" ry="7.7" fill="#3a0a00" opacity=".28"/><ellipse cx="202.1" cy="28.6" rx="8.4" ry="7.6" fill="url(#r1)"/><ellipse cx="199.0" cy="25.2" rx="2.1" ry="0.9" fill="#fff" opacity=".30" transform="rotate(-35 199.0 25.2)"/><ellipse cx="297.6" cy="2.5" rx="13.3" ry="11.6" fill="#3a0a00" opacity=".28"/><ellipse cx="296.3" cy="0.7" rx="13.0" ry="11.4" fill="url(#r3)"/><ellipse cx="291.5" cy="-4.6" rx="3.3" ry="1.4" fill="#fff" opacity=".30" transform="rotate(-35 291.5 -4.6)"/><ellipse cx="221.5" cy="26.0" rx="14.8" ry="12.9" fill="#3a0a00" opacity=".28"/><ellipse cx="220.2" cy="24.0" rx="14.5" ry="12.6" fill="url(#r1)"/><ellipse cx="214.9" cy="18.3" rx="3.6" ry="1.5" fill="#fff" opacity=".30" transform="rotate(-35 214.9 18.3)"/><path d="M218.5 25.4L219.0 29.5M218.5 25.4L214.8 27.1M218.5 25.4L215.7 22.3M218.5 25.4L220.5 21.8M218.5 25.4L222.6 26.2" stroke="#6c862f" stroke-width="1.1" stroke-linecap="round" opacity=".85"/><ellipse cx="79.7" cy="74.6" rx="13.9" ry="11.8" fill="#3a0a00" opacity=".28"/><ellipse cx="78.4" cy="72.7" rx="13.6" ry="11.6" fill="url(#r0)"/><ellipse cx="73.4" cy="67.2" rx="3.4" ry="1.5" fill="#fff" opacity=".30" transform="rotate(-35 73.4 67.2)"/><ellipse cx="272.5" cy="16.6" rx="7.8" ry="6.5" fill="#3a0a00" opacity=".28"/><ellipse cx="271.8" cy="15.6" rx="7.7" ry="6.4" fill="url(#r2)"/><ellipse cx="323.4" cy="2.8" rx="14.4" ry="13.2" fill="#3a0a00" opacity=".28"/><ellipse cx="322.1" cy="0.9" rx="14.1" ry="13.0" fill="url(#r3)"/><ellipse cx="317.0" cy="-4.7" rx="3.5" ry="1.5" fill="#fff" opacity=".30" transform="rotate(-35 317.0 -4.7)"/><ellipse cx="148.4" cy="59.1" rx="13.8" ry="12.4" fill="#3a0a00" opacity=".28"/><ellipse cx="147.2" cy="57.3" rx="13.5" ry="12.2" fill="url(#r1)"/><ellipse cx="142.4" cy="52.0" rx="3.3" ry="1.4" fill="#fff" opacity=".30" transform="rotate(-35 142.4 52.0)"/><ellipse cx="353.6" cy="-1.2" rx="13.5" ry="12.0" fill="#3a0a00" opacity=".28"/><ellipse cx="352.2" cy="-3.1" rx="13.2" ry="11.8" fill="url(#r4)"/><ellipse cx="347.2" cy="-8.7" rx="3.5" ry="1.5" fill="#fff" opacity=".30" transform="rotate(-35 347.2 -8.7)"/><ellipse cx="174.5" cy="52.7" rx="10.9" ry="9.1" fill="#3a0a00" opacity=".28"/><ellipse cx="173.5" cy="51.3" rx="10.7" ry="8.9" fill="url(#r1)"/><ellipse cx="169.7" cy="47.1" rx="2.6" ry="1.1" fill="#fff" opacity=".30" transform="rotate(-35 169.7 47.1)"/><ellipse cx="194.0" cy="48.1" rx="13.5" ry="12.4" fill="#3a0a00" opacity=".28"/><ellipse cx="192.6" cy="46.3" rx="13.3" ry="12.2" fill="url(#r2)"/><ellipse cx="187.5" cy="40.6" rx="3.5" ry="1.5" fill="#fff" opacity=".30" transform="rotate(-35 187.5 40.6)"/><ellipse cx="245.0" cy="32.9" rx="11.7" ry="11.0" fill="#3a0a00" opacity=".28"/><ellipse cx="243.8" cy="31.2" rx="11.5" ry="10.8" fill="url(#r2)"/><ellipse cx="239.3" cy="26.2" rx="3.1" ry="1.3" fill="#fff" opacity=".30" transform="rotate(-35 239.3 26.2)"/><path d="M242.1 31.3L240.9 27.9M242.1 31.3L244.9 29.1M242.1 31.3L245.0 33.3M242.1 31.3L241.1 34.7M242.1 31.3L238.5 31.3" stroke="#778d32" stroke-width="1.0" stroke-linecap="round" opacity=".85"/><ellipse cx="117.3" cy="72.0" rx="15.3" ry="14.0" fill="#3a0a00" opacity=".28"/><ellipse cx="115.8" cy="70.0" rx="15.0" ry="13.8" fill="url(#r1)"/><ellipse cx="110.3" cy="63.9" rx="3.8" ry="1.6" fill="#fff" opacity=".30" transform="rotate(-35 110.3 63.9)"/><ellipse cx="371.0" cy="-0.3" rx="6.5" ry="6.5" fill="#3a0a00" opacity=".28"/><ellipse cx="370.3" cy="-1.3" rx="6.4" ry="6.3" fill="url(#r4)"/><ellipse cx="137.4" cy="71.2" rx="7.3" ry="6.5" fill="#3a0a00" opacity=".28"/><ellipse cx="136.7" cy="70.2" rx="7.2" ry="6.3" fill="url(#r1)"/><ellipse cx="338.9" cy="11.1" rx="7.4" ry="6.6" fill="#3a0a00" opacity=".28"/><ellipse cx="338.1" cy="10.1" rx="7.2" ry="6.4" fill="url(#r4)"/><ellipse cx="267.0" cy="33.4" rx="11.3" ry="9.9" fill="#3a0a00" opacity=".28"/><ellipse cx="265.8" cy="31.8" rx="11.1" ry="9.7" fill="url(#r2)"/><ellipse cx="261.5" cy="27.1" rx="2.9" ry="1.2" fill="#fff" opacity=".30" transform="rotate(-35 261.5 27.1)"/><path d="M267.4 32.1L266.1 29.0M267.4 32.1L270.0 29.9M267.4 32.1L270.3 33.9M267.4 32.1L266.6 35.4M267.4 32.1L264.0 32.4" stroke="#5a7b29" stroke-width="0.9" stroke-linecap="round" opacity=".85"/><ellipse cx="288.1" cy="27.8" rx="14.3" ry="13.2" fill="#3a0a00" opacity=".28"/><ellipse cx="286.7" cy="25.8" rx="14.0" ry="12.9" fill="url(#r3)"/><ellipse cx="281.4" cy="20.0" rx="3.6" ry="1.5" fill="#fff" opacity=".30" transform="rotate(-35 281.4 20.0)"/><path d="M288.0 26.7L287.9 22.5M288.0 26.7L291.9 25.3M288.0 26.7L290.5 30.0M288.0 26.7L285.6 30.1M288.0 26.7L284.0 25.5" stroke="#627f2c" stroke-width="1.1" stroke-linecap="round" opacity=".85"/><ellipse cx="311.0" cy="25.1" rx="12.1" ry="10.1" fill="#3a0a00" opacity=".28"/><ellipse cx="309.9" cy="23.5" rx="11.9" ry="9.9" fill="url(#r3)"/><ellipse cx="305.7" cy="18.8" rx="2.9" ry="1.2" fill="#fff" opacity=".30" transform="rotate(-35 305.7 18.8)"/><path d="M309.5 25.1L312.8 24.9M309.5 25.1L310.7 28.2M309.5 25.1L306.9 27.2M309.5 25.1L306.7 23.3M309.5 25.1L310.3 21.9" stroke="#728a31" stroke-width="0.9" stroke-linecap="round" opacity=".85"/><ellipse cx="160.0" cy="72.3" rx="8.6" ry="8.0" fill="#3a0a00" opacity=".28"/><ellipse cx="159.2" cy="71.2" rx="8.4" ry="7.9" fill="url(#r2)"/><ellipse cx="156.0" cy="67.6" rx="2.2" ry="0.9" fill="#fff" opacity=".30" transform="rotate(-35 156.0 67.6)"/><ellipse cx="213.2" cy="58.4" rx="13.4" ry="11.3" fill="#3a0a00" opacity=".28"/><ellipse cx="212.0" cy="56.6" rx="13.1" ry="11.1" fill="url(#r2)"/><ellipse cx="207.3" cy="51.5" rx="3.2" ry="1.4" fill="#fff" opacity=".30" transform="rotate(-35 207.3 51.5)"/><path d="M213.5 58.2L209.9 59.2M213.5 58.2L211.4 55.1M213.5 58.2L215.7 55.3M213.5 58.2L217.0 59.4M213.5 58.2L213.4 61.9" stroke="#879737" stroke-width="1.0" stroke-linecap="round" opacity=".85"/><ellipse cx="242.1" cy="54.1" rx="12.3" ry="11.8" fill="#3a0a00" opacity=".28"/><ellipse cx="240.9" cy="52.3" rx="12.1" ry="11.6" fill="url(#r3)"/><ellipse cx="236.0" cy="46.9" rx="3.3" ry="1.4" fill="#fff" opacity=".30" transform="rotate(-35 236.0 46.9)"/><path d="M241.4 54.0L238.0 55.9M241.4 54.0L238.5 51.5M241.4 54.0L242.9 50.5M241.4 54.0L245.2 54.4M241.4 54.0L242.1 57.8" stroke="#849436" stroke-width="1.0" stroke-linecap="round" opacity=".85"/><ellipse cx="359.9" cy="20.1" rx="13.8" ry="11.4" fill="#3a0a00" opacity=".28"/><ellipse cx="358.6" cy="18.3" rx="13.6" ry="11.2" fill="url(#r4)"/><ellipse cx="353.8" cy="13.0" rx="3.3" ry="1.4" fill="#fff" opacity=".30" transform="rotate(-35 353.8 13.0)"/><ellipse cx="384.3" cy="13.9" rx="14.7" ry="14.0" fill="#3a0a00" opacity=".28"/><ellipse cx="382.9" cy="11.9" rx="14.4" ry="13.7" fill="url(#r4)"/><ellipse cx="377.5" cy="5.9" rx="3.7" ry="1.6" fill="#fff" opacity=".30" transform="rotate(-35 377.5 5.9)"/><path d="M383.0 14.0L380.3 10.7M383.0 14.0L385.4 10.4M383.0 14.0L387.2 15.1M383.0 14.0L383.3 18.3M383.0 14.0L379.0 15.6" stroke="#7f9235" stroke-width="1.1" stroke-linecap="round" opacity=".85"/><ellipse cx="304.4" cy="37.9" rx="6.1" ry="5.9" fill="#3a0a00" opacity=".28"/><ellipse cx="303.8" cy="37.0" rx="5.9" ry="5.8" fill="url(#r4)"/><ellipse cx="184.3" cy="75.6" rx="15.9" ry="14.9" fill="#3a0a00" opacity=".28"/><ellipse cx="182.8" cy="73.5" rx="15.6" ry="14.6" fill="url(#r2)"/><ellipse cx="177.1" cy="67.2" rx="3.9" ry="1.6" fill="#fff" opacity=".30" transform="rotate(-35 177.1 67.2)"/><path d="M180.8 72.6L185.2 73.2M180.8 72.6L181.6 77.0M180.8 72.6L176.8 74.7M180.8 72.6L177.6 69.5M180.8 72.6L182.7 68.5" stroke="#7a8e33" stroke-width="1.2" stroke-linecap="round" opacity=".85"/><ellipse cx="204.3" cy="71.3" rx="6.3" ry="5.9" fill="#3a0a00" opacity=".28"/><ellipse cx="203.7" cy="70.4" rx="6.2" ry="5.8" fill="url(#r1)"/><ellipse cx="293.3" cy="46.1" rx="6.6" ry="6.2" fill="#3a0a00" opacity=".28"/><ellipse cx="292.6" cy="45.3" rx="6.4" ry="6.1" fill="url(#r3)"/><ellipse cx="320.5" cy="38.7" rx="6.9" ry="6.6" fill="#3a0a00" opacity=".28"/><ellipse cx="319.8" cy="37.7" rx="6.7" ry="6.5" fill="url(#r3)"/><ellipse cx="263.5" cy="58.0" rx="14.1" ry="12.8" fill="#3a0a00" opacity=".28"/><ellipse cx="262.2" cy="56.2" rx="13.9" ry="12.6" fill="url(#r3)"/><ellipse cx="257.3" cy="50.8" rx="3.3" ry="1.4" fill="#fff" opacity=".30" transform="rotate(-35 257.3 50.8)"/><path d="M262.1 54.7L263.9 51.3M262.1 54.7L265.9 55.4M262.1 54.7L262.6 58.5M262.1 54.7L258.6 56.4M262.1 54.7L259.4 51.9" stroke="#6e8730" stroke-width="1.0" stroke-linecap="round" opacity=".85"/><ellipse cx="223.8" cy="71.2" rx="6.6" ry="6.2" fill="#3a0a00" opacity=".28"/><ellipse cx="223.1" cy="70.3" rx="6.4" ry="6.1" fill="url(#r2)"/><ellipse cx="339.6" cy="37.7" rx="12.5" ry="12.0" fill="#3a0a00" opacity=".28"/><ellipse cx="338.3" cy="35.9" rx="12.3" ry="11.8" fill="url(#r3)"/><ellipse cx="333.5" cy="30.5" rx="3.3" ry="1.4" fill="#fff" opacity=".30" transform="rotate(-35 333.5 30.5)"/><ellipse cx="239.7" cy="73.9" rx="11.2" ry="11.0" fill="#3a0a00" opacity=".28"/><ellipse cx="238.6" cy="72.3" rx="11.0" ry="10.8" fill="url(#r2)"/><ellipse cx="234.4" cy="67.7" rx="2.9" ry="1.2" fill="#fff" opacity=".30" transform="rotate(-35 234.4 67.7)"/><ellipse cx="308.3" cy="53.5" rx="11.8" ry="10.4" fill="#3a0a00" opacity=".28"/><ellipse cx="307.1" cy="51.9" rx="11.6" ry="10.2" fill="url(#r4)"/><ellipse cx="302.6" cy="47.0" rx="3.0" ry="1.3" fill="#fff" opacity=".30" transform="rotate(-35 302.6 47.0)"/><path d="M307.4 51.4L310.9 51.1M307.4 51.4L308.7 54.7M307.4 51.4L304.7 53.7M307.4 51.4L304.4 49.6M307.4 51.4L308.2 48.0" stroke="#8b9938" stroke-width="0.9" stroke-linecap="round" opacity=".85"/><ellipse cx="288.7" cy="63.7" rx="11.7" ry="10.8" fill="#3a0a00" opacity=".28"/><ellipse cx="287.5" cy="62.0" rx="11.5" ry="10.6" fill="url(#r4)"/><ellipse cx="282.9" cy="57.0" rx="3.1" ry="1.3" fill="#fff" opacity=".30" transform="rotate(-35 282.9 57.0)"/><path d="M287.1 62.9L288.9 66.1M287.1 62.9L284.7 65.6M287.1 62.9L283.9 61.4M287.1 62.9L287.6 59.4M287.1 62.9L290.7 62.3" stroke="#6b852e" stroke-width="1.0" stroke-linecap="round" opacity=".85"/><ellipse cx="378.4" cy="37.5" rx="14.0" ry="14.2" fill="#3a0a00" opacity=".28"/><ellipse cx="376.9" cy="35.4" rx="13.7" ry="13.9" fill="url(#r4)"/><ellipse cx="371.4" cy="29.4" rx="3.8" ry="1.6" fill="#fff" opacity=".30" transform="rotate(-35 371.4 29.4)"/><path d="M378.9 35.9L375.7 38.9M378.9 35.9L375.1 33.8M378.9 35.9L379.7 31.7M378.9 35.9L383.2 35.4M378.9 35.9L380.7 39.8" stroke="#849536" stroke-width="1.2" stroke-linecap="round" opacity=".85"/><ellipse cx="357.7" cy="47.6" rx="10.2" ry="9.6" fill="#3a0a00" opacity=".28"/><ellipse cx="356.7" cy="46.2" rx="10.0" ry="9.4" fill="url(#r5)"/><ellipse cx="352.9" cy="42.1" rx="2.6" ry="1.1" fill="#fff" opacity=".30" transform="rotate(-35 352.9 42.1)"/><ellipse cx="333.1" cy="55.3" rx="9.1" ry="8.2" fill="#3a0a00" opacity=".28"/><ellipse cx="332.2" cy="54.0" rx="9.0" ry="8.0" fill="url(#r4)"/><ellipse cx="328.8" cy="50.2" rx="2.3" ry="1.0" fill="#fff" opacity=".30" transform="rotate(-35 328.8 50.2)"/><ellipse cx="316.4" cy="75.3" rx="14.4" ry="13.5" fill="#3a0a00" opacity=".28"/><ellipse cx="315.0" cy="73.4" rx="14.1" ry="13.3" fill="url(#r3)"/><ellipse cx="309.9" cy="67.7" rx="3.5" ry="1.5" fill="#fff" opacity=".30" transform="rotate(-35 309.9 67.7)"/><ellipse cx="351.1" cy="70.1" rx="12.8" ry="12.2" fill="#3a0a00" opacity=".28"/><ellipse cx="349.8" cy="68.2" rx="12.5" ry="12.0" fill="url(#r4)"/><ellipse cx="344.9" cy="62.8" rx="3.4" ry="1.4" fill="#fff" opacity=".30" transform="rotate(-35 344.9 62.8)"/><path d="M349.1 70.1L346.3 67.4M349.1 70.1L350.8 66.6M349.1 70.1L353.0 70.6M349.1 70.1L349.8 73.9M349.1 70.1L345.7 71.9" stroke="#929d3b" stroke-width="1.0" stroke-linecap="round" opacity=".85"/><ellipse cx="381.1" cy="66.4" rx="15.7" ry="13.5" fill="#3a0a00" opacity=".28"/><ellipse cx="379.7" cy="64.4" rx="15.4" ry="13.2" fill="url(#r5)"/><ellipse cx="374.2" cy="58.4" rx="3.7" ry="1.6" fill="#fff" opacity=".30" transform="rotate(-35 374.2 58.4)"/><path d="M381.1 65.7L380.3 61.4M381.1 65.7L384.9 63.6M381.1 65.7L384.2 68.7M381.1 65.7L379.2 69.5M381.1 65.7L376.8 65.1" stroke="#778c32" stroke-width="1.2" stroke-linecap="round" opacity=".85"/></svg><svg style="position:absolute;left:468.70px;top:983.60px;" width="377.20" height="68.40" viewBox="0 0 377.2 68.4"><defs><radialGradient id="aub" cx=".4" cy=".35" r=".7"><stop offset="0" stop-color="#7a2c3a"/><stop offset=".6" stop-color="#4e1622"/><stop offset="1" stop-color="#2c0a12"/></radialGradient></defs><ellipse cx="32" cy="12" rx="13" ry="11" fill="url(#aub)"/><ellipse cx="54" cy="40" rx="16" ry="13" fill="url(#aub)"/></svg><div style="position:absolute;left:662.00px;top:994.00px;width:173.80px;height:58.00px;background:#1b4282;"></div>
<div style="position:absolute;left:537.75px;top:21.00px;width:0.90px;height:1031.00px;background:rgba(186,84,200,.82);"></div><div style="position:absolute;left:775.75px;top:21.00px;width:0.90px;height:1031.00px;background:rgba(186,84,200,.82);"></div>
<div style="position:absolute;left:920.20px;top:21.00px;width:10.30px;height:1031.00px;background:#ebebee;"></div><div style="position:absolute;left:922.80px;top:23.00px;width:5.20px;height:460.00px;background:#a6aab3;border-radius:2.6px;"></div>
<div style="position:absolute;left:0.00px;top:21.00px;width:20.00px;height:1031.00px;background:linear-gradient(90deg,#545456 0,#4c4c4e 50%,#444446 100%);"></div>
<svg style="position:absolute;left:5.50px;top:87.50px;" width="9.00" height="9.00" viewBox="0 0 10 10"><g fill="none" stroke="#b79a38" stroke-width="1.0" stroke-linecap="round" stroke-linejoin="round"><circle cx="5" cy="5" r="3.4"/><path d="M3.4 5.2l1.2 1.2 2-2.4"/></g></svg>
<svg style="position:absolute;left:5.50px;top:103.50px;" width="9.00" height="9.00" viewBox="0 0 10 10"><g fill="none" stroke="#9e9ea1" stroke-width="1.0" stroke-linecap="round" stroke-linejoin="round"><rect x="1.5" y="1.8" width="7" height="6.4" rx=".8"/><path d="M5 1.8v6.4M5 5h3.5"/></g></svg>
<svg style="position:absolute;left:5.50px;top:119.50px;" width="9.00" height="9.00" viewBox="0 0 10 10"><g fill="none" stroke="#9e9ea1" stroke-width="1.0" stroke-linecap="round" stroke-linejoin="round"><path d="M2 8V2.2h3M2 5h2.4M6 8V5.4c0-1 1.8-1 1.8 0V8"/></g></svg>
<svg style="position:absolute;left:5.50px;top:135.50px;" width="9.00" height="9.00" viewBox="0 0 10 10"><g fill="none" stroke="#9e9ea1" stroke-width="1.0" stroke-linecap="round" stroke-linejoin="round"><rect x="2" y="2" width="6" height="6"/><path d="M1 3.5h8M1 6.5h8"/></g></svg>
<svg style="position:absolute;left:5.50px;top:151.50px;" width="9.00" height="9.00" viewBox="0 0 10 10"><g fill="none" stroke="#9e9ea1" stroke-width="1.0" stroke-linecap="round" stroke-linejoin="round"><path d="M3 1v8M7 1v8M1 3h8M1 7h8"/></g></svg>
<svg style="position:absolute;left:5.50px;top:167.50px;" width="9.00" height="9.00" viewBox="0 0 10 10"><g fill="none" stroke="#9e9ea1" stroke-width="1.0" stroke-linecap="round" stroke-linejoin="round"><path d="M1.5 2.5h7M1.5 5h7M1.5 7.5h7M3.6 2.5v5"/></g></svg>
<svg style="position:absolute;left:5.50px;top:183.50px;" width="9.00" height="9.00" viewBox="0 0 10 10"><g fill="none" stroke="#9e9ea1" stroke-width="1.0" stroke-linecap="round" stroke-linejoin="round"><path d="M2 2l5.5 2-2.3 1 2 2.2-1 .8-1.8-2.3L3.2 8z"/></g></svg>
<svg style="position:absolute;left:5.50px;top:199.50px;" width="9.00" height="9.00" viewBox="0 0 10 10"><g fill="none" stroke="#9e9ea1" stroke-width="1.0" stroke-linecap="round" stroke-linejoin="round"><rect x="2.5" y="1.5" width="6" height="6"/><path d="M1 3.5v5h5.5"/></g></svg>
<svg style="position:absolute;left:5.50px;top:215.50px;" width="9.00" height="9.00" viewBox="0 0 10 10"><g fill="none" stroke="#9e9ea1" stroke-width="1.0" stroke-linecap="round" stroke-linejoin="round"><circle cx="5" cy="5" r="3.3"/><path d="M5 1.7V5h3.3"/></g></svg>
<svg style="position:absolute;left:5.50px;top:231.50px;" width="9.00" height="9.00" viewBox="0 0 10 10"><g fill="none" stroke="#9e9ea1" stroke-width="1.0" stroke-linecap="round" stroke-linejoin="round"><ellipse cx="5" cy="5" rx="3.4" ry="3"/><path d="M2 4h6M2.4 6.2h5.2"/></g></svg>
<div style="position:absolute;left:275.00px;top:21.00px;width:102.00px;height:1031.00px;background:#161a1d;"></div>
<span style='position:absolute;left:300px;top:27px;font:700 26.40px/53px "Liberation Sans",sans-serif;color:#e2e6e9;white-space:pre;transform:translate(0.800px,0.297px) scale(.25);transform-origin:0 0;letter-spacing:-0.557px;'>Contenitore</span>
<svg style="position:absolute;left:340.30px;top:29.00px;" width="8.00" height="8.00" viewBox="0 0 10 10"><g fill="none" stroke="#3f464e" stroke-width="1.2" stroke-linecap="round" stroke-linejoin="round"><circle cx="5" cy="5" r="3.4"/><circle cx="5" cy="5" r="1.1"/></g></svg>
<svg style="position:absolute;left:350.80px;top:29.00px;" width="8.00" height="8.00" viewBox="0 0 10 10"><g fill="none" stroke="#5d646c" stroke-width="1.2" stroke-linecap="round" stroke-linejoin="round"><rect x="1.6" y="1.8" width="6.8" height="2.6" rx=".8"/><rect x="1.6" y="5.6" width="6.8" height="2.6" rx=".8"/></g></svg>
<svg style="position:absolute;left:361.70px;top:29.00px;" width="8.00" height="8.00" viewBox="0 0 10 10"><g fill="none" stroke="#5d646c" stroke-width="1.2" stroke-linecap="round" stroke-linejoin="round"><circle cx="5" cy="3.2" r="2"/><path d="M2.6 8.6l2.4-3 2.4 3"/></g></svg>
<div style="position:absolute;left:295.60px;top:44.60px;width:80.00px;height:0.80px;background:#262c32;"></div>
<div style="position:absolute;left:301.50px;top:52.00px;width:68.50px;height:15.00px;border:0.8px solid #2f363d;border-radius:2.5px;box-sizing:border-box;"></div>
<span style='position:absolute;left:305px;top:55px;font:400 18.40px/37px "Liberation Sans",sans-serif;color:#7f868e;white-space:pre;transform:translate(0.000px,0.582px) scale(.25);transform-origin:0 0;letter-spacing:1.461px;'>#brxe-dlwd03</span>
<svg style="position:absolute;left:349.60px;top:56.80px;" width="6.00" height="6.00" viewBox="0 0 10 10"><g fill="none" stroke="#4b525a" stroke-width="1.2" stroke-linecap="round" stroke-linejoin="round"><path d="M2 2h3l3 3-3 3-3-3z"/></g></svg>
<svg style="position:absolute;left:359.35px;top:56.55px;" width="6.50" height="6.50" viewBox="0 0 10 10"><g fill="none" stroke="#8d949c" stroke-width="1.2" stroke-linecap="round" stroke-linejoin="round"><path d="M2.5 8V2l3 2.4H8.2V8z" fill="#8d949c"/></g></svg>
<div style="position:absolute;left:302.50px;top:70.00px;width:41.20px;height:8.20px;background:#2b3138;border-radius:1px;"></div>
<span style='position:absolute;left:304px;top:69px;font:400 17.20px/34px "Liberation Sans",sans-serif;color:#7d848c;white-space:pre;transform:translate(0.200px,0.801px) scale(.25);transform-origin:0 0;letter-spacing:1.230px;'>@br&gt;c__t&gt;&gt;wide</span>
<div style="position:absolute;left:301.50px;top:84.60px;width:41.20px;height:17.20px;background:#29303a;border-radius:1.5px;"></div>
<span style='position:absolute;left:305px;top:88px;font:700 19.20px/38px "Liberation Sans",sans-serif;color:#e6e9ec;white-space:pre;transform:translate(0.600px,0.743px) scale(.25);transform-origin:0 0;letter-spacing:1.017px;'>CONTENUTO</span>
<span style='position:absolute;left:350px;top:88px;font:700 19.20px/38px "Liberation Sans",sans-serif;color:#4d545c;white-space:pre;transform:translate(0.600px,0.743px) scale(.25);transform-origin:0 0;letter-spacing:0.639px;'>STILE</span>
<div style="position:absolute;left:295.60px;top:108.30px;width:80.00px;height:0.80px;background:#262c32;"></div>
<span style='position:absolute;left:300px;top:113px;font:400 20.00px/40px "Liberation Sans",sans-serif;color:#dfe3e7;white-space:pre;transform:translate(0.800px,0.790px) scale(.25);transform-origin:0 0;letter-spacing:0.660px;'>Ciclo di query</span>
<div style="position:absolute;left:356.50px;top:115.20px;width:13.00px;height:7.60px;background:#22272d;border-radius:4px;"></div>
<div style="position:absolute;left:357.30px;top:116.00px;width:6.00px;height:6.00px;background:#c9d1dc;border-radius:3px;"></div>
<div style="position:absolute;left:295.60px;top:129.30px;width:80.00px;height:0.80px;background:#262c32;"></div>
<span style='position:absolute;left:300px;top:140px;font:400 20.00px/40px "Liberation Sans",sans-serif;color:#dfe3e7;white-space:pre;transform:translate(0.800px,0.390px) scale(.25);transform-origin:0 0;letter-spacing:0.269px;'>Tag HTML</span>
<div style="position:absolute;left:336.00px;top:139.60px;width:34.00px;height:12.00px;background:#242a31;border-radius:1.2px;"></div><span style='position:absolute;left:340px;top:140px;font:400 18.40px/37px "Liberation Sans",sans-serif;color:#59616a;white-space:pre;transform:translate(0.200px,0.782px) scale(.25);transform-origin:0 0;'>div</span><svg style="position:absolute;left:361.00px;top:143.10px;" width="5.00" height="5.00" viewBox="0 0 10 10"><g fill="none" stroke="#3d444c" stroke-width="1.2" stroke-linecap="round" stroke-linejoin="round"><path d="M2.5 4l2.5 2.5L7.5 4"/></g></svg>
<span style='position:absolute;left:300px;top:156px;font:400 20.00px/40px "Liberation Sans",sans-serif;color:#dfe3e7;white-space:pre;transform:translate(0.800px,0.390px) scale(.25);transform-origin:0 0;letter-spacing:0.380px;'>Visualizzazio...</span>
<div style="position:absolute;left:338.60px;top:155.60px;width:34.40px;height:12.00px;background:#242a31;border-radius:1.2px;"></div><span style='position:absolute;left:342px;top:156px;font:400 18.40px/37px "Liberation Sans",sans-serif;color:#59616a;white-space:pre;transform:translate(0.800px,0.782px) scale(.25);transform-origin:0 0;'>Flex</span><svg style="position:absolute;left:364.00px;top:159.10px;" width="5.00" height="5.00" viewBox="0 0 10 10"><g fill="none" stroke="#3d444c" stroke-width="1.2" stroke-linecap="round" stroke-linejoin="round"><path d="M2.5 4l2.5 2.5L7.5 4"/></g></svg>
<span style='position:absolute;left:300px;top:172px;font:400 20.00px/40px "Liberation Sans",sans-serif;color:#dfe3e7;white-space:pre;transform:translate(0.800px,0.390px) scale(.25);transform-origin:0 0;letter-spacing:0.501px;'>Flex wrap</span>
<div style="position:absolute;left:336.00px;top:171.60px;width:34.00px;height:12.00px;background:#242a31;border-radius:1.2px;"></div><span style='position:absolute;left:340px;top:172px;font:400 18.40px/37px "Liberation Sans",sans-serif;color:#59616a;white-space:pre;transform:translate(0.200px,0.782px) scale(.25);transform-origin:0 0;'>nowrap</span><svg style="position:absolute;left:361.00px;top:175.10px;" width="5.00" height="5.00" viewBox="0 0 10 10"><g fill="none" stroke="#3d444c" stroke-width="1.2" stroke-linecap="round" stroke-linejoin="round"><path d="M2.5 4l2.5 2.5L7.5 4"/></g></svg>
<span style='position:absolute;left:300px;top:188px;font:400 20.00px/40px "Liberation Sans",sans-serif;color:#dfe3e7;white-space:pre;transform:translate(0.800px,0.390px) scale(.25);transform-origin:0 0;letter-spacing:0.479px;'>Direzione</span>
<div style="position:absolute;left:326.20px;top:187.50px;width:12.40px;height:12.20px;background:#242a31;border-radius:1.2px;"></div>
<div style="position:absolute;left:341.70px;top:187.50px;width:12.40px;height:12.20px;background:#242a31;border-radius:1.2px;"></div>
<div style="position:absolute;left:357.20px;top:187.50px;width:12.40px;height:12.20px;background:#242a31;border-radius:1.2px;"></div>
<svg style="position:absolute;left:328.70px;top:190.00px;" width="7.40" height="7.20" viewBox="0 0 7.4 7.2"><path d="M0 1h7.4M0 3.6h7.4M0 6.2h7.4" stroke="#f3f5f7" stroke-width="1.7"/></svg>
<svg style="position:absolute;left:344.40px;top:190.00px;" width="7.00" height="7.20" viewBox="0 0 7 7.2"><path d="M.8 0v7.2M3.5 0v7.2M6.2 0v7.2" stroke="#555d66" stroke-width="1.1"/></svg>
<svg style="position:absolute;left:359.90px;top:190.10px;" width="7.00" height="7.00" viewBox="0 0 10 10"><g fill="none" stroke="#555d66" stroke-width="1.2" stroke-linecap="round" stroke-linejoin="round"><path d="M2 4V2.6h6V7M8 6v1.4H2V3"/></g></svg>
<span style='position:absolute;left:300px;top:201px;font:400 20.00px/40px "Liberation Sans",sans-serif;color:#dfe3e7;white-space:pre;transform:translate(0.800px,0.790px) scale(.25);transform-origin:0 0;letter-spacing:0.634px;'>Allineamento automatico</span>
<div style="position:absolute;left:301.00px;top:214.60px;width:12.00px;height:12.20px;background:#242a31;border-radius:1.2px;"></div>
<svg style="position:absolute;left:303.00px;top:217.60px;" width="8.00" height="6.40" viewBox="0 0 8 6.4"><path d="M0 .8h8M1 3.2h6M0 5.6h8" stroke="#4e565f" stroke-width="1.2"/></svg>
<div style="position:absolute;left:315.40px;top:214.60px;width:12.00px;height:12.20px;background:#242a31;border-radius:1.2px;"></div>
<svg style="position:absolute;left:317.40px;top:217.60px;" width="8.00" height="6.40" viewBox="0 0 8 6.4"><path d="M0 .8h8M1 3.2h6M0 5.6h8" stroke="#4e565f" stroke-width="1.2"/></svg>
<div style="position:absolute;left:329.50px;top:214.60px;width:12.00px;height:12.20px;background:#242a31;border-radius:1.2px;"></div>
<svg style="position:absolute;left:331.50px;top:217.60px;" width="8.00" height="6.40" viewBox="0 0 8 6.4"><path d="M0 .8h8M1 3.2h6M0 5.6h8" stroke="#4e565f" stroke-width="1.2"/></svg>
<div style="position:absolute;left:343.60px;top:214.60px;width:12.00px;height:12.20px;background:#242a31;border-radius:1.2px;"></div>
<svg style="position:absolute;left:345.60px;top:217.60px;" width="8.00" height="6.40" viewBox="0 0 8 6.4"><path d="M0 .8h8M1 3.2h6M0 5.6h8" stroke="#4e565f" stroke-width="1.2"/></svg>
<div style="position:absolute;left:358.00px;top:214.60px;width:12.00px;height:12.20px;background:#242a31;border-radius:1.2px;"></div>
<span style='position:absolute;left:361px;top:213px;font:400 28.00px/56px "Liberation Sans",sans-serif;color:#4e565f;white-space:pre;transform:translate(0.665px,0.605px) scale(.25);transform-origin:0 0;'>A</span>
<span style='position:absolute;left:300px;top:228px;font:400 20.00px/40px "Liberation Sans",sans-serif;color:#dfe3e7;white-space:pre;transform:translate(0.800px,0.790px) scale(.25);transform-origin:0 0;letter-spacing:0.495px;'>Allinea asse principale</span>
<div style="position:absolute;left:300.80px;top:241.40px;width:10.40px;height:12.20px;background:#242a31;border-radius:1.2px;"></div>
<svg style="position:absolute;left:302.40px;top:244.50px;" width="7.20" height="6.20" viewBox="0 0 7.2 6.2"><path d="M0 .8h7.2M.6 3.1h6M0 5.4h7.2" stroke="#4e565f" stroke-width="1.4"/></svg>
<div style="position:absolute;left:312.80px;top:241.40px;width:10.40px;height:12.20px;background:#242a31;border-radius:1.2px;"></div>
<svg style="position:absolute;left:314.40px;top:244.50px;" width="7.20" height="6.20" viewBox="0 0 7.2 6.2"><path d="M0 .8h7.2M.6 3.1h6M0 5.4h7.2" stroke="#4e565f" stroke-width="1.4"/></svg>
<div style="position:absolute;left:324.50px;top:241.40px;width:10.40px;height:12.20px;background:#242a31;border-radius:1.2px;"></div>
<svg style="position:absolute;left:326.10px;top:244.50px;" width="7.20" height="6.20" viewBox="0 0 7.2 6.2"><path d="M0 .8h7.2M.6 3.1h6M0 5.4h7.2" stroke="#4e565f" stroke-width="1.4"/></svg>
<div style="position:absolute;left:336.20px;top:241.40px;width:10.40px;height:12.20px;background:#242a31;border-radius:1.2px;"></div>
<svg style="position:absolute;left:337.80px;top:244.50px;" width="7.20" height="6.20" viewBox="0 0 7.2 6.2"><path d="M0 .8h7.2M.6 3.1h6M0 5.4h7.2" stroke="#4e565f" stroke-width="1.4"/></svg>
<div style="position:absolute;left:347.80px;top:241.40px;width:10.40px;height:12.20px;background:#242a31;border-radius:1.2px;"></div>
<svg style="position:absolute;left:349.40px;top:244.50px;" width="7.20" height="6.20" viewBox="0 0 7.2 6.2"><path d="M0 .8h7.2M.6 3.1h6M0 5.4h7.2" stroke="#4e565f" stroke-width="1.4"/></svg>
<div style="position:absolute;left:359.80px;top:241.40px;width:10.40px;height:12.20px;background:#242a31;border-radius:1.2px;"></div>
<svg style="position:absolute;left:361.40px;top:244.50px;" width="7.20" height="6.20" viewBox="0 0 7.2 6.2"><path d="M0 .8h7.2M.6 3.1h6M0 5.4h7.2" stroke="#4e565f" stroke-width="1.4"/></svg>
<span style='position:absolute;left:300px;top:256px;font:400 20.00px/40px "Liberation Sans",sans-serif;color:#dfe3e7;white-space:pre;transform:translate(0.800px,0.390px) scale(.25);transform-origin:0 0;letter-spacing:0.466px;'>Allinea asse trasversale</span>
<div style="position:absolute;left:300.40px;top:268.90px;width:10.40px;height:12.20px;background:#242a31;border-radius:1.2px;"></div>
<svg style="position:absolute;left:302.00px;top:272.00px;" width="7.20" height="6.20" viewBox="0 0 7.2 6.2"><path d="M0 .8h7.2M.6 3.1h6M0 5.4h7.2" stroke="#4e565f" stroke-width="1.4"/></svg>
<div style="position:absolute;left:312.80px;top:268.90px;width:10.40px;height:12.20px;background:#242a31;border-radius:1.2px;"></div>
<svg style="position:absolute;left:314.40px;top:272.00px;" width="7.20" height="6.20" viewBox="0 0 7.2 6.2"><path d="M0 .8h7.2M.6 3.1h6M0 5.4h7.2" stroke="#4e565f" stroke-width="1.4"/></svg>
<div style="position:absolute;left:324.50px;top:268.90px;width:10.40px;height:12.20px;background:#242a31;border-radius:1.2px;"></div>
<svg style="position:absolute;left:326.10px;top:272.00px;" width="7.20" height="6.20" viewBox="0 0 7.2 6.2"><path d="M0 .8h7.2M.6 3.1h6M0 5.4h7.2" stroke="#4e565f" stroke-width="1.4"/></svg>
<div style="position:absolute;left:336.20px;top:268.90px;width:10.40px;height:12.20px;background:#242a31;border-radius:1.2px;"></div>
<svg style="position:absolute;left:337.80px;top:272.00px;" width="7.20" height="6.20" viewBox="0 0 7.2 6.2"><path d="M0 .8h7.2M.6 3.1h6M0 5.4h7.2" stroke="#4e565f" stroke-width="1.4"/></svg>
<div style="position:absolute;left:348.40px;top:268.90px;width:10.40px;height:12.20px;background:#242a31;border-radius:1.2px;"></div>
<span style='position:absolute;left:351px;top:268px;font:400 26.00px/52px "Liberation Sans",sans-serif;color:#4e565f;white-space:pre;transform:translate(0.792px,0.295px) scale(.25);transform-origin:0 0;'>$</span>
<div style="position:absolute;left:360.20px;top:268.90px;width:10.40px;height:12.20px;background:#242a31;border-radius:1.2px;"></div>
<span style='position:absolute;left:363px;top:268px;font:400 26.00px/52px "Liberation Sans",sans-serif;color:#4e565f;white-space:pre;transform:translate(0.232px,0.295px) scale(.25);transform-origin:0 0;'>A</span>
<span style='position:absolute;left:300px;top:285px;font:400 20.00px/40px "Liberation Sans",sans-serif;color:#dfe3e7;white-space:pre;transform:translate(0.800px,0.990px) scale(.25);transform-origin:0 0;letter-spacing:0.332px;'>Spazio tra colon...</span>
<div style="position:absolute;left:346.20px;top:285.20px;width:13.00px;height:12.00px;background:#242a31;border-radius:1.2px 0 0 1.2px;"></div>
<span style='position:absolute;left:350px;top:286px;font:400 18.00px/36px "Liberation Sans",sans-serif;color:#666e77;white-space:pre;transform:translate(0.800px,0.605px) scale(.25);transform-origin:0 0;'>0</span>
<div style="position:absolute;left:359.60px;top:285.20px;width:10.60px;height:12.00px;background:#2b323a;border-radius:0 1.2px 1.2px 0;"></div>
<svg style="position:absolute;left:362.40px;top:288.40px;" width="5.20" height="5.60" viewBox="0 0 5.2 5.6"><rect x=".5" y=".5" width="4.2" height="4.6" rx=".6" fill="#79818a"/><path d="M1.4 1.8h2.4M1.4 3.4h2.4" stroke="#2b323a" stroke-width=".6"/></svg>
<span style='position:absolute;left:300px;top:301px;font:400 20.00px/40px "Liberation Sans",sans-serif;color:#dfe3e7;white-space:pre;transform:translate(0.800px,0.990px) scale(.25);transform-origin:0 0;letter-spacing:0.645px;'>Spazio tra righe</span>
<div style="position:absolute;left:342.00px;top:301.20px;width:17.20px;height:12.00px;background:#242a31;border-radius:1.2px 0 0 1.2px;"></div>
<span style='position:absolute;left:346px;top:302px;font:400 18.00px/36px "Liberation Sans",sans-serif;color:#666e77;white-space:pre;transform:translate(0.600px,0.605px) scale(.25);transform-origin:0 0;'>20p</span>
<div style="position:absolute;left:359.60px;top:301.20px;width:10.60px;height:12.00px;background:#2b323a;border-radius:0 1.2px 1.2px 0;"></div>
<svg style="position:absolute;left:362.40px;top:304.40px;" width="5.20" height="5.60" viewBox="0 0 5.2 5.6"><rect x=".5" y=".5" width="4.2" height="4.6" rx=".6" fill="#79818a"/><path d="M1.4 1.8h2.4M1.4 3.4h2.4" stroke="#2b323a" stroke-width=".6"/></svg>
<span style='position:absolute;left:300px;top:317px;font:400 20.00px/40px "Liberation Sans",sans-serif;color:#dfe3e7;white-space:pre;transform:translate(0.800px,0.990px) scale(.25);transform-origin:0 0;letter-spacing:0.582px;'>Crescita flex</span>
<div style="position:absolute;left:336.00px;top:317.20px;width:23.20px;height:12.00px;background:#242a31;border-radius:1.2px 0 0 1.2px;"></div>
<span style='position:absolute;left:340px;top:318px;font:400 18.00px/36px "Liberation Sans",sans-serif;color:#666e77;white-space:pre;transform:translate(0.600px,0.605px) scale(.25);transform-origin:0 0;'>0</span>
<div style="position:absolute;left:359.60px;top:317.20px;width:10.60px;height:12.00px;background:#2b323a;border-radius:0 1.2px 1.2px 0;"></div>
<svg style="position:absolute;left:362.40px;top:320.40px;" width="5.20" height="5.60" viewBox="0 0 5.2 5.6"><rect x=".5" y=".5" width="4.2" height="4.6" rx=".6" fill="#79818a"/><path d="M1.4 1.8h2.4M1.4 3.4h2.4" stroke="#2b323a" stroke-width=".6"/></svg>
<span style='position:absolute;left:300px;top:333px;font:400 20.00px/40px "Liberation Sans",sans-serif;color:#dfe3e7;white-space:pre;transform:translate(0.800px,0.990px) scale(.25);transform-origin:0 0;letter-spacing:0.448px;'>Restringimento ...</span>
<div style="position:absolute;left:346.20px;top:333.20px;width:13.00px;height:12.00px;background:#242a31;border-radius:1.2px 0 0 1.2px;"></div>
<span style='position:absolute;left:350px;top:334px;font:400 18.00px/36px "Liberation Sans",sans-serif;color:#666e77;white-space:pre;transform:translate(0.800px,0.605px) scale(.25);transform-origin:0 0;'>1</span>
<div style="position:absolute;left:359.60px;top:333.20px;width:10.60px;height:12.00px;background:#2b323a;border-radius:0 1.2px 1.2px 0;"></div>
<svg style="position:absolute;left:362.40px;top:336.40px;" width="5.20" height="5.60" viewBox="0 0 5.2 5.6"><rect x=".5" y=".5" width="4.2" height="4.6" rx=".6" fill="#79818a"/><path d="M1.4 1.8h2.4M1.4 3.4h2.4" stroke="#2b323a" stroke-width=".6"/></svg>
<span style='position:absolute;left:300px;top:349px;font:400 20.00px/40px "Liberation Sans",sans-serif;color:#dfe3e7;white-space:pre;transform:translate(0.800px,0.990px) scale(.25);transform-origin:0 0;letter-spacing:0.459px;'>Base flex</span>
<div style="position:absolute;left:336.00px;top:349.20px;width:23.20px;height:12.00px;background:#242a31;border-radius:1.2px 0 0 1.2px;"></div>
<span style='position:absolute;left:340px;top:350px;font:400 18.00px/36px "Liberation Sans",sans-serif;color:#666e77;white-space:pre;transform:translate(0.600px,0.605px) scale(.25);transform-origin:0 0;'>auto</span>
<div style="position:absolute;left:359.60px;top:349.20px;width:10.60px;height:12.00px;background:#2b323a;border-radius:0 1.2px 1.2px 0;"></div>
<svg style="position:absolute;left:362.40px;top:352.40px;" width="5.20" height="5.60" viewBox="0 0 5.2 5.6"><rect x=".5" y=".5" width="4.2" height="4.6" rx=".6" fill="#79818a"/><path d="M1.4 1.8h2.4M1.4 3.4h2.4" stroke="#2b323a" stroke-width=".6"/></svg>
<span style='position:absolute;left:300px;top:365px;font:400 20.00px/40px "Liberation Sans",sans-serif;color:#dfe3e7;white-space:pre;transform:translate(0.800px,0.990px) scale(.25);transform-origin:0 0;letter-spacing:0.395px;'>Ordine</span>
<div style="position:absolute;left:336.00px;top:365.20px;width:23.20px;height:12.00px;background:#242a31;border-radius:1.2px 0 0 1.2px;"></div>
<span style='position:absolute;left:340px;top:366px;font:400 18.00px/36px "Liberation Sans",sans-serif;color:#666e77;white-space:pre;transform:translate(0.600px,0.605px) scale(.25);transform-origin:0 0;'>0</span>
<div style="position:absolute;left:359.60px;top:365.20px;width:10.60px;height:12.00px;background:#2b323a;border-radius:0 1.2px 1.2px 0;"></div>
<svg style="position:absolute;left:362.40px;top:368.40px;" width="5.20" height="5.60" viewBox="0 0 5.2 5.6"><rect x=".5" y=".5" width="4.2" height="4.6" rx=".6" fill="#79818a"/><path d="M1.4 1.8h2.4M1.4 3.4h2.4" stroke="#2b323a" stroke-width=".6"/></svg>
<div style="position:absolute;left:295.60px;top:1031.60px;width:80.00px;height:0.80px;background:#262c32;"></div>
<span style='position:absolute;left:301px;top:1037px;font:700 18.80px/38px "Liberation Sans",sans-serif;color:#aeb4ba;white-space:pre;transform:translate(0.000px,0.684px) scale(.25);transform-origin:0 0;letter-spacing:0.663px;'>Impostazioni di licenza</span>
<div style="position:absolute;left:360.60px;top:1037.00px;width:10.20px;height:10.60px;background:#2b323a;border-radius:1.2px;"></div>
<svg style="position:absolute;left:363.20px;top:1039.60px;" width="5.20" height="5.60" viewBox="0 0 5.2 5.6"><rect x=".5" y=".5" width="4.2" height="4.6" rx=".6" fill="#79818a"/></svg>
<div style="position:absolute;left:947.00px;top:21.00px;width:95.00px;height:1031.00px;background:#161a1d;"></div>
<span style='position:absolute;left:954px;top:26px;font:700 25.20px/50px "Liberation Sans",sans-serif;color:#e2e6e9;white-space:pre;transform:translate(0.000px,0.691px) scale(.25);transform-origin:0 0;letter-spacing:0.177px;'>Struttura</span>
<svg style="position:absolute;left:996.10px;top:29.50px;" width="7.00" height="7.00" viewBox="0 0 10 10"><g fill="none" stroke="#4b525a" stroke-width="1.2" stroke-linecap="round" stroke-linejoin="round"><path d="M2 8.5V3a3 3 0 0 1 6 0v5.5"/></g></svg>
<svg style="position:absolute;left:1006.10px;top:29.50px;" width="7.00" height="7.00" viewBox="0 0 10 10"><g fill="none" stroke="#4b525a" stroke-width="1.2" stroke-linecap="round" stroke-linejoin="round"><path d="M5 1.5v5M3 4.8l2 2 2-2M1.6 8.4h6.8"/></g></svg>
<svg style="position:absolute;left:1016.50px;top:29.50px;" width="7.00" height="7.00" viewBox="0 0 10 10"><g fill="none" stroke="#4b525a" stroke-width="1.2" stroke-linecap="round" stroke-linejoin="round"><path d="M2 3h6v5.6H2zM1.4 3h7.2M4 1.6h2"/></g></svg>
<svg style="position:absolute;left:1026.50px;top:29.50px;" width="7.00" height="7.00" viewBox="0 0 10 10"><g fill="none" stroke="#4b525a" stroke-width="1.2" stroke-linecap="round" stroke-linejoin="round"><path d="M2 8l6-6M5.4 2H8v2.6M4.6 8H2V5.4"/></g></svg>
<div style="position:absolute;left:951.00px;top:44.40px;width:88.00px;height:0.80px;background:#262c32;"></div>
<div style="position:absolute;left:956.40px;top:51.80px;width:79.00px;height:11.20px;border:0.7px solid #22282d;border-radius:1.5px;box-sizing:border-box;"></div>
<svg style="position:absolute;left:960.40px;top:54.60px;" width="6.20" height="5.60" viewBox="0 0 6.2 5.6"><rect x=".5" y=".5" width="5.2" height="4.6" rx=".5" fill="none" stroke="#8f79e6" stroke-width="1"/><path d="M.5 3.6h5.2" stroke="#8f79e6" stroke-width=".8"/></svg>
<span style='position:absolute;left:969px;top:52px;font:400 19.60px/39px "Liberation Sans",sans-serif;color:#7d63d8;white-space:pre;transform:translate(0.200px,0.388px) scale(.25);transform-origin:0 0;letter-spacing:1.332px;'>Hero shot</span>
<div style="position:absolute;left:956.40px;top:65.80px;width:79.00px;height:11.20px;border:0.7px solid #22282d;border-radius:1.5px;box-sizing:border-box;"></div>
<svg style="position:absolute;left:960.40px;top:68.60px;" width="6.20" height="5.60" viewBox="0 0 6.2 5.6"><rect x=".5" y=".5" width="5.2" height="4.6" rx=".5" fill="none" stroke="#59616a" stroke-width="1"/><path d="M.5 3.6h5.2" stroke="#59616a" stroke-width=".8"/></svg>
<span style='position:absolute;left:969px;top:66px;font:700 19.60px/39px "Liberation Sans",sans-serif;color:#dfe3e7;white-space:pre;transform:translate(0.200px,0.388px) scale(.25);transform-origin:0 0;letter-spacing:0.583px;'>Text</span>
<svg style="position:absolute;left:951.20px;top:70.00px;" width="3.60" height="2.80" viewBox="0 0 3.6 2.8"><path d="M.4 .6l1.4 1.6L3.2 .6" fill="none" stroke="#3a4148" stroke-width=".7"/></svg>
<div style="position:absolute;left:962.45px;top:79.40px;width:72.95px;height:12.00px;background:#7d5f10;border-radius:1.2px;"></div>
<svg style="position:absolute;left:966.85px;top:82.60px;" width="5.40" height="5.60" viewBox="0 0 5.4 5.6"><rect x=".5" y=".5" width="4.4" height="4.6" fill="none" stroke="#8e7a3a" stroke-width=".8"/></svg>
<span style='position:absolute;left:975px;top:80px;font:700 19.60px/39px "Liberation Sans",sans-serif;color:#d9c68a;white-space:pre;transform:translate(0.250px,0.388px) scale(.25);transform-origin:0 0;letter-spacing:0.600px;'>Contenitore</span>
<svg style="position:absolute;left:957.25px;top:84.00px;" width="3.60" height="2.80" viewBox="0 0 3.6 2.8"><path d="M.4 .6l1.4 1.6L3.2 .6" fill="none" stroke="#3a4148" stroke-width=".7"/></svg>
<div style="position:absolute;left:968.50px;top:93.80px;width:66.90px;height:11.20px;border:0.7px solid #22282d;border-radius:1.5px;box-sizing:border-box;"></div>
<svg style="position:absolute;left:972.90px;top:97.00px;" width="5.40" height="4.80" viewBox="0 0 5.4 4.8"><path d="M0 .5h5.4M0 2.4h5.4M0 4.3h3.4" stroke="#59616a" stroke-width=".8"/></svg>
<span style='position:absolute;left:981px;top:94px;font:700 19.60px/39px "Liberation Sans",sans-serif;color:#dfe3e7;white-space:pre;transform:translate(0.300px,0.388px) scale(.25);transform-origin:0 0;letter-spacing:0.574px;'>Testo formattato</span>
<div style="position:absolute;left:956.40px;top:107.80px;width:79.00px;height:11.20px;border:0.7px solid #22282d;border-radius:1.5px;box-sizing:border-box;"></div>
<svg style="position:absolute;left:960.40px;top:110.60px;" width="6.20" height="5.60" viewBox="0 0 6.2 5.6"><rect x=".5" y=".5" width="5.2" height="4.6" rx=".5" fill="none" stroke="#8f79e6" stroke-width="1"/><path d="M.5 3.6h5.2" stroke="#8f79e6" stroke-width=".8"/></svg>
<span style='position:absolute;left:969px;top:108px;font:400 19.60px/39px "Liberation Sans",sans-serif;color:#7d63d8;white-space:pre;transform:translate(0.200px,0.388px) scale(.25);transform-origin:0 0;letter-spacing:1.201px;'>Griglia dei servizi</span>
<div style="position:absolute;left:956.40px;top:121.80px;width:79.00px;height:11.20px;border:0.7px solid #22282d;border-radius:1.5px;box-sizing:border-box;"></div>
<svg style="position:absolute;left:960.40px;top:124.60px;" width="6.20" height="5.60" viewBox="0 0 6.2 5.6"><rect x=".5" y=".5" width="5.2" height="4.6" rx=".5" fill="none" stroke="#59616a" stroke-width="1"/><path d="M.5 3.6h5.2" stroke="#59616a" stroke-width=".8"/></svg>
<span style='position:absolute;left:969px;top:122px;font:700 19.60px/39px "Liberation Sans",sans-serif;color:#dfe3e7;white-space:pre;transform:translate(0.200px,0.388px) scale(.25);transform-origin:0 0;letter-spacing:0.588px;'>Image and text</span>
<svg style="position:absolute;left:951.20px;top:126.00px;" width="3.60" height="2.80" viewBox="0 0 3.6 2.8"><path d="M.4 .6l1.4 1.6L3.2 .6" fill="none" stroke="#3a4148" stroke-width=".7"/></svg>
<div style="position:absolute;left:962.45px;top:135.80px;width:72.95px;height:11.20px;border:0.7px solid #22282d;border-radius:1.5px;box-sizing:border-box;"></div>
<svg style="position:absolute;left:966.85px;top:138.60px;" width="5.40" height="5.60" viewBox="0 0 5.4 5.6"><rect x=".5" y=".5" width="4.4" height="4.6" fill="none" stroke="#59616a" stroke-width=".8"/></svg>
<span style='position:absolute;left:975px;top:136px;font:700 19.60px/39px "Liberation Sans",sans-serif;color:#dfe3e7;white-space:pre;transform:translate(0.250px,0.388px) scale(.25);transform-origin:0 0;letter-spacing:0.600px;'>Contenitore</span>
<svg style="position:absolute;left:957.25px;top:140.00px;" width="3.60" height="2.80" viewBox="0 0 3.6 2.8"><path d="M.4 .6l1.4 1.6L3.2 .6" fill="none" stroke="#3a4148" stroke-width=".7"/></svg>
<div style="position:absolute;left:968.50px;top:149.80px;width:66.90px;height:11.20px;border:0.7px solid #22282d;border-radius:1.5px;box-sizing:border-box;"></div>
<svg style="position:absolute;left:972.90px;top:152.60px;" width="5.40" height="5.60" viewBox="0 0 5.4 5.6"><rect x=".5" y=".5" width="4.4" height="4.6" fill="none" stroke="#59616a" stroke-width=".8"/></svg>
<span style='position:absolute;left:981px;top:150px;font:700 19.60px/39px "Liberation Sans",sans-serif;color:#dfe3e7;white-space:pre;transform:translate(0.300px,0.388px) scale(.25);transform-origin:0 0;letter-spacing:0.653px;'>Blocco</span>
<svg style="position:absolute;left:963.30px;top:154.00px;" width="3.60" height="2.80" viewBox="0 0 3.6 2.8"><path d="M.4 .6l1.4 1.6L3.2 .6" fill="none" stroke="#3a4148" stroke-width=".7"/></svg>
<div style="position:absolute;left:974.55px;top:163.80px;width:60.85px;height:11.20px;border:0.7px solid #22282d;border-radius:1.5px;box-sizing:border-box;"></div>
<svg style="position:absolute;left:978.95px;top:167.00px;" width="5.40" height="4.80" viewBox="0 0 5.4 4.8"><path d="M0 .5h5.4M0 2.4h5.4M0 4.3h3.4" stroke="#59616a" stroke-width=".8"/></svg>
<span style='position:absolute;left:987px;top:164px;font:700 19.60px/39px "Liberation Sans",sans-serif;color:#dfe3e7;white-space:pre;transform:translate(0.350px,0.388px) scale(.25);transform-origin:0 0;letter-spacing:0.686px;'>Immagine</span>
<div style="position:absolute;left:968.50px;top:177.80px;width:66.90px;height:11.20px;border:0.7px solid #22282d;border-radius:1.5px;box-sizing:border-box;"></div>
<svg style="position:absolute;left:972.90px;top:180.60px;" width="5.40" height="5.60" viewBox="0 0 5.4 5.6"><rect x=".5" y=".5" width="4.4" height="4.6" fill="none" stroke="#59616a" stroke-width=".8"/></svg>
<span style='position:absolute;left:981px;top:178px;font:700 19.60px/39px "Liberation Sans",sans-serif;color:#dfe3e7;white-space:pre;transform:translate(0.300px,0.388px) scale(.25);transform-origin:0 0;letter-spacing:0.653px;'>Blocco</span>
<svg style="position:absolute;left:963.30px;top:182.00px;" width="3.60" height="2.80" viewBox="0 0 3.6 2.8"><path d="M.4 .6l1.4 1.6L3.2 .6" fill="none" stroke="#3a4148" stroke-width=".7"/></svg>
<div style="position:absolute;left:974.55px;top:191.80px;width:60.85px;height:11.20px;border:0.7px solid #22282d;border-radius:1.5px;box-sizing:border-box;"></div>
<svg style="position:absolute;left:978.95px;top:195.00px;" width="5.40" height="4.80" viewBox="0 0 5.4 4.8"><path d="M0 .5h5.4M0 2.4h5.4M0 4.3h3.4" stroke="#59616a" stroke-width=".8"/></svg>
<span style='position:absolute;left:987px;top:192px;font:700 19.60px/39px "Liberation Sans",sans-serif;color:#dfe3e7;white-space:pre;transform:translate(0.350px,0.388px) scale(.25);transform-origin:0 0;letter-spacing:0.574px;'>Testo formattato</span>
<div style="position:absolute;left:974.55px;top:205.80px;width:60.85px;height:11.20px;border:0.7px solid #22282d;border-radius:1.5px;box-sizing:border-box;"></div>
<svg style="position:absolute;left:978.95px;top:210.90px;" width="5.40" height="1.00" viewBox="0 0 5.4 1"><path d="M0 .5h5.4" stroke="#59616a" stroke-width=".8"/></svg>
<span style='position:absolute;left:987px;top:206px;font:700 19.60px/39px "Liberation Sans",sans-serif;color:#dfe3e7;white-space:pre;transform:translate(0.350px,0.388px) scale(.25);transform-origin:0 0;letter-spacing:0.580px;'>Divisore</span>
<div style="position:absolute;left:974.55px;top:219.80px;width:60.85px;height:11.20px;border:0.7px solid #22282d;border-radius:1.5px;box-sizing:border-box;"></div>
<svg style="position:absolute;left:978.95px;top:223.00px;" width="5.40" height="4.80" viewBox="0 0 5.4 4.8"><path d="M0 .5h5.4M0 2.4h5.4M0 4.3h3.4" stroke="#59616a" stroke-width=".8"/></svg>
<span style='position:absolute;left:987px;top:220px;font:700 19.60px/39px "Liberation Sans",sans-serif;color:#dfe3e7;white-space:pre;transform:translate(0.350px,0.388px) scale(.25);transform-origin:0 0;letter-spacing:0.574px;'>Testo formattato</span>
<div style="position:absolute;left:974.55px;top:233.80px;width:60.85px;height:11.20px;border:0.7px solid #22282d;border-radius:1.5px;box-sizing:border-box;"></div>
<svg style="position:absolute;left:978.95px;top:236.60px;" width="5.40" height="5.60" viewBox="0 0 5.4 5.6"><rect x=".5" y=".5" width="4.4" height="4.6" fill="none" stroke="#59616a" stroke-width=".8"/></svg>
<span style='position:absolute;left:987px;top:234px;font:700 19.60px/39px "Liberation Sans",sans-serif;color:#dfe3e7;white-space:pre;transform:translate(0.350px,0.388px) scale(.25);transform-origin:0 0;letter-spacing:0.653px;'>Blocco</span>
<svg style="position:absolute;left:969.35px;top:238.00px;" width="3.60" height="2.80" viewBox="0 0 3.6 2.8"><path d="M.4 .6l1.4 1.6L3.2 .6" fill="none" stroke="#3a4148" stroke-width=".7"/></svg>
<div style="position:absolute;left:980.60px;top:247.80px;width:54.80px;height:11.20px;border:0.7px solid #22282d;border-radius:1.5px;box-sizing:border-box;"></div>
<svg style="position:absolute;left:985.00px;top:251.60px;" width="5.40" height="3.60" viewBox="0 0 5.4 3.6"><rect x=".4" y=".4" width="4.6" height="2.8" fill="none" stroke="#59616a" stroke-width=".7"/></svg>
<span style='position:absolute;left:993px;top:248px;font:700 19.60px/39px "Liberation Sans",sans-serif;color:#dfe3e7;white-space:pre;transform:translate(0.400px,0.388px) scale(.25);transform-origin:0 0;letter-spacing:0.613px;'>Pulsante</span>
<div style="position:absolute;left:956.40px;top:261.80px;width:79.00px;height:11.20px;border:0.7px solid #22282d;border-radius:1.5px;box-sizing:border-box;"></div>
<svg style="position:absolute;left:960.40px;top:264.60px;" width="6.20" height="5.60" viewBox="0 0 6.2 5.6"><rect x=".5" y=".5" width="5.2" height="4.6" rx=".5" fill="none" stroke="#59616a" stroke-width="1"/><path d="M.5 3.6h5.2" stroke="#59616a" stroke-width=".8"/></svg>
<span style='position:absolute;left:969px;top:262px;font:700 19.60px/39px "Liberation Sans",sans-serif;color:#dfe3e7;white-space:pre;transform:translate(0.200px,0.388px) scale(.25);transform-origin:0 0;letter-spacing:0.574px;'>Card Left</span>
<svg style="position:absolute;left:951.20px;top:266.00px;" width="3.60" height="2.80" viewBox="0 0 3.6 2.8"><path d="M.4 .6l1.4 1.6L3.2 .6" fill="none" stroke="#3a4148" stroke-width=".7"/></svg>
<div style="position:absolute;left:962.45px;top:275.80px;width:72.95px;height:11.20px;border:0.7px solid #22282d;border-radius:1.5px;box-sizing:border-box;"></div>
<svg style="position:absolute;left:966.85px;top:278.60px;" width="5.40" height="5.60" viewBox="0 0 5.4 5.6"><rect x=".5" y=".5" width="4.4" height="4.6" fill="none" stroke="#59616a" stroke-width=".8"/></svg>
<span style='position:absolute;left:975px;top:276px;font:700 19.60px/39px "Liberation Sans",sans-serif;color:#dfe3e7;white-space:pre;transform:translate(0.250px,0.388px) scale(.25);transform-origin:0 0;letter-spacing:0.600px;'>Contenitore</span>
<svg style="position:absolute;left:957.25px;top:280.00px;" width="3.60" height="2.80" viewBox="0 0 3.6 2.8"><path d="M.4 .6l1.4 1.6L3.2 .6" fill="none" stroke="#3a4148" stroke-width=".7"/></svg>
<div style="position:absolute;left:968.50px;top:289.80px;width:66.90px;height:11.20px;border:0.7px solid #22282d;border-radius:1.5px;box-sizing:border-box;"></div>
<svg style="position:absolute;left:972.90px;top:292.60px;" width="5.40" height="5.60" viewBox="0 0 5.4 5.6"><rect x=".5" y=".5" width="4.4" height="4.6" fill="none" stroke="#59616a" stroke-width=".8"/></svg>
<span style='position:absolute;left:981px;top:290px;font:700 19.60px/39px "Liberation Sans",sans-serif;color:#dfe3e7;white-space:pre;transform:translate(0.300px,0.388px) scale(.25);transform-origin:0 0;letter-spacing:0.600px;'>Contenitore</span>
<svg style="position:absolute;left:963.30px;top:294.00px;" width="3.60" height="2.80" viewBox="0 0 3.6 2.8"><path d="M.4 .6l1.4 1.6L3.2 .6" fill="none" stroke="#3a4148" stroke-width=".7"/></svg>
<div style="position:absolute;left:974.55px;top:303.80px;width:60.85px;height:11.20px;border:0.7px solid #22282d;border-radius:1.5px;box-sizing:border-box;"></div>
<svg style="position:absolute;left:978.95px;top:306.60px;" width="5.40" height="5.60" viewBox="0 0 5.4 5.6"><rect x=".5" y=".5" width="4.4" height="4.6" fill="none" stroke="#59616a" stroke-width=".8"/></svg>
<span style='position:absolute;left:987px;top:304px;font:700 19.60px/39px "Liberation Sans",sans-serif;color:#dfe3e7;white-space:pre;transform:translate(0.350px,0.388px) scale(.25);transform-origin:0 0;letter-spacing:0.653px;'>Blocco</span>
<svg style="position:absolute;left:969.35px;top:308.00px;" width="3.60" height="2.80" viewBox="0 0 3.6 2.8"><path d="M.4 .6l1.4 1.6L3.2 .6" fill="none" stroke="#3a4148" stroke-width=".7"/></svg>
<div style="position:absolute;left:980.60px;top:317.80px;width:54.80px;height:11.20px;border:0.7px solid #22282d;border-radius:1.5px;box-sizing:border-box;"></div>
<svg style="position:absolute;left:985.00px;top:320.60px;" width="5.40" height="5.60" viewBox="0 0 5.4 5.6"><rect x=".5" y=".5" width="4.4" height="4.6" fill="none" stroke="#59616a" stroke-width=".8"/></svg>
<span style='position:absolute;left:993px;top:318px;font:700 19.60px/39px "Liberation Sans",sans-serif;color:#dfe3e7;white-space:pre;transform:translate(0.400px,0.388px) scale(.25);transform-origin:0 0;letter-spacing:0.653px;'>Blocco</span>
<svg style="position:absolute;left:975.40px;top:322.00px;" width="3.60" height="2.80" viewBox="0 0 3.6 2.8"><path d="M.4 .6l1.4 1.6L3.2 .6" fill="none" stroke="#3a4148" stroke-width=".7"/></svg>
<div style="position:absolute;left:986.65px;top:331.80px;width:48.75px;height:11.20px;border:0.7px solid #22282d;border-radius:1.5px;box-sizing:border-box;"></div>
<span style='position:absolute;left:992px;top:332px;font:400 20.00px/40px "Liberation Sans",sans-serif;color:#59616a;white-space:pre;transform:translate(0.123px,0.190px) scale(.25);transform-origin:0 0;'>T</span>
<span style='position:absolute;left:999px;top:332px;font:700 19.60px/39px "Liberation Sans",sans-serif;color:#dfe3e7;white-space:pre;transform:translate(0.450px,0.388px) scale(.25);transform-origin:0 0;letter-spacing:0.566px;'>Intestazione</span>
<div style="position:absolute;left:986.65px;top:345.80px;width:48.75px;height:11.20px;border:0.7px solid #22282d;border-radius:1.5px;box-sizing:border-box;"></div>
<svg style="position:absolute;left:991.05px;top:349.00px;" width="5.40" height="4.80" viewBox="0 0 5.4 4.8"><path d="M0 .5h5.4M0 2.4h5.4M0 4.3h3.4" stroke="#59616a" stroke-width=".8"/></svg>
<span style='position:absolute;left:999px;top:346px;font:700 19.60px/39px "Liberation Sans",sans-serif;color:#dfe3e7;white-space:pre;transform:translate(0.450px,0.388px) scale(.25);transform-origin:0 0;letter-spacing:0.574px;overflow:hidden;width:141.80px;'>Testo formattato</span>
<div style="position:absolute;left:980.60px;top:359.80px;width:54.80px;height:11.20px;border:0.7px solid #22282d;border-radius:1.5px;box-sizing:border-box;"></div>
<svg style="position:absolute;left:985.00px;top:363.00px;" width="5.40" height="4.80" viewBox="0 0 5.4 4.8"><path d="M.5 4.3l2-3.6 2 2.2 .6 1.4z" fill="none" stroke="#59616a" stroke-width=".7"/></svg>
<span style='position:absolute;left:993px;top:360px;font:700 19.60px/39px "Liberation Sans",sans-serif;color:#dfe3e7;white-space:pre;transform:translate(0.400px,0.388px) scale(.25);transform-origin:0 0;letter-spacing:0.828px;'>SVG</span>
<div style="position:absolute;left:956.40px;top:373.80px;width:79.00px;height:11.20px;border:0.7px solid #22282d;border-radius:1.5px;box-sizing:border-box;"></div>
<svg style="position:absolute;left:960.40px;top:376.60px;" width="6.20" height="5.60" viewBox="0 0 6.2 5.6"><rect x=".5" y=".5" width="5.2" height="4.6" rx=".5" fill="none" stroke="#59616a" stroke-width="1"/><path d="M.5 3.6h5.2" stroke="#59616a" stroke-width=".8"/></svg>
<span style='position:absolute;left:969px;top:374px;font:700 19.60px/39px "Liberation Sans",sans-serif;color:#dfe3e7;white-space:pre;transform:translate(0.200px,0.388px) scale(.25);transform-origin:0 0;letter-spacing:0.601px;'>Card Right</span>
<svg style="position:absolute;left:951.20px;top:378.00px;" width="3.60" height="2.80" viewBox="0 0 3.6 2.8"><path d="M.4 .6l1.4 1.6L3.2 .6" fill="none" stroke="#3a4148" stroke-width=".7"/></svg>
<div style="position:absolute;left:962.45px;top:387.80px;width:72.95px;height:11.20px;border:0.7px solid #22282d;border-radius:1.5px;box-sizing:border-box;"></div>
<svg style="position:absolute;left:966.85px;top:390.60px;" width="5.40" height="5.60" viewBox="0 0 5.4 5.6"><rect x=".5" y=".5" width="4.4" height="4.6" fill="none" stroke="#59616a" stroke-width=".8"/></svg>
<span style='position:absolute;left:975px;top:388px;font:700 19.60px/39px "Liberation Sans",sans-serif;color:#dfe3e7;white-space:pre;transform:translate(0.250px,0.388px) scale(.25);transform-origin:0 0;letter-spacing:0.600px;'>Contenitore</span>
<svg style="position:absolute;left:957.25px;top:392.00px;" width="3.60" height="2.80" viewBox="0 0 3.6 2.8"><path d="M.4 .6l1.4 1.6L3.2 .6" fill="none" stroke="#3a4148" stroke-width=".7"/></svg>
<div style="position:absolute;left:968.50px;top:401.80px;width:66.90px;height:11.20px;border:0.7px solid #22282d;border-radius:1.5px;box-sizing:border-box;"></div>
<svg style="position:absolute;left:972.90px;top:404.60px;" width="5.40" height="5.60" viewBox="0 0 5.4 5.6"><rect x=".5" y=".5" width="4.4" height="4.6" fill="none" stroke="#59616a" stroke-width=".8"/></svg>
<span style='position:absolute;left:981px;top:402px;font:700 19.60px/39px "Liberation Sans",sans-serif;color:#dfe3e7;white-space:pre;transform:translate(0.300px,0.388px) scale(.25);transform-origin:0 0;letter-spacing:0.600px;'>Contenitore</span>
<svg style="position:absolute;left:963.30px;top:406.00px;" width="3.60" height="2.80" viewBox="0 0 3.6 2.8"><path d="M.4 .6l1.4 1.6L3.2 .6" fill="none" stroke="#3a4148" stroke-width=".7"/></svg>
<div style="position:absolute;left:974.55px;top:415.80px;width:60.85px;height:11.20px;border:0.7px solid #22282d;border-radius:1.5px;box-sizing:border-box;"></div>
<svg style="position:absolute;left:978.95px;top:418.60px;" width="5.40" height="5.60" viewBox="0 0 5.4 5.6"><rect x=".5" y=".5" width="4.4" height="4.6" fill="none" stroke="#59616a" stroke-width=".8"/></svg>
<span style='position:absolute;left:987px;top:416px;font:700 19.60px/39px "Liberation Sans",sans-serif;color:#dfe3e7;white-space:pre;transform:translate(0.350px,0.388px) scale(.25);transform-origin:0 0;letter-spacing:0.653px;'>Blocco</span>
<svg style="position:absolute;left:969.35px;top:420.00px;" width="3.60" height="2.80" viewBox="0 0 3.6 2.8"><path d="M.4 .6l1.4 1.6L3.2 .6" fill="none" stroke="#3a4148" stroke-width=".7"/></svg>
<div style="position:absolute;left:980.60px;top:429.80px;width:54.80px;height:11.20px;border:0.7px solid #22282d;border-radius:1.5px;box-sizing:border-box;"></div>
<svg style="position:absolute;left:985.00px;top:432.60px;" width="5.40" height="5.60" viewBox="0 0 5.4 5.6"><rect x=".5" y=".5" width="4.4" height="4.6" fill="none" stroke="#59616a" stroke-width=".8"/></svg>
<span style='position:absolute;left:993px;top:430px;font:700 19.60px/39px "Liberation Sans",sans-serif;color:#dfe3e7;white-space:pre;transform:translate(0.400px,0.388px) scale(.25);transform-origin:0 0;letter-spacing:0.653px;'>Blocco</span>
<svg style="position:absolute;left:975.40px;top:434.00px;" width="3.60" height="2.80" viewBox="0 0 3.6 2.8"><path d="M.4 .6l1.4 1.6L3.2 .6" fill="none" stroke="#3a4148" stroke-width=".7"/></svg>
<div style="position:absolute;left:986.65px;top:443.80px;width:48.75px;height:11.20px;border:0.7px solid #22282d;border-radius:1.5px;box-sizing:border-box;"></div>
<svg style="position:absolute;left:991.05px;top:447.00px;" width="5.40" height="4.80" viewBox="0 0 5.4 4.8"><path d="M0 .5h5.4M0 2.4h5.4M0 4.3h3.4" stroke="#59616a" stroke-width=".8"/></svg>
<span style='position:absolute;left:999px;top:444px;font:700 19.60px/39px "Liberation Sans",sans-serif;color:#dfe3e7;white-space:pre;transform:translate(0.450px,0.388px) scale(.25);transform-origin:0 0;letter-spacing:0.574px;overflow:hidden;width:141.80px;'>Testo formattato</span>
<div style="position:absolute;left:980.60px;top:457.80px;width:54.80px;height:11.20px;border:0.7px solid #22282d;border-radius:1.5px;box-sizing:border-box;"></div>
<svg style="position:absolute;left:985.00px;top:461.00px;" width="5.40" height="4.80" viewBox="0 0 5.4 4.8"><path d="M.5 4.3l2-3.6 2 2.2 .6 1.4z" fill="none" stroke="#59616a" stroke-width=".7"/></svg>
<span style='position:absolute;left:993px;top:458px;font:700 19.60px/39px "Liberation Sans",sans-serif;color:#dfe3e7;white-space:pre;transform:translate(0.400px,0.388px) scale(.25);transform-origin:0 0;letter-spacing:0.828px;'>SVG</span>
<div style="position:absolute;left:956.40px;top:471.80px;width:79.00px;height:11.20px;border:0.7px solid #22282d;border-radius:1.5px;box-sizing:border-box;"></div>
<svg style="position:absolute;left:960.40px;top:474.60px;" width="6.20" height="5.60" viewBox="0 0 6.2 5.6"><rect x=".5" y=".5" width="5.2" height="4.6" rx=".5" fill="none" stroke="#59616a" stroke-width="1"/><path d="M.5 3.6h5.2" stroke="#59616a" stroke-width=".8"/></svg>
<span style='position:absolute;left:969px;top:472px;font:700 19.60px/39px "Liberation Sans",sans-serif;color:#dfe3e7;white-space:pre;transform:translate(0.200px,0.388px) scale(.25);transform-origin:0 0;letter-spacing:0.735px;'>Form</span>
<svg style="position:absolute;left:951.20px;top:476.00px;" width="3.60" height="2.80" viewBox="0 0 3.6 2.8"><path d="M.4 .6l1.4 1.6L3.2 .6" fill="none" stroke="#3a4148" stroke-width=".7"/></svg>
<div style="position:absolute;left:962.45px;top:485.80px;width:72.95px;height:11.20px;border:0.7px solid #22282d;border-radius:1.5px;box-sizing:border-box;"></div>
<svg style="position:absolute;left:966.85px;top:488.60px;" width="5.40" height="5.60" viewBox="0 0 5.4 5.6"><rect x=".5" y=".5" width="4.4" height="4.6" fill="none" stroke="#59616a" stroke-width=".8"/></svg>
<span style='position:absolute;left:975px;top:486px;font:700 19.60px/39px "Liberation Sans",sans-serif;color:#dfe3e7;white-space:pre;transform:translate(0.250px,0.388px) scale(.25);transform-origin:0 0;letter-spacing:0.600px;'>Contenitore</span>
<svg style="position:absolute;left:957.25px;top:490.00px;" width="3.60" height="2.80" viewBox="0 0 3.6 2.8"><path d="M.4 .6l1.4 1.6L3.2 .6" fill="none" stroke="#3a4148" stroke-width=".7"/></svg>
<div style="position:absolute;left:968.50px;top:499.80px;width:66.90px;height:11.20px;border:0.7px solid #22282d;border-radius:1.5px;box-sizing:border-box;"></div>
<span style='position:absolute;left:973px;top:500px;font:400 20.00px/40px "Liberation Sans",sans-serif;color:#59616a;white-space:pre;transform:translate(0.973px,0.190px) scale(.25);transform-origin:0 0;'>T</span>
<span style='position:absolute;left:981px;top:500px;font:700 19.60px/39px "Liberation Sans",sans-serif;color:#dfe3e7;white-space:pre;transform:translate(0.300px,0.388px) scale(.25);transform-origin:0 0;letter-spacing:0.566px;'>Intestazione</span>
<div style="position:absolute;left:968.50px;top:513.80px;width:66.90px;height:11.20px;border:0.7px solid #22282d;border-radius:1.5px;box-sizing:border-box;"></div>
<svg style="position:absolute;left:972.90px;top:517.00px;" width="5.40" height="4.80" viewBox="0 0 5.4 4.8"><path d="M0 .5h5.4M0 2.4h5.4M0 4.3h3.4" stroke="#59616a" stroke-width=".8"/></svg>
<span style='position:absolute;left:981px;top:514px;font:700 19.60px/39px "Liberation Sans",sans-serif;color:#dfe3e7;white-space:pre;transform:translate(0.300px,0.388px) scale(.25);transform-origin:0 0;letter-spacing:0.574px;'>Testo formattato</span>
<div style="position:absolute;left:968.50px;top:527.80px;width:66.90px;height:11.20px;border:0.7px solid #22282d;border-radius:1.5px;box-sizing:border-box;"></div>
<svg style="position:absolute;left:972.90px;top:531.00px;" width="5.40" height="4.80" viewBox="0 0 5.4 4.8"><path d="M0 .5h5.4M0 2.4h5.4M0 4.3h3.4" stroke="#59616a" stroke-width=".8"/></svg>
<span style='position:absolute;left:981px;top:528px;font:700 19.60px/39px "Liberation Sans",sans-serif;color:#dfe3e7;white-space:pre;transform:translate(0.300px,0.388px) scale(.25);transform-origin:0 0;letter-spacing:0.697px;'>Modulo</span>
<div style="position:absolute;left:956.40px;top:541.80px;width:79.00px;height:11.20px;border:0.7px solid #22282d;border-radius:1.5px;box-sizing:border-box;"></div>
<svg style="position:absolute;left:960.40px;top:544.60px;" width="6.20" height="5.60" viewBox="0 0 6.2 5.6"><rect x=".5" y=".5" width="5.2" height="4.6" rx=".5" fill="none" stroke="#8f79e6" stroke-width="1"/><path d="M.5 3.6h5.2" stroke="#8f79e6" stroke-width=".8"/></svg>
<span style='position:absolute;left:969px;top:542px;font:400 19.60px/39px "Liberation Sans",sans-serif;color:#7d63d8;white-space:pre;transform:translate(0.200px,0.388px) scale(.25);transform-origin:0 0;letter-spacing:1.440px;'>Typography and buttons</span>
<div style="position:absolute;left:956.40px;top:555.80px;width:79.00px;height:11.20px;border:0.7px solid #22282d;border-radius:1.5px;box-sizing:border-box;"></div>
<svg style="position:absolute;left:960.40px;top:558.60px;" width="6.20" height="5.60" viewBox="0 0 6.2 5.6"><rect x=".5" y=".5" width="5.2" height="4.6" rx=".5" fill="none" stroke="#8f79e6" stroke-width="1"/><path d="M.5 3.6h5.2" stroke="#8f79e6" stroke-width=".8"/></svg>
<span style='position:absolute;left:969px;top:556px;font:400 19.60px/39px "Liberation Sans",sans-serif;color:#7d63d8;white-space:pre;transform:translate(0.200px,0.388px) scale(.25);transform-origin:0 0;letter-spacing:1.376px;'>Debug grid</span>
<div style="position:absolute;left:0.00px;top:0.00px;width:1316.00px;height:21.00px;background:#161a1d;"></div>
<div style="position:absolute;left:0.00px;top:0.00px;width:1920.00px;height:2.00px;background:#2a2b2f;"></div>
<div style="position:absolute;left:2.00px;top:4.00px;width:16.00px;height:14.50px;background:#ffd53e;border-radius:1.5px;"></div>
<span style='position:absolute;left:7px;top:3px;font:700 33.60px/67px "Liberation Sans",sans-serif;color:#17191c;white-space:pre;transform:translate(0.634px,0.040px) scale(.25);transform-origin:0 0;-webkit-text-stroke:1.6px #17191c;'>b</span>
<svg style="position:absolute;left:24.30px;top:7.70px;" width="7.40" height="7.40" viewBox="0 0 10 10"><g fill="none" stroke="#92979d" stroke-width="1.3" stroke-linecap="round" stroke-linejoin="round"><path d="M1.5 1.5h7v4.5a3.5 3 0 0 1-7 0z"/><path d="M3.5 3.5h3"/></g></svg>
<svg style="position:absolute;left:40.30px;top:7.70px;" width="7.40" height="7.40" viewBox="0 0 10 10"><g fill="none" stroke="#92979d" stroke-width="1.3" stroke-linecap="round" stroke-linejoin="round"><rect x="2.6" y="1.2" width="5.4" height="6.4" rx="1"/><path d="M1.6 3v5.6h4.6"/></g></svg>
<svg style="position:absolute;left:56.30px;top:7.70px;" width="7.40" height="7.40" viewBox="0 0 10 10"><g fill="none" stroke="#92979d" stroke-width="1.3" stroke-linecap="round" stroke-linejoin="round"><path d="M1.2 2h3l1 1.2h3.6v5.3H1.2z"/><path d="M3 5.5h4"/></g></svg>
<svg style="position:absolute;left:72.30px;top:7.70px;" width="7.40" height="7.40" viewBox="0 0 10 10"><g fill="none" stroke="#92979d" stroke-width="1.3" stroke-linecap="round" stroke-linejoin="round"><circle cx="5" cy="5" r="3.6"/><circle cx="5" cy="5" r="1.3"/></g></svg>
<svg style="position:absolute;left:88.70px;top:8.10px;" width="6.60" height="6.60" viewBox="0 0 10 10"><g fill="none" stroke="#92979d" stroke-width="1.3" stroke-linecap="round" stroke-linejoin="round"><path d="M2 2l6 6M8 2l-6 6" stroke-width="2.2"/></g></svg>
<svg style="position:absolute;left:104.30px;top:7.70px;" width="7.40" height="7.40" viewBox="0 0 10 10"><g fill="none" stroke="#92979d" stroke-width="1.3" stroke-linecap="round" stroke-linejoin="round"><path d="M5 1v8M1 5h8" stroke-width="1.3"/></g></svg>
<svg style="position:absolute;left:575.70px;top:7.70px;" width="7.40" height="7.40" viewBox="0 0 10 10"><g fill="none" stroke="#8d949c" stroke-width="1.3" stroke-linecap="round" stroke-linejoin="round"><path d="M8.2 5a3.2 3.2 0 1 1-1-2.3"/><path d="M8.4 1.4v2h-2"/></g></svg>
<svg style="position:absolute;left:587.30px;top:7.70px;" width="7.40" height="7.40" viewBox="0 0 10 10"><g fill="none" stroke="#8d949c" stroke-width="1.3" stroke-linecap="round" stroke-linejoin="round"><path d="M5 1.5v7" stroke-width="1.2"/></g></svg>
<div style="position:absolute;left:597.50px;top:5.00px;width:15.00px;height:12.50px;background:#3a424c;border-radius:1.5px;"></div>
<svg style="position:absolute;left:601.30px;top:7.40px;" width="7.40" height="7.40" viewBox="0 0 10 10"><g fill="none" stroke="#e8cf7a" stroke-width="1.3" stroke-linecap="round" stroke-linejoin="round"><rect x="1.5" y="1.5" width="7" height="5" rx=".6" fill="#e8cf7a"/><path d="M3 8.6h4"/></g></svg>
<div style="position:absolute;left:599.00px;top:16.60px;width:12.00px;height:1.00px;background:#d9b84a;"></div>
<svg style="position:absolute;left:617.30px;top:7.70px;" width="7.40" height="7.40" viewBox="0 0 10 10"><g fill="none" stroke="#8d949c" stroke-width="1.3" stroke-linecap="round" stroke-linejoin="round"><rect x="1.5" y="2" width="6" height="6.5" rx="1"/><path d="M5 7l3.4-3.4"/></g></svg>
<svg style="position:absolute;left:634.05px;top:7.70px;" width="7.40" height="7.40" viewBox="0 0 10 10"><g fill="none" stroke="#8d949c" stroke-width="1.3" stroke-linecap="round" stroke-linejoin="round"><rect x="1" y="2.5" width="8" height="5" rx=".8"/></g></svg>
<svg style="position:absolute;left:650.70px;top:7.70px;" width="7.40" height="7.40" viewBox="0 0 10 10"><g fill="none" stroke="#8d949c" stroke-width="1.3" stroke-linecap="round" stroke-linejoin="round"><rect x="2.8" y="1" width="4.4" height="8" rx=".8"/></g></svg>
<div style="position:absolute;left:667.00px;top:6.00px;width:26.75px;height:10.00px;background:#262c33;border-radius:1.5px;"></div>
<span style='position:absolute;left:670px;top:5px;font:400 20.00px/40px "Liberation Sans",sans-serif;color:#7f868e;white-space:pre;transform:translate(0.200px,0.890px) scale(.25);transform-origin:0 0;'>◎</span>
<span style='position:absolute;left:679px;top:5px;font:700 20.80px/42px "Liberation Sans",sans-serif;color:#a9afb6;white-space:pre;transform:translate(0.200px,0.769px) scale(.25);transform-origin:0 0;'>1562</span>
<div style="position:absolute;left:698.00px;top:6.00px;width:27.00px;height:10.00px;background:#262c33;border-radius:1.5px;"></div>
<span style='position:absolute;left:701px;top:5px;font:400 20.00px/40px "Liberation Sans",sans-serif;color:#7f868e;white-space:pre;transform:translate(0.200px,0.890px) scale(.25);transform-origin:0 0;'>↔</span>
<span style='position:absolute;left:710px;top:5px;font:700 20.80px/42px "Liberation Sans",sans-serif;color:#555c64;white-space:pre;transform:translate(0.200px,0.769px) scale(.25);transform-origin:0 0;'>—</span>
<div style="position:absolute;left:729.00px;top:6.00px;width:26.60px;height:10.00px;background:#262c33;border-radius:1.5px;"></div>
<span style='position:absolute;left:732px;top:5px;font:400 20.00px/40px "Liberation Sans",sans-serif;color:#7f868e;white-space:pre;transform:translate(0.200px,0.890px) scale(.25);transform-origin:0 0;'>⤡</span>
<span style='position:absolute;left:743px;top:5px;font:700 20.80px/42px "Liberation Sans",sans-serif;color:#a9afb6;white-space:pre;transform:translate(0.500px,0.769px) scale(.25);transform-origin:0 0;'>69</span>
<svg style="position:absolute;left:1205.30px;top:7.70px;" width="7.40" height="7.40" viewBox="0 0 10 10"><g fill="none" stroke="#3d444b" stroke-width="1.3" stroke-linecap="round" stroke-linejoin="round"><path d="M7.5 7.5a3 3 0 0 0-5-3.5"/><path d="M2 2v2.4h2.4"/></g></svg>
<svg style="position:absolute;left:1221.70px;top:7.70px;" width="7.40" height="7.40" viewBox="0 0 10 10"><g fill="none" stroke="#3d444b" stroke-width="1.3" stroke-linecap="round" stroke-linejoin="round"><path d="M2.5 7.5a3 3 0 0 1 5-3.5"/><path d="M8 2v2.4H5.6"/></g></svg>
<svg style="position:absolute;left:1237.30px;top:7.70px;" width="7.40" height="7.40" viewBox="0 0 10 10"><g fill="none" stroke="#aeb3b9" stroke-width="1.3" stroke-linecap="round" stroke-linejoin="round"><ellipse cx="5" cy="2.6" rx="3.3" ry="1.4" fill="#aeb3b9"/><path d="M1.7 2.6v4.8a3.3 1.4 0 0 0 6.6 0V2.6" fill="#aeb3b9"/></g></svg>
<svg style="position:absolute;left:1253.80px;top:7.70px;" width="7.40" height="7.40" viewBox="0 0 10 10"><g fill="none" stroke="#c3c7cc" stroke-width="1.3" stroke-linecap="round" stroke-linejoin="round"><circle cx="5" cy="5" r="3.9"/><path d="M2.2 3.4l1.9 4.6L5 5.4l1 2.6 1.8-4.6" stroke-width="1"/></g></svg>
<svg style="position:absolute;left:1269.30px;top:7.70px;" width="7.40" height="7.40" viewBox="0 0 10 10"><g fill="none" stroke="#9aa0a7" stroke-width="1.3" stroke-linecap="round" stroke-linejoin="round"><path d="M7.6 5.4v3H1.6v-6h3"/><path d="M5.6 1.4h3v3M8.4 1.6L4.8 5.2"/></g></svg>
<svg style="position:absolute;left:1285.30px;top:7.70px;" width="7.40" height="7.40" viewBox="0 0 10 10"><g fill="none" stroke="#8d949c" stroke-width="1.3" stroke-linecap="round" stroke-linejoin="round"><path d="M1 5c1.2-2 2.6-2.8 4-2.8S7.8 3 9 5c-1.2 2-2.6 2.8-4 2.8S2.2 7 1 5z"/><circle cx="5" cy="5" r="1.2" fill="#8d949c"/></g></svg>
<div style="position:absolute;left:1299.00px;top:4.00px;width:16.00px;height:14.50px;background:#3d4650;border-radius:1.5px;"></div>
<svg style="position:absolute;left:1303.80px;top:7.70px;" width="7.40" height="7.40" viewBox="0 0 10 10"><g fill="none" stroke="#cfd4da" stroke-width="1.3" stroke-linecap="round" stroke-linejoin="round"><rect x="1.3" y="1.5" width="7.4" height="7" rx=".6"/><path d="M3.5 1.5v7M5.3 5h2"/></g></svg>
<div style="position:absolute;left:1316.00px;top:2.00px;width:604.00px;height:1050.00px;background:#232327;"></div>
<div style="position:absolute;left:1316.00px;top:2.00px;width:604.00px;height:36.60px;background:#0c0c0d;"></div>
<div style="position:absolute;left:1360.80px;top:2.00px;width:154.80px;height:2.70px;background:#3a8cf0;"></div>
<div style="position:absolute;left:1316.00px;top:38.60px;width:604.00px;height:2.00px;background:#2f2f34;"></div>
<svg style="position:absolute;left:1328.00px;top:12.00px;" width="22.00" height="20.00" viewBox="0 0 22 20"><g fill="none" stroke="#c9c9cf" stroke-width="2" stroke-linecap="round" stroke-linejoin="round"><path d="M10 17H4.5A2.5 2.5 0 0 1 2 14.5v-10A2.5 2.5 0 0 1 4.5 2h13A2.5 2.5 0 0 1 20 4.5V9"/><path d="M10.5 8.5l3 10 2-3.6 3.4 3.6 1.6-1.6-3.5-3.4 3.5-2z" fill="#c9c9cf" stroke="#c9c9cf" stroke-width=".8"/></g></svg>
<div style="position:absolute;left:1360.00px;top:7.00px;width:1.00px;height:27.00px;background:#2b2b30;"></div>
<svg style="position:absolute;left:1372.00px;top:10.00px;" width="22.00" height="22.00" viewBox="0 0 22 22"><g fill="none" stroke="#ffffff" stroke-width="2.2" stroke-linecap="round" stroke-linejoin="round"><rect x="5" y="5" width="12" height="12" rx="2.2"/><path d="M11 1.5V5M11 17v3.5M1.5 11H5M17 11h3.5"/></g></svg>
<span style='position:absolute;left:1401px;top:5px;font:400 62.53px/125px "Liberation Sans",sans-serif;color:#ffffff;white-space:pre;transform:translate(0.800px,0.065px) scale(.25);transform-origin:0 0;letter-spacing:1.619px;-webkit-text-stroke:0.64px currentColor;'>Analisi pagina</span>
<svg style="position:absolute;left:1526.50px;top:11.00px;" width="21.50" height="19.00" viewBox="0 0 21.5 19"><g fill="none" stroke="#b4b4bb" stroke-width="1.9" stroke-linecap="round" stroke-linejoin="round"><rect x="1.2" y="1.2" width="19" height="16.5" rx="2.6"/><path d="M6.2 6l3.6 3.5-3.6 3.5"/></g></svg>
<span style='position:absolute;left:1556px;top:5px;font:400 61.81px/124px "Liberation Sans",sans-serif;color:#b4b4bb;white-space:pre;transform:translate(0.300px,0.315px) scale(.25);transform-origin:0 0;letter-spacing:1.886px;-webkit-text-stroke:0.64px currentColor;'>Console</span>
<svg style="position:absolute;left:1637.00px;top:13.50px;" width="18.00" height="14.00" viewBox="0 0 18 14"><g fill="none" stroke="#d0d0d6" stroke-width="2.3" stroke-linecap="round" stroke-linejoin="round"><path d="M2 1.5l6 5.5-6 5.5M10 1.5l6 5.5-6 5.5"/></g></svg>
<svg style="position:absolute;left:1771.00px;top:11.50px;" width="21.00" height="19.00" viewBox="0 0 21 19"><g fill="none" stroke="#d0d0d6" stroke-width="1.9" stroke-linecap="round" stroke-linejoin="round"><rect x="1.2" y="1.2" width="18.6" height="16.4" rx="2.6"/><path d="M1.2 6.6h18.6M7.2 6.6v11"/></g></svg>
<div style="position:absolute;left:1806.00px;top:7.00px;width:1.00px;height:27.00px;background:#2b2b30;"></div>
<svg style="position:absolute;left:1820.00px;top:11.00px;" width="20.00" height="20.00" viewBox="0 0 20 20"><g fill="none" stroke="#d0d0d6" stroke-width="1.9" stroke-linecap="round" stroke-linejoin="round"><rect x="1.2" y="5" width="9" height="13.6" rx="2"/><path d="M6 5V3.4a2 2 0 0 1 2-2h8.6a2 2 0 0 1 2 2v13a2 2 0 0 1-2 2h-6.4"/></g></svg>
<div style="position:absolute;left:1855.90px;top:18.60px;width:4.20px;height:4.20px;background:#d0d0d6;border-radius:50%;"></div>
<div style="position:absolute;left:1863.40px;top:18.60px;width:4.20px;height:4.20px;background:#d0d0d6;border-radius:50%;"></div>
<div style="position:absolute;left:1870.90px;top:18.60px;width:4.20px;height:4.20px;background:#d0d0d6;border-radius:50%;"></div>
<svg style="position:absolute;left:1893.00px;top:13.50px;" width="14.00" height="14.00" viewBox="0 0 14 14"><g fill="none" stroke="#e0e0e6" stroke-width="2.2" stroke-linecap="round" stroke-linejoin="round"><path d="M1.5 1.5l11 11M12.5 1.5l-11 11"/></g></svg>
<div style="position:absolute;left:1316.00px;top:40.60px;width:604.00px;height:32.00px;background:#212125;"></div>
<div style="position:absolute;left:1316.00px;top:72.60px;width:604.00px;height:1.40px;background:#303035;"></div>
<svg style="position:absolute;left:1327.50px;top:49.00px;" width="17.00" height="17.00" viewBox="0 0 17 17"><g fill="none" stroke="#8f8f98" stroke-width="1.8" stroke-linecap="round" stroke-linejoin="round"><circle cx="6.6" cy="6.6" r="5"/><path d="M10.4 10.4l5.2 5.2"/></g></svg>
<span style='position:absolute;left:1348px;top:43px;font:400 57.17px/114px "Liberation Sans",sans-serif;color:#8f8f98;white-space:pre;transform:translate(0.000px,0.640px) scale(.25);transform-origin:0 0;letter-spacing:1.721px;-webkit-text-stroke:0.64px currentColor;'>Cerca in HTML</span>
<div style="position:absolute;left:1839.00px;top:47.00px;width:1.00px;height:22.00px;background:#3a3a3f;"></div>
<svg style="position:absolute;left:1851.00px;top:48.00px;" width="18.00" height="18.00" viewBox="0 0 18 18"><g fill="none" stroke="#d7d7db" stroke-width="1.9" stroke-linecap="round" stroke-linejoin="round"><path d="M9 1v16M1 9h16"/></g></svg>
<svg style="position:absolute;left:1888.00px;top:46.00px;" width="19.00" height="19.00" viewBox="0 0 19 19"><g fill="none" stroke="#c8c8ce" stroke-width="1.5" stroke-linecap="round" stroke-linejoin="round"><path d="M10.6 6.2L3 13.8c-.9.9-1.6 2.6-1.3 3.5.9.3 2.6-.4 3.5-1.3l7.6-7.6" stroke-width="1.5"/><path d="M9.4 4.6l5 5" stroke-width="2.2"/><path d="M11.6 5.4l2.2-2.6a2.3 2.3 0 0 1 3.4 0 2.3 2.3 0 0 1 0 3.4l-2.6 2.2z" fill="#c8c8ce" stroke-width="1"/></g></svg>
<div style="position:absolute;left:1316.00px;top:74.00px;width:584.00px;height:304.60px;background:#232327;overflow:hidden;"></div>
<div style="position:absolute;left:1900.00px;top:74.00px;width:20.00px;height:304.60px;background:#38383d;"></div>
<div style="position:absolute;left:1905.00px;top:84.00px;width:11.00px;height:32.00px;background:#77777c;border-radius:5.5px;"></div>
<div style="position:absolute;left:1316.00px;top:135.20px;width:584.00px;height:21.60px;background:#204e8a;"></div>
<div style="position:absolute;left:1373.80px;top:157.00px;width:1.90px;height:221.60px;background:#2d5da4;"></div>
<div style='position:absolute;left:1383px;top:71px;font:400 58.80px/118px "Liberation Mono",monospace;color:#d7d7db;white-space:pre;letter-spacing:0.000px;transform:translate(0.900px,0.665px) scale(.25);transform-origin:0 0;-webkit-text-stroke:1.20px currentColor;'><span style="color:#7bd45f">&lt;!----&gt;</span></div>
<svg style="position:absolute;left:1371.20px;top:101.30px;" width="8.00" height="11.00" viewBox="0 0 8 11"><path d="M0 0v11 l8 -5.5z" fill="#8f8f98"/></svg>
<div style='position:absolute;left:1383px;top:92px;font:400 58.80px/118px "Liberation Mono",monospace;color:#d7d7db;white-space:pre;letter-spacing:0.000px;transform:translate(0.900px,0.965px) scale(.25);transform-origin:0 0;-webkit-text-stroke:1.20px currentColor;'><span style="color:#c4c4cc">&lt;</span><span style="color:#86868d">div</span><span style="color:#c4c4cc"> id="bricks-notifications" class="" style="display:</span></div>
<div style='position:absolute;left:1383px;top:111px;font:400 58.80px/118px "Liberation Mono",monospace;color:#d7d7db;white-space:pre;letter-spacing:0.000px;transform:translate(0.900px,0.565px) scale(.25);transform-origin:0 0;-webkit-text-stroke:1.20px currentColor;'><span style="color:#c4c4cc">none;"&gt;</span><span style="display:inline-block;box-sizing:border-box;width:66.40px;height:44.00px;margin:0 14.40px 0 13.60px;border:4.00px solid #8a8a92;border-radius:14.00px;vertical-align:-2.40px;position:relative"><i style="position:absolute;left:10.40px;top:14.00px;width:8.80px;height:8.80px;border-radius:50%;background:#b8b8c0;box-shadow:16.00px 0 #b8b8c0,32.00px 0 #b8b8c0"></i></span><span style="color:#c4c4cc">&lt;/</span><span style="color:#86868d">div</span><span style="color:#c4c4cc">&gt;</span></div>
<svg style="position:absolute;left:1369.20px;top:143.10px;" width="11.00" height="8.00" viewBox="0 0 11 8"><path d="M0 0h11 l-5.5 8z" fill="#ffffff"/></svg>
<div style='position:absolute;left:1383px;top:132px;font:400 58.80px/118px "Liberation Mono",monospace;color:#d7d7db;white-space:pre;letter-spacing:0.000px;transform:translate(0.900px,0.965px) scale(.25);transform-origin:0 0;-webkit-text-stroke:1.20px currentColor;'><span style="color:#ffffff">&lt;div id="bricks-toolbar" class=""&gt;</span><span style="display:inline-block;width:12.00px"></span><span style="display:inline-block;box-sizing:border-box;height:69.60px;line-height:60.80px;font-size:46.80px;padding:0 21.60px;margin:0 12.00px;border:4.00px solid #9fb4d0;border-radius:26.00px;color:#e6ecf5;vertical-align:4.80px;letter-spacing:0">event</span><span style="display:inline-block;box-sizing:border-box;height:69.60px;line-height:60.80px;font-size:46.80px;padding:0 21.60px;margin:0 12.00px;border:4.00px solid #9fb4d0;border-radius:26.00px;color:#e6ecf5;vertical-align:4.80px;letter-spacing:0">flex</span></div>
<svg style="position:absolute;left:1386.00px;top:162.60px;" width="8.00" height="11.00" viewBox="0 0 8 11"><path d="M0 0v11 l8 -5.5z" fill="#8f8f98"/></svg>
<div style='position:absolute;left:1398px;top:154px;font:400 58.80px/118px "Liberation Mono",monospace;color:#d7d7db;white-space:pre;letter-spacing:0.000px;transform:translate(0.600px,0.265px) scale(.25);transform-origin:0 0;-webkit-text-stroke:1.20px currentColor;'><span style="color:#d7d7db">&lt;</span><span style="color:#75bfff">ul</span><span style="color:#d7d7db"> </span><span style="color:#ff7de9">class</span><span style="color:#d7d7db">="</span><span style="color:#b98eff">group-wrapper start</span><span style="color:#d7d7db">"</span><span style="color:#d7d7db">&gt;</span><span style="display:inline-block;box-sizing:border-box;width:66.40px;height:44.00px;margin:0 14.40px 0 13.60px;border:4.00px solid #8a8a92;border-radius:14.00px;vertical-align:-2.40px;position:relative"><i style="position:absolute;left:10.40px;top:14.00px;width:8.80px;height:8.80px;border-radius:50%;background:#b8b8c0;box-shadow:16.00px 0 #b8b8c0,32.00px 0 #b8b8c0"></i></span><span style="color:#d7d7db">&lt;/</span><span style="color:#75bfff">ul</span><span style="color:#d7d7db">&gt;</span><span style="display:inline-block;width:8.00px"></span><span style="display:inline-block;box-sizing:border-box;height:69.60px;line-height:60.80px;font-size:46.80px;padding:0 21.60px;margin:0 12.00px;border:4.00px solid #6d6d75;border-radius:26.00px;color:#c8c8cf;vertical-align:4.80px;letter-spacing:0">flex</span></div>
<svg style="position:absolute;left:1386.00px;top:183.90px;" width="8.00" height="11.00" viewBox="0 0 8 11"><path d="M0 0v11 l8 -5.5z" fill="#8f8f98"/></svg>
<div style='position:absolute;left:1398px;top:175px;font:400 58.80px/118px "Liberation Mono",monospace;color:#d7d7db;white-space:pre;letter-spacing:0.000px;transform:translate(0.600px,0.565px) scale(.25);transform-origin:0 0;-webkit-text-stroke:1.20px currentColor;'><span style="color:#d7d7db">&lt;</span><span style="color:#75bfff">ul</span><span style="color:#d7d7db"> </span><span style="color:#ff7de9">class</span><span style="color:#d7d7db">="</span><span style="color:#b98eff">group-wrapper breakpoints</span><span style="color:#d7d7db">"</span><span style="color:#d7d7db">&gt;</span><span style="display:inline-block;box-sizing:border-box;width:66.40px;height:44.00px;margin:0 14.40px 0 13.60px;border:4.00px solid #8a8a92;border-radius:14.00px;vertical-align:-2.40px;position:relative"><i style="position:absolute;left:10.40px;top:14.00px;width:8.80px;height:8.80px;border-radius:50%;background:#b8b8c0;box-shadow:16.00px 0 #b8b8c0,32.00px 0 #b8b8c0"></i></span><span style="color:#d7d7db">&lt;/</span><span style="color:#75bfff">ul</span><span style="color:#d7d7db">&gt;</span><span style="display:inline-block;width:12.00px"></span><span style="display:inline-block;box-sizing:border-box;height:69.60px;line-height:60.80px;font-size:46.80px;padding:0 21.60px;margin:0 12.00px;border:4.00px solid #6d6d75;border-radius:26.00px;color:#c8c8cf;vertical-align:4.80px;letter-spacing:0">flex</span></div>
<svg style="position:absolute;left:1384.00px;top:207.10px;" width="11.00" height="8.00" viewBox="0 0 11 8"><path d="M0 0h11 l-5.5 8z" fill="#8f8f98"/></svg>
<div style='position:absolute;left:1398px;top:196px;font:400 58.80px/118px "Liberation Mono",monospace;color:#d7d7db;white-space:pre;letter-spacing:0.000px;transform:translate(0.600px,0.965px) scale(.25);transform-origin:0 0;-webkit-text-stroke:1.20px currentColor;'><span style="color:#d7d7db">&lt;</span><span style="color:#75bfff">ul</span><span style="color:#d7d7db"> </span><span style="color:#ff7de9">class</span><span style="color:#d7d7db">="</span><span style="color:#b98eff">group-wrapper end</span><span style="color:#d7d7db">"</span><span style="color:#d7d7db">&gt;</span><span style="display:inline-block;width:12.00px"></span><span style="display:inline-block;box-sizing:border-box;height:69.60px;line-height:60.80px;font-size:46.80px;padding:0 21.60px;margin:0 12.00px;border:4.00px solid #6d6d75;border-radius:26.00px;color:#c8c8cf;vertical-align:4.80px;letter-spacing:0">flex</span></div>
<svg style="position:absolute;left:1401.10px;top:226.70px;" width="8.00" height="11.00" viewBox="0 0 8 11"><path d="M0 0v11 l8 -5.5z" fill="#8f8f98"/></svg>
<div style='position:absolute;left:1413px;top:218px;font:400 58.80px/118px "Liberation Mono",monospace;color:#d7d7db;white-space:pre;letter-spacing:0.000px;transform:translate(0.400px,0.365px) scale(.25);transform-origin:0 0;-webkit-text-stroke:1.20px currentColor;'><span style="color:#d7d7db">&lt;</span><span style="color:#75bfff">li</span><span style="color:#d7d7db"> </span><span style="color:#ff7de9">class</span><span style="color:#d7d7db">="</span><span style="color:#b98eff">undo disabled</span><span style="color:#d7d7db">"</span><span style="color:#d7d7db"> </span><span style="color:#ff7de9">data-balloon</span><span style="color:#d7d7db">="</span><span style="color:#b98eff">Annulla</span><span style="color:#d7d7db">"</span><span style="color:#d7d7db"> </span><span style="color:#ff7de9">data-</span></div>
<div style='position:absolute;left:1413px;top:237px;font:400 58.80px/118px "Liberation Mono",monospace;color:#d7d7db;white-space:pre;letter-spacing:0.000px;transform:translate(0.400px,0.065px) scale(.25);transform-origin:0 0;-webkit-text-stroke:1.20px currentColor;'><span style="color:#ff7de9">balloon-pos</span><span style="color:#d7d7db">="</span><span style="color:#b98eff">bottom</span><span style="color:#d7d7db">"</span><span style="color:#d7d7db"> </span><span style="color:#ff7de9">tabindex</span><span style="color:#d7d7db">="</span><span style="color:#b98eff">0</span><span style="color:#d7d7db">"</span><span style="color:#d7d7db">&gt;</span><span style="display:inline-block;box-sizing:border-box;width:66.40px;height:44.00px;margin:0 14.40px 0 13.60px;border:4.00px solid #8a8a92;border-radius:14.00px;vertical-align:-2.40px;position:relative"><i style="position:absolute;left:10.40px;top:14.00px;width:8.80px;height:8.80px;border-radius:50%;background:#b8b8c0;box-shadow:16.00px 0 #b8b8c0,32.00px 0 #b8b8c0"></i></span><span style="color:#d7d7db">&lt;/</span><span style="color:#75bfff">li</span><span style="color:#d7d7db">&gt;</span><span style="display:inline-block;width:12.00px"></span><span style="display:inline-block;box-sizing:border-box;height:69.60px;line-height:60.80px;font-size:46.80px;padding:0 21.60px;margin:0 12.00px;border:4.00px solid #6d6d75;border-radius:26.00px;color:#c8c8cf;vertical-align:4.80px;letter-spacing:0">event</span><span style="display:inline-block;box-sizing:border-box;height:69.60px;line-height:60.80px;font-size:46.80px;padding:0 21.60px;margin:0 12.00px;border:4.00px solid #6d6d75;border-radius:26.00px;color:#c8c8cf;vertical-align:4.80px;letter-spacing:0">flex</span></div>
<svg style="position:absolute;left:1401.10px;top:266.70px;" width="8.00" height="11.00" viewBox="0 0 8 11"><path d="M0 0v11 l8 -5.5z" fill="#8f8f98"/></svg>
<div style='position:absolute;left:1413px;top:258px;font:400 58.80px/118px "Liberation Mono",monospace;color:#d7d7db;white-space:pre;letter-spacing:0.000px;transform:translate(0.400px,0.365px) scale(.25);transform-origin:0 0;-webkit-text-stroke:1.20px currentColor;'><span style="color:#d7d7db">&lt;</span><span style="color:#75bfff">li</span><span style="color:#d7d7db"> </span><span style="color:#ff7de9">class</span><span style="color:#d7d7db">="</span><span style="color:#b98eff">redo disabled</span><span style="color:#d7d7db">"</span><span style="color:#d7d7db"> </span><span style="color:#ff7de9">data-balloon</span><span style="color:#d7d7db">="</span><span style="color:#b98eff">Ripeti</span><span style="color:#d7d7db">"</span><span style="color:#d7d7db"> </span><span style="color:#ff7de9">data-</span></div>
<div style='position:absolute;left:1413px;top:277px;font:400 58.80px/118px "Liberation Mono",monospace;color:#d7d7db;white-space:pre;letter-spacing:0.000px;transform:translate(0.400px,0.065px) scale(.25);transform-origin:0 0;-webkit-text-stroke:1.20px currentColor;'><span style="color:#ff7de9">balloon-pos</span><span style="color:#d7d7db">="</span><span style="color:#b98eff">bottom</span><span style="color:#d7d7db">"</span><span style="color:#d7d7db"> </span><span style="color:#ff7de9">tabindex</span><span style="color:#d7d7db">="</span><span style="color:#b98eff">0</span><span style="color:#d7d7db">"</span><span style="color:#d7d7db">&gt;</span><span style="display:inline-block;box-sizing:border-box;width:66.40px;height:44.00px;margin:0 14.40px 0 13.60px;border:4.00px solid #8a8a92;border-radius:14.00px;vertical-align:-2.40px;position:relative"><i style="position:absolute;left:10.40px;top:14.00px;width:8.80px;height:8.80px;border-radius:50%;background:#b8b8c0;box-shadow:16.00px 0 #b8b8c0,32.00px 0 #b8b8c0"></i></span><span style="color:#d7d7db">&lt;/</span><span style="color:#75bfff">li</span><span style="color:#d7d7db">&gt;</span><span style="display:inline-block;width:12.00px"></span><span style="display:inline-block;box-sizing:border-box;height:69.60px;line-height:60.80px;font-size:46.80px;padding:0 21.60px;margin:0 12.00px;border:4.00px solid #6d6d75;border-radius:26.00px;color:#c8c8cf;vertical-align:4.80px;letter-spacing:0">event</span><span style="display:inline-block;box-sizing:border-box;height:69.60px;line-height:60.80px;font-size:46.80px;padding:0 21.60px;margin:0 12.00px;border:4.00px solid #6d6d75;border-radius:26.00px;color:#c8c8cf;vertical-align:4.80px;letter-spacing:0">flex</span></div>
<svg style="position:absolute;left:1401.10px;top:306.70px;" width="8.00" height="11.00" viewBox="0 0 8 11"><path d="M0 0v11 l8 -5.5z" fill="#8f8f98"/></svg>
<div style='position:absolute;left:1413px;top:298px;font:400 58.80px/118px "Liberation Mono",monospace;color:#d7d7db;white-space:pre;letter-spacing:0.000px;transform:translate(0.400px,0.365px) scale(.25);transform-origin:0 0;-webkit-text-stroke:1.20px currentColor;'><span style="color:#d7d7db">&lt;</span><span style="color:#75bfff">li</span><span style="color:#d7d7db"> </span><span style="color:#ff7de9">class</span><span style="color:#d7d7db">="</span><span style="color:#b98eff">structure</span><span style="color:#d7d7db">"</span><span style="color:#d7d7db"> </span><span style="color:#ff7de9">data-balloon</span><span style="color:#d7d7db">="</span><span style="color:#b98eff">Struttura</span><span style="color:#d7d7db">"</span><span style="color:#d7d7db"> </span><span style="color:#ff7de9">data-</span></div>
<div style='position:absolute;left:1413px;top:317px;font:400 58.80px/118px "Liberation Mono",monospace;color:#d7d7db;white-space:pre;letter-spacing:0.000px;transform:translate(0.400px,0.065px) scale(.25);transform-origin:0 0;-webkit-text-stroke:1.20px currentColor;'><span style="color:#ff7de9">balloon-pos</span><span style="color:#d7d7db">="</span><span style="color:#b98eff">bottom</span><span style="color:#d7d7db">"</span><span style="color:#d7d7db"> </span><span style="color:#ff7de9">tabindex</span><span style="color:#d7d7db">="</span><span style="color:#b98eff">0</span><span style="color:#d7d7db">"</span><span style="color:#d7d7db">&gt;</span><span style="display:inline-block;box-sizing:border-box;width:66.40px;height:44.00px;margin:0 14.40px 0 13.60px;border:4.00px solid #8a8a92;border-radius:14.00px;vertical-align:-2.40px;position:relative"><i style="position:absolute;left:10.40px;top:14.00px;width:8.80px;height:8.80px;border-radius:50%;background:#b8b8c0;box-shadow:16.00px 0 #b8b8c0,32.00px 0 #b8b8c0"></i></span><span style="color:#d7d7db">&lt;/</span><span style="color:#75bfff">li</span><span style="color:#d7d7db">&gt;</span><span style="display:inline-block;width:12.00px"></span><span style="display:inline-block;box-sizing:border-box;height:69.60px;line-height:60.80px;font-size:46.80px;padding:0 21.60px;margin:0 12.00px;border:4.00px solid #6d6d75;border-radius:26.00px;color:#c8c8cf;vertical-align:4.80px;letter-spacing:0">event</span><span style="display:inline-block;box-sizing:border-box;height:69.60px;line-height:60.80px;font-size:46.80px;padding:0 21.60px;margin:0 12.00px;border:4.00px solid #6d6d75;border-radius:26.00px;color:#c8c8cf;vertical-align:4.80px;letter-spacing:0">flex</span></div>
<div style='position:absolute;left:1413px;top:338px;font:400 58.80px/118px "Liberation Mono",monospace;color:#d7d7db;white-space:pre;letter-spacing:0.000px;transform:translate(0.400px,0.165px) scale(.25);transform-origin:0 0;-webkit-text-stroke:1.20px currentColor;'><span style="color:#7bd45f">&lt;!----&gt;</span></div>
<div style="position:absolute;left:1316px;top:360px;width:584px;height:18.6px;overflow:hidden"><svg style="position:absolute;left:85.10px;top:7.90px;" width="8.00" height="11.00" viewBox="0 0 8 11"><path d="M0 0v11 l8 -5.5z" fill="#8f8f98"/></svg><div style='position:absolute;left:97px;top:-1px;font:400 58.80px/118px "Liberation Mono",monospace;color:#d7d7db;white-space:pre;letter-spacing:0.000px;transform:translate(0.400px,0.565px) scale(.25);transform-origin:0 0;-webkit-text-stroke:1.20px currentColor;'><span style="color:#d7d7db">&lt;</span><span style="color:#75bfff">li</span><span style="color:#d7d7db"> </span><span style="color:#ff7de9">class</span><span style="color:#d7d7db">="</span><span style="color:#b98eff">wordpress</span><span style="color:#d7d7db">"</span><span style="color:#d7d7db"> </span><span style="color:#ff7de9">data-balloon</span><span style="color:#d7d7db">="</span><span style="color:#b98eff">Modifica in</span></div></div>
<div style="position:absolute;left:1316.00px;top:378.60px;width:604.00px;height:34.40px;background:#212125;"></div>
<div style="position:absolute;left:1316.00px;top:378.60px;width:604.00px;height:1.00px;background:#26262b;"></div>
<div style="position:absolute;left:1316.00px;top:413.00px;width:604.00px;height:1.60px;background:#3a3a40;"></div>
<svg style="position:absolute;left:1326.00px;top:390.00px;" width="11.00" height="15.00" viewBox="0 0 11 15"><g fill="none" stroke="#d0d0d6" stroke-width="2.1" stroke-linecap="round" stroke-linejoin="round"><path d="M9.5 1.5L2 7.5l7.5 6"/></g></svg>
<div style="position:absolute;left:1346.00px;top:384.00px;width:1.00px;height:26.00px;background:#303036;"></div>
<span style='position:absolute;left:1350px;top:381px;font:400 62.00px/124px "Liberation Sans",sans-serif;color:#c8c8ce;white-space:pre;transform:translate(0.000px,0.715px) scale(.25);transform-origin:0 0;'>.</span>
<svg style="position:absolute;left:1361.70px;top:393.40px;" width="6.00" height="9.00" viewBox="0 0 6 9"><g fill="none" stroke="#77777f" stroke-width="1.5" stroke-linecap="round" stroke-linejoin="round"><path d="M1 1l3.6 3.5L1 8"/></g></svg>
<span style='position:absolute;left:1378px;top:382px;font:400 61.02px/122px "Liberation Sans",sans-serif;color:#e0e0e6;white-space:pre;transform:translate(0.700px,0.090px) scale(.25);transform-origin:0 0;letter-spacing:1.618px;-webkit-text-stroke:0.64px currentColor;'>div.brx-body.main</span>
<svg style="position:absolute;left:1513.80px;top:393.40px;" width="6.00" height="9.00" viewBox="0 0 6 9"><g fill="none" stroke="#77777f" stroke-width="1.5" stroke-linecap="round" stroke-linejoin="round"><path d="M1 1l3.6 3.5L1 8"/></g></svg>
<div style='position:absolute;left:1530px;top:381px;font:400 61.98px/124px "Liberation Sans",sans-serif;color:#d7d7db;white-space:pre;letter-spacing:1.571px;transform:translate(0.800px,0.715px) scale(.25);transform-origin:0 0;-webkit-text-stroke:0.64px currentColor;'><span style="color:#75bfff">div</span><span style="color:#b795f7">#bricks-toolbar</span></div>
<svg style="position:absolute;left:1669.50px;top:393.40px;" width="6.00" height="9.00" viewBox="0 0 6 9"><g fill="none" stroke="#77777f" stroke-width="1.5" stroke-linecap="round" stroke-linejoin="round"><path d="M1 1l3.6 3.5L1 8"/></g></svg>
<span style='position:absolute;left:1686px;top:382px;font:400 60.39px/121px "Liberation Sans",sans-serif;color:#e0e0e6;white-space:pre;transform:translate(0.000px,0.215px) scale(.25);transform-origin:0 0;letter-spacing:1.661px;-webkit-text-stroke:0.64px currentColor;'>ul.group-wrapper.end</span>
<svg style="position:absolute;left:1848.00px;top:393.40px;" width="6.00" height="9.00" viewBox="0 0 6 9"><g fill="none" stroke="#77777f" stroke-width="1.5" stroke-linecap="round" stroke-linejoin="round"><path d="M1 1l3.6 3.5L1 8"/></g></svg>
<div style="position:absolute;left:1860px;top:385px;width:27.4px;height:24px;overflow:hidden"><span style='position:absolute;left:3px;top:-3px;font:400 58.67px/117px "Liberation Sans",sans-serif;color:#e0e0e6;white-space:pre;transform:translate(0.700px,0.840px) scale(.25);transform-origin:0 0;letter-spacing:1.214px;-webkit-text-stroke:0.64px currentColor;'>li.sa</span></div>
<svg style="position:absolute;left:1896.50px;top:390.00px;" width="11.00" height="15.00" viewBox="0 0 11 15"><g fill="none" stroke="#77777f" stroke-width="2.1" stroke-linecap="round" stroke-linejoin="round"><path d="M1.5 1.5L9 7.5l-7.5 6"/></g></svg>
<div style="position:absolute;left:1316.00px;top:414.60px;width:303.00px;height:33.00px;background:#232327;"></div>
<div style="position:absolute;left:1316.00px;top:447.60px;width:303.00px;height:1.00px;background:#303036;"></div>
<div style="position:absolute;left:1316.00px;top:448.60px;width:303.00px;height:28.40px;background:#232327;"></div>
<div style="position:absolute;left:1316.00px;top:477.00px;width:284.00px;height:1.20px;background:#38383d;"></div>
<svg style="position:absolute;left:1329.50px;top:424.50px;" width="13.50" height="15.00" viewBox="0 0 13.5 15"><g fill="none" stroke="#8f8f98" stroke-width="1.6" stroke-linecap="round" stroke-linejoin="round"><path d="M1 1.2h11.5L8.2 6.6V13l-2.8-1.6V6.6z"/></g></svg>
<span style='position:absolute;left:1348px;top:416px;font:400 60.37px/121px "Liberation Sans",sans-serif;color:#8f8f98;white-space:pre;transform:translate(0.000px,0.315px) scale(.25);transform-origin:0 0;letter-spacing:1.155px;-webkit-text-stroke:0.64px currentColor;'>Filtra stili</span>
<span style='position:absolute;left:1324px;top:448px;font:700 56.23px/112px "Liberation Sans",sans-serif;color:#dcdce2;white-space:pre;transform:translate(0.000px,0.515px) scale(.25);transform-origin:0 0;letter-spacing:1.727px;-webkit-text-stroke:0.64px currentColor;'>:hov</span>
<span style='position:absolute;left:1364px;top:448px;font:700 57.11px/114px "Liberation Sans",sans-serif;color:#dcdce2;white-space:pre;transform:translate(0.500px,0.140px) scale(.25);transform-origin:0 0;letter-spacing:1.386px;-webkit-text-stroke:0.64px currentColor;'>.cls</span>
<svg style="position:absolute;left:1406.50px;top:453.50px;" width="16.00" height="16.00" viewBox="0 0 16 16"><g fill="none" stroke="#dcdce2" stroke-width="2" stroke-linecap="round" stroke-linejoin="round"><path d="M8 1v14M1 8h14"/></g></svg>
<svg style="position:absolute;left:1441.50px;top:451.00px;" width="21.00" height="21.00" viewBox="0 0 21 21"><g fill="none" stroke="#dcdce2" stroke-width="1.8" stroke-linecap="round" stroke-linejoin="round"><circle cx="10.5" cy="10.5" r="4.6" fill="#dcdce2"/><path d="M10.5 1v2.6M10.5 17.4V20M1 10.5h2.6M17.4 10.5H20M3.8 3.8l1.8 1.8M15.4 15.4l1.8 1.8M3.8 17.2l1.8-1.8M15.4 5.6l1.8-1.8"/></g></svg>
<svg style="position:absolute;left:1479.50px;top:451.50px;" width="20.00" height="20.00" viewBox="0 0 20 20"><g fill="none" stroke="#dcdce2" stroke-width="1.8" stroke-linecap="round" stroke-linejoin="round"><circle cx="10" cy="10" r="8.4"/><path d="M10 1.6a8.4 8.4 0 0 0 0 16.8a10 10 0 0 1 0-16.8z" fill="#dcdce2"/></g></svg>
<svg style="position:absolute;left:1518.50px;top:451.50px;" width="17.00" height="20.00" viewBox="0 0 17 20"><g fill="none" stroke="#dcdce2" stroke-width="1.9" stroke-linecap="round" stroke-linejoin="round"><path d="M3.4 1.2h7l5.2 5.2v10a2.2 2.2 0 0 1-2.2 2.2h-10a2.2 2.2 0 0 1-2.2-2.2v-13a2.2 2.2 0 0 1 2.2-2.2z"/><path d="M5 9h7M5 12h7M5 15h4.5"/></g></svg>
<div style="position:absolute;left:1600.00px;top:478.20px;width:19.00px;height:573.80px;background:#38383d;"></div>
<div style="position:absolute;left:1605.40px;top:479.40px;width:10.80px;height:31.00px;background:#77777c;border-radius:5.4px;"></div>
<div style="position:absolute;left:1619.00px;top:414.60px;width:1.20px;height:637.40px;background:#0c0c0d;"></div>
<div style="position:absolute;left:1316.00px;top:478.20px;width:284.00px;height:29.40px;background:#232327;"></div>
<div style="position:absolute;left:1316.00px;top:507.60px;width:284.00px;height:1.40px;background:#38383d;"></div>
<svg style="position:absolute;left:1328.00px;top:487.90px;" width="8.00" height="11.00" viewBox="0 0 8 11"><path d="M0 0v11 l8 -5.5z" fill="#8f8f98"/></svg>
<span style='position:absolute;left:1344px;top:477px;font:400 63.77px/128px "Liberation Sans",sans-serif;color:#d7d7db;white-space:pre;transform:translate(0.400px,0.290px) scale(.25);transform-origin:0 0;letter-spacing:1.857px;-webkit-text-stroke:0.64px currentColor;'>Pseudo-elementi</span>
<div style="position:absolute;left:1316.00px;top:509.00px;width:284.00px;height:32.60px;background:#232327;"></div>
<span style='position:absolute;left:1323px;top:509px;font:400 63.03px/126px "Liberation Sans",sans-serif;color:#d7d7db;white-space:pre;transform:translate(0.000px,0.840px) scale(.25);transform-origin:0 0;letter-spacing:1.863px;-webkit-text-stroke:0.64px currentColor;'>Questo elemento</span>
<div style="position:absolute;left:1316.00px;top:541.60px;width:284.00px;height:510.40px;background:#18181a;"></div>
<div style="position:absolute;left:1316.00px;top:586.60px;width:284.00px;height:1.20px;background:#303036;"></div>
<div style="position:absolute;left:1316.00px;top:1028.60px;width:284.00px;height:1.20px;background:#303036;"></div>
<div style='position:absolute;left:1322px;top:540px;font:400 58.80px/118px "Liberation Mono",monospace;color:#d7d7db;white-space:pre;letter-spacing:0.000px;transform:translate(0.800px,0.865px) scale(.25);transform-origin:0 0;-webkit-text-stroke:1.20px currentColor;'><span style="color:#d7d7db">elemento</span><span style="display:inline-block;width:57.00px;height:57.00px;margin:0 38.40px 0 45.60px;vertical-align:-10.40px;background:radial-gradient(circle at 50% 50%,#a0a0a8 4.60px,transparent 6.80px) 0 0/19.00px 19.00px"></span><span style="color:#d7d7db">{</span></div>
<div style='position:absolute;left:1541px;top:540px;font:400 58.80px/118px "Liberation Mono",monospace;color:#d7d7db;white-space:pre;letter-spacing:0.000px;transform:translate(0.071px,0.865px) scale(.25);transform-origin:0 0;-webkit-text-stroke:1.20px currentColor;'><span style="color:#c4c4cc">inline</span></div>
<div style='position:absolute;left:1322px;top:559px;font:400 58.80px/118px "Liberation Mono",monospace;color:#d7d7db;white-space:pre;letter-spacing:0.000px;transform:translate(0.800px,0.965px) scale(.25);transform-origin:0 0;-webkit-text-stroke:1.20px currentColor;'><span style="color:#d7d7db">}</span></div>
<div style='position:absolute;left:1322px;top:586px;font:400 58.80px/118px "Liberation Mono",monospace;color:#d7d7db;white-space:pre;letter-spacing:0.000px;transform:translate(0.800px,0.165px) scale(.25);transform-origin:0 0;-webkit-text-stroke:1.20px currentColor;'><span style="color:#d7d7db">#bricks-</span></div>
<div style='position:absolute;left:1444px;top:586px;font:400 58.80px/118px "Liberation Mono",monospace;color:#d7d7db;white-space:pre;letter-spacing:0.000px;transform:translate(0.035px,0.165px) scale(.25);transform-origin:0 0;-webkit-text-stroke:1.20px currentColor;'><span style="color:#6db4f2;text-decoration:underline;text-decoration-thickness:5.20px;text-underline-offset:8.80px">builder.min.css:1</span></div>
<div style='position:absolute;left:1322px;top:604px;font:400 58.80px/118px "Liberation Mono",monospace;color:#d7d7db;white-space:pre;letter-spacing:0.000px;transform:translate(0.800px,0.965px) scale(.25);transform-origin:0 0;-webkit-text-stroke:1.20px currentColor;'><span style="color:#d7d7db">toolbar</span><span style="display:inline-block;width:57.00px;height:57.00px;margin:0 45.60px 0 39.60px;vertical-align:-10.40px;background:radial-gradient(circle at 50% 50%,#a0a0a8 4.60px,transparent 6.80px) 0 0/19.00px 19.00px"></span><span style="color:#d7d7db">{</span></div>
<div style='position:absolute;left:1359px;top:625px;font:400 58.80px/118px "Liberation Mono",monospace;color:#d7d7db;white-space:pre;letter-spacing:0.000px;transform:translate(0.200px,0.365px) scale(.25);transform-origin:0 0;-webkit-text-stroke:1.20px currentColor;'><span style="color:#75bfff">background-color</span><span style="color:#d7d7db">:</span><span style="color:#d7d7db"> </span><span style="display:inline-block;box-sizing:border-box;width:65.60px;height:65.60px;border-radius:50%;background:#161a1d;border:5.60px solid #8a8a92;vertical-align:-14.40px;margin:0 20.80px 0 -6.40px"></span></div>
<div style='position:absolute;left:1374px;top:644px;font:400 58.80px/118px "Liberation Mono",monospace;color:#d7d7db;white-space:pre;letter-spacing:0.000px;transform:translate(0.000px,0.295px) scale(.25);transform-origin:0 0;-webkit-text-stroke:1.20px currentColor;'><span style="color:#ff7de9">var(</span><span style="color:#75bfff">--builder-bg</span><span style="color:#ff7de9">)</span><span style="color:#d7d7db">;</span></div>
<div style='position:absolute;left:1359px;top:663px;font:400 58.80px/118px "Liberation Mono",monospace;color:#d7d7db;white-space:pre;letter-spacing:0.000px;transform:translate(0.200px,0.225px) scale(.25);transform-origin:0 0;-webkit-text-stroke:1.20px currentColor;'><span style="color:#75bfff">border-bottom</span><span style="color:#d7d7db">:</span><span style="color:#d7d7db"> </span><span style="color:#ff7de9">1px solid</span></div>
<div style='position:absolute;left:1374px;top:682px;font:400 58.80px/118px "Liberation Mono",monospace;color:#d7d7db;white-space:pre;letter-spacing:0.000px;transform:translate(0.000px,0.155px) scale(.25);transform-origin:0 0;-webkit-text-stroke:1.20px currentColor;'><span style="display:inline-block;box-sizing:border-box;width:65.60px;height:65.60px;border-radius:50%;background:#4b5059;border:5.60px solid #85858d;vertical-align:-14.40px;margin:0 22.40px 0 -7.20px"></span><span style="color:#ff7de9">var(</span><span style="color:#75bfff">--builder-border-</span></div>
<div style='position:absolute;left:1374px;top:701px;font:400 58.80px/118px "Liberation Mono",monospace;color:#d7d7db;white-space:pre;letter-spacing:0.000px;transform:translate(0.000px,0.085px) scale(.25);transform-origin:0 0;-webkit-text-stroke:1.20px currentColor;'><span style="color:#75bfff">color</span><span style="color:#ff7de9">)</span><span style="color:#d7d7db">;</span></div>
<div style='position:absolute;left:1359px;top:720px;font:400 58.80px/118px "Liberation Mono",monospace;color:#d7d7db;white-space:pre;letter-spacing:0.000px;transform:translate(0.200px,0.015px) scale(.25);transform-origin:0 0;-webkit-text-stroke:1.20px currentColor;'><span style="color:#75bfff">color</span><span style="color:#d7d7db">:</span><span style="color:#d7d7db"> </span><span style="display:inline-block;box-sizing:border-box;width:65.60px;height:65.60px;border-radius:50%;background:#e2e6e9;border:5.60px solid #f4f4f6;vertical-align:-14.40px;margin:0 22.40px 0 -8.00px"></span><span style="color:#ff7de9">var(</span><span style="color:#75bfff">--builder-</span></div>
<div style='position:absolute;left:1374px;top:738px;font:400 58.80px/118px "Liberation Mono",monospace;color:#d7d7db;white-space:pre;letter-spacing:0.000px;transform:translate(0.000px,0.945px) scale(.25);transform-origin:0 0;-webkit-text-stroke:1.20px currentColor;'><span style="color:#75bfff">color</span><span style="color:#ff7de9">)</span><span style="color:#d7d7db">;</span></div>
<div style='position:absolute;left:1359px;top:757px;font:400 58.80px/118px "Liberation Mono",monospace;color:#d7d7db;white-space:pre;letter-spacing:0.000px;transform:translate(0.200px,0.875px) scale(.25);transform-origin:0 0;-webkit-text-stroke:1.20px currentColor;'><span style="color:#75bfff">display</span><span style="color:#d7d7db">:</span><span style="color:#d7d7db"> </span><span style="display:inline-block;box-sizing:border-box;width:68.00px;height:57.60px;margin:0 0 0 -4.00px;vertical-align:-9.60px;border:5.20px dotted #b4b4bc;position:relative"><i style="position:absolute;left:8.80px;top:10.40px;right:8.80px;bottom:10.40px;border:4.80px solid #d0d0d6;"></i><i style="position:absolute;left:26.40px;top:10.40px;bottom:10.40px;width:4.80px;background:#d0d0d6"></i></span><span style="color:#ff7de9"> flex</span><span style="color:#d7d7db">;</span></div>
<div style='position:absolute;left:1359px;top:776px;font:400 58.80px/118px "Liberation Mono",monospace;color:#d7d7db;white-space:pre;letter-spacing:0.000px;transform:translate(0.200px,0.805px) scale(.25);transform-origin:0 0;-webkit-text-stroke:1.20px currentColor;'><span style="color:#75bfff">font-size</span><span style="color:#d7d7db">:</span><span style="color:#d7d7db"> </span><span style="color:#ff7de9">16px</span><span style="color:#d7d7db">;</span></div>
<div style='position:absolute;left:1359px;top:795px;font:400 58.80px/118px "Liberation Mono",monospace;color:#d7d7db;white-space:pre;letter-spacing:0.000px;transform:translate(0.200px,0.735px) scale(.25);transform-origin:0 0;-webkit-text-stroke:1.20px currentColor;'><span style="color:#75bfff">height</span><span style="color:#d7d7db">:</span><span style="color:#d7d7db"> </span><span style="color:#ff7de9">var(</span><span style="color:#75bfff">--builder-</span></div>
<div style='position:absolute;left:1374px;top:814px;font:400 58.80px/118px "Liberation Mono",monospace;color:#d7d7db;white-space:pre;letter-spacing:0.000px;transform:translate(0.000px,0.665px) scale(.25);transform-origin:0 0;-webkit-text-stroke:1.20px currentColor;'><span style="color:#75bfff">toolbar-height</span><span style="color:#ff7de9">)</span><span style="color:#d7d7db">;</span></div>
<div style='position:absolute;left:1359px;top:833px;font:400 58.80px/118px "Liberation Mono",monospace;color:#d7d7db;white-space:pre;letter-spacing:0.000px;transform:translate(0.200px,0.595px) scale(.25);transform-origin:0 0;-webkit-text-stroke:1.20px currentColor;'><span style="color:#75bfff">justify-content</span><span style="color:#d7d7db">:</span><span style="color:#d7d7db"> </span><span style="color:#ff7de9">space-</span></div>
<div style='position:absolute;left:1374px;top:852px;font:400 58.80px/118px "Liberation Mono",monospace;color:#d7d7db;white-space:pre;letter-spacing:0.000px;transform:translate(0.000px,0.525px) scale(.25);transform-origin:0 0;-webkit-text-stroke:1.20px currentColor;'><span style="color:#ff7de9">between</span><span style="color:#d7d7db">;</span></div>
<div style='position:absolute;left:1359px;top:871px;font:400 58.80px/118px "Liberation Mono",monospace;color:#d7d7db;white-space:pre;letter-spacing:0.000px;transform:translate(0.200px,0.455px) scale(.25);transform-origin:0 0;-webkit-text-stroke:1.20px currentColor;'><span style="color:#75bfff">position</span><span style="color:#d7d7db">:</span><span style="color:#d7d7db"> </span><span style="color:#ff7de9">fixed</span><span style="color:#d7d7db">;</span></div>
<div style='position:absolute;left:1359px;top:890px;font:400 58.80px/118px "Liberation Mono",monospace;color:#d7d7db;white-space:pre;letter-spacing:0.000px;transform:translate(0.200px,0.385px) scale(.25);transform-origin:0 0;-webkit-text-stroke:1.20px currentColor;'><span style="color:#75bfff">scrollbar-width</span><span style="color:#d7d7db">:</span><span style="color:#d7d7db"> </span><span style="color:#ff7de9">none</span><span style="color:#d7d7db">;</span></div>
<div style='position:absolute;left:1359px;top:909px;font:400 58.80px/118px "Liberation Mono",monospace;color:#d7d7db;white-space:pre;letter-spacing:0.000px;transform:translate(0.200px,0.315px) scale(.25);transform-origin:0 0;-webkit-text-stroke:1.20px currentColor;'><span style="color:#75bfff">text-align</span><span style="color:#d7d7db">:</span><span style="color:#d7d7db"> </span><span style="color:#ff7de9">center</span><span style="color:#d7d7db">;</span></div>
<div style='position:absolute;left:1359px;top:928px;font:400 58.80px/118px "Liberation Mono",monospace;color:#d7d7db;white-space:pre;letter-spacing:0.000px;transform:translate(0.200px,0.245px) scale(.25);transform-origin:0 0;-webkit-text-stroke:1.20px currentColor;'><span style="color:#75bfff">top</span><span style="color:#d7d7db">:</span><span style="color:#d7d7db"> </span><span style="color:#ff7de9">0</span><span style="color:#d7d7db">;</span></div>
<div style='position:absolute;left:1359px;top:947px;font:400 58.80px/118px "Liberation Mono",monospace;color:#d7d7db;white-space:pre;letter-spacing:0.000px;transform:translate(0.200px,0.175px) scale(.25);transform-origin:0 0;-webkit-text-stroke:1.20px currentColor;'><span style="color:#75bfff">width</span><span style="color:#d7d7db">:</span><span style="color:#d7d7db"> </span><span style="color:#ff7de9">100%</span><span style="color:#d7d7db">;</span></div>
<div style='position:absolute;left:1359px;top:966px;font:400 58.80px/118px "Liberation Mono",monospace;color:#d7d7db;white-space:pre;letter-spacing:0.000px;transform:translate(0.200px,0.105px) scale(.25);transform-origin:0 0;-webkit-text-stroke:1.20px currentColor;'><span style="color:#75bfff">z-index</span><span style="color:#d7d7db">:</span><span style="color:#d7d7db"> </span><span style="color:#ff7de9">3002</span><span style="color:#d7d7db">;</span></div>
<div style='position:absolute;left:1359px;top:985px;font:400 58.80px/118px "Liberation Mono",monospace;color:#d7d7db;white-space:pre;letter-spacing:0.000px;transform:translate(0.200px,0.035px) scale(.25);transform-origin:0 0;-webkit-text-stroke:1.20px currentColor;'><span style="color:#75bfff">left</span><span style="color:#d7d7db">:</span><span style="color:#d7d7db"> </span><span style="color:#ff7de9">0</span><span style="color:#d7d7db">;</span></div>
<div style="position:absolute;left:1322.00px;top:990.00px;width:4.60px;height:18.80px;background:#86de74;"></div>
<div style='position:absolute;left:1322px;top:1003px;font:400 58.80px/118px "Liberation Mono",monospace;color:#d7d7db;white-space:pre;letter-spacing:0.000px;transform:translate(0.800px,0.565px) scale(.25);transform-origin:0 0;-webkit-text-stroke:1.20px currentColor;'><span style="color:#d7d7db">}</span></div>
<div style='position:absolute;left:1322px;top:1028px;font:400 58.80px/118px "Liberation Mono",monospace;color:#d7d7db;white-space:pre;letter-spacing:0.000px;transform:translate(0.800px,0.165px) scale(.25);transform-origin:0 0;-webkit-text-stroke:1.20px currentColor;'><span style="color:#d7d7db">.brx-</span></div>
<div style='position:absolute;left:1444px;top:1028px;font:400 58.80px/118px "Liberation Mono",monospace;color:#d7d7db;white-space:pre;letter-spacing:0.000px;transform:translate(0.035px,0.165px) scale(.25);transform-origin:0 0;-webkit-text-stroke:1.20px currentColor;'><span style="color:#6db4f2;text-decoration:underline;text-decoration-thickness:5.20px;text-underline-offset:8.80px">builder.min.css:1</span></div>
<div style="position:absolute;left:1620.20px;top:414.60px;width:299.80px;height:33.00px;background:#0c0c0d;"></div>
<div style="position:absolute;left:1737.80px;top:413.40px;width:99.40px;height:2.80px;background:#3a8cf0;"></div>
<div style="position:absolute;left:1620.20px;top:447.60px;width:299.80px;height:1.00px;background:#26262b;"></div>
<svg style="position:absolute;left:1629.50px;top:423.00px;" width="19.00" height="16.50" viewBox="0 0 19 16.5"><g fill="none" stroke="#c8c8ce" stroke-width="1.7" stroke-linecap="round" stroke-linejoin="round"><rect x="1" y="1" width="17" height="14.5" rx="1"/><path d="M13.4 1v14.5"/><path d="M5 4.6l5 3.6-5 3.6z" fill="#c8c8ce" stroke-width=".6"/></g></svg>
<span style='position:absolute;left:1672px;top:415px;font:400 61.69px/123px "Liberation Sans",sans-serif;color:#b4b4bb;white-space:pre;transform:translate(0.500px,0.940px) scale(.25);transform-origin:0 0;letter-spacing:1.797px;-webkit-text-stroke:0.64px currentColor;'>Layout</span>
<span style='position:absolute;left:1752px;top:415px;font:400 63.47px/127px "Liberation Sans",sans-serif;color:#ffffff;white-space:pre;transform:translate(0.000px,0.315px) scale(.25);transform-origin:0 0;letter-spacing:1.711px;-webkit-text-stroke:0.64px currentColor;'>Calcolate</span>
<div style="position:absolute;left:1850px;top:418px;width:49.6px;height:28px;overflow:hidden"><span style='position:absolute;left:2px;top:-3px;font:400 63.59px/127px "Liberation Sans",sans-serif;color:#b4b4bb;white-space:pre;transform:translate(0.000px,0.190px) scale(.25);transform-origin:0 0;letter-spacing:1.760px;-webkit-text-stroke:0.64px currentColor;'>Modifiche</span></div>
<div style="position:absolute;left:1900.00px;top:418.00px;width:1.00px;height:27.00px;background:#26262b;"></div>
<svg style="position:absolute;left:1905.00px;top:427.00px;" width="12.00" height="7.00" viewBox="0 0 12 7"><path d="M0 0h12L6 7z" fill="#c8c8ce"/></svg>
<div style="position:absolute;left:1620.20px;top:448.60px;width:299.80px;height:30.40px;background:#232327;"></div>
<div style="position:absolute;left:1620.20px;top:479.40px;width:299.80px;height:1.40px;background:#303036;"></div>
<svg style="position:absolute;left:1632.00px;top:457.00px;" width="13.50" height="15.00" viewBox="0 0 13.5 15"><g fill="none" stroke="#8f8f98" stroke-width="1.6" stroke-linecap="round" stroke-linejoin="round"><path d="M1 1.2h11.5L8.2 6.6V13l-2.8-1.6V6.6z"/></g></svg>
<span style='position:absolute;left:1651px;top:450px;font:400 59.99px/120px "Liberation Sans",sans-serif;color:#8f8f98;white-space:pre;transform:translate(0.000px,0.165px) scale(.25);transform-origin:0 0;letter-spacing:1.148px;-webkit-text-stroke:0.64px currentColor;'>Filtra stili</span>
<div style="position:absolute;left:1795.00px;top:454.00px;width:1.00px;height:22.00px;background:#3a3a3f;"></div>
<div style="position:absolute;left:1804.00px;top:455.00px;width:18.60px;height:18.60px;box-sizing:border-box;border:1.5px solid #8f8f98;border-radius:2.5px;"></div>
<span style='position:absolute;left:1830px;top:450px;font:400 58.73px/117px "Liberation Sans",sans-serif;color:#d7d7db;white-space:pre;transform:translate(0.000px,0.540px) scale(.25);transform-origin:0 0;letter-spacing:1.194px;-webkit-text-stroke:0.64px currentColor;'>Stili del b...</span>
<div style="position:absolute;left:1900.00px;top:480.80px;width:20.00px;height:571.20px;background:#38383d;"></div>
<div style="position:absolute;left:1906.00px;top:482.50px;width:10.60px;height:31.50px;background:#77777c;border-radius:5.3px;"></div>
<div style="position:absolute;left:1620.20px;top:480.90px;width:279.80px;height:61.00px;background:#18181a;"></div>
<svg style="position:absolute;left:1632.00px;top:487.40px;" width="9.00" height="12.00" viewBox="0 0 9 12"><path d="M0 0v12 l9 -6z" fill="#8a8a92"/></svg>
<div style='position:absolute;left:1627px;top:498px;font:400 58.80px/118px "Liberation Mono",monospace;color:#d7d7db;white-space:pre;letter-spacing:0.000px;transform:translate(0.100px,0.765px) scale(.25);transform-origin:0 0;-webkit-text-stroke:1.20px currentColor;'><span style="color:#75bfff">background-color</span></div>
<div style='position:absolute;left:1645px;top:516px;font:400 58.80px/118px "Liberation Mono",monospace;color:#d7d7db;white-space:pre;letter-spacing:0.000px;transform:translate(0.700px,0.865px) scale(.25);transform-origin:0 0;-webkit-text-stroke:1.20px currentColor;'><span style="display:inline-block;box-sizing:border-box;width:65.60px;height:65.60px;border-radius:50%;background:#161a1d;border:5.60px solid #aaaab2;vertical-align:-14.40px;margin:0 25.60px 0 -7.20px"></span><span style="color:#ff7de9">rgb(22, 26, 29)</span></div>
<div style="position:absolute;left:1620.20px;top:541.90px;width:279.80px;height:61.00px;background:#232327;"></div>
<svg style="position:absolute;left:1632.00px;top:548.40px;" width="9.00" height="12.00" viewBox="0 0 9 12"><path d="M0 0v12 l9 -6z" fill="#8a8a92"/></svg>
<div style='position:absolute;left:1627px;top:559px;font:400 58.80px/118px "Liberation Mono",monospace;color:#d7d7db;white-space:pre;letter-spacing:0.000px;transform:translate(0.100px,0.765px) scale(.25);transform-origin:0 0;-webkit-text-stroke:1.20px currentColor;'><span style="color:#75bfff">box-sizing</span></div>
<div style='position:absolute;left:1645px;top:577px;font:400 58.80px/118px "Liberation Mono",monospace;color:#d7d7db;white-space:pre;letter-spacing:0.000px;transform:translate(0.700px,0.865px) scale(.25);transform-origin:0 0;-webkit-text-stroke:1.20px currentColor;'><span style="color:#ff7de9">border-box</span></div>
<div style="position:absolute;left:1620.20px;top:602.90px;width:279.80px;height:61.00px;background:#18181a;"></div>
<svg style="position:absolute;left:1632.00px;top:609.40px;" width="9.00" height="12.00" viewBox="0 0 9 12"><path d="M0 0v12 l9 -6z" fill="#8a8a92"/></svg>
<div style='position:absolute;left:1627px;top:620px;font:400 58.80px/118px "Liberation Mono",monospace;color:#d7d7db;white-space:pre;letter-spacing:0.000px;transform:translate(0.100px,0.765px) scale(.25);transform-origin:0 0;-webkit-text-stroke:1.20px currentColor;'><span style="color:#75bfff">color</span></div>
<div style='position:absolute;left:1645px;top:638px;font:400 58.80px/118px "Liberation Mono",monospace;color:#d7d7db;white-space:pre;letter-spacing:0.000px;transform:translate(0.700px,0.865px) scale(.25);transform-origin:0 0;-webkit-text-stroke:1.20px currentColor;'><span style="display:inline-block;box-sizing:border-box;width:65.60px;height:65.60px;border-radius:50%;background:#e2e6e9;border:5.60px solid #f4f4f6;vertical-align:-14.40px;margin:0 25.60px 0 -7.20px"></span><span style="color:#ff7de9">rgb(226, 230, 233)</span></div>
<div style="position:absolute;left:1620.20px;top:663.90px;width:279.80px;height:61.00px;background:#232327;"></div>
<svg style="position:absolute;left:1632.00px;top:670.40px;" width="9.00" height="12.00" viewBox="0 0 9 12"><path d="M0 0v12 l9 -6z" fill="#8a8a92"/></svg>
<div style='position:absolute;left:1627px;top:681px;font:400 58.80px/118px "Liberation Mono",monospace;color:#d7d7db;white-space:pre;letter-spacing:0.000px;transform:translate(0.100px,0.765px) scale(.25);transform-origin:0 0;-webkit-text-stroke:1.20px currentColor;'><span style="color:#75bfff">display</span></div>
<div style='position:absolute;left:1645px;top:699px;font:400 58.80px/118px "Liberation Mono",monospace;color:#d7d7db;white-space:pre;letter-spacing:0.000px;transform:translate(0.700px,0.865px) scale(.25);transform-origin:0 0;-webkit-text-stroke:1.20px currentColor;'><span style="color:#ff7de9">flex</span></div>
<div style="position:absolute;left:1620.20px;top:724.90px;width:279.80px;height:61.00px;background:#18181a;"></div>
<svg style="position:absolute;left:1632.00px;top:731.40px;" width="9.00" height="12.00" viewBox="0 0 9 12"><path d="M0 0v12 l9 -6z" fill="#8a8a92"/></svg>
<div style='position:absolute;left:1627px;top:742px;font:400 58.80px/118px "Liberation Mono",monospace;color:#d7d7db;white-space:pre;letter-spacing:0.000px;transform:translate(0.100px,0.765px) scale(.25);transform-origin:0 0;-webkit-text-stroke:1.20px currentColor;'><span style="color:#75bfff">font-family</span></div>
<div style='position:absolute;left:1645px;top:760px;font:400 58.80px/118px "Liberation Mono",monospace;color:#d7d7db;white-space:pre;letter-spacing:0.000px;transform:translate(0.700px,0.865px) scale(.25);transform-origin:0 0;-webkit-text-stroke:1.20px currentColor;'><span style="color:#ff7de9">"Roboto"</span></div>
<div style="position:absolute;left:1620.20px;top:785.90px;width:279.80px;height:61.00px;background:#232327;"></div>
<svg style="position:absolute;left:1632.00px;top:792.40px;" width="9.00" height="12.00" viewBox="0 0 9 12"><path d="M0 0v12 l9 -6z" fill="#8a8a92"/></svg>
<div style='position:absolute;left:1627px;top:803px;font:400 58.80px/118px "Liberation Mono",monospace;color:#d7d7db;white-space:pre;letter-spacing:0.000px;transform:translate(0.100px,0.765px) scale(.25);transform-origin:0 0;-webkit-text-stroke:1.20px currentColor;'><span style="color:#75bfff">font-size</span></div>
<div style='position:absolute;left:1645px;top:821px;font:400 58.80px/118px "Liberation Mono",monospace;color:#d7d7db;white-space:pre;letter-spacing:0.000px;transform:translate(0.700px,0.865px) scale(.25);transform-origin:0 0;-webkit-text-stroke:1.20px currentColor;'><span style="color:#ff7de9">16px</span></div>
<div style="position:absolute;left:1620.20px;top:846.90px;width:279.80px;height:61.00px;background:#18181a;"></div>
<svg style="position:absolute;left:1632.00px;top:853.40px;" width="9.00" height="12.00" viewBox="0 0 9 12"><path d="M0 0v12 l9 -6z" fill="#8a8a92"/></svg>
<div style='position:absolute;left:1627px;top:864px;font:400 58.80px/118px "Liberation Mono",monospace;color:#d7d7db;white-space:pre;letter-spacing:0.000px;transform:translate(0.100px,0.765px) scale(.25);transform-origin:0 0;-webkit-text-stroke:1.20px currentColor;'><span style="color:#75bfff">font-weight</span></div>
<div style='position:absolute;left:1645px;top:882px;font:400 58.80px/118px "Liberation Mono",monospace;color:#d7d7db;white-space:pre;letter-spacing:0.000px;transform:translate(0.700px,0.865px) scale(.25);transform-origin:0 0;-webkit-text-stroke:1.20px currentColor;'><span style="color:#ff7de9">400</span></div>
<div style="position:absolute;left:1620.20px;top:907.90px;width:279.80px;height:61.00px;background:#232327;"></div>
<svg style="position:absolute;left:1632.00px;top:914.40px;" width="9.00" height="12.00" viewBox="0 0 9 12"><path d="M0 0v12 l9 -6z" fill="#8a8a92"/></svg>
<div style='position:absolute;left:1627px;top:925px;font:400 58.80px/118px "Liberation Mono",monospace;color:#d7d7db;white-space:pre;letter-spacing:0.000px;transform:translate(0.100px,0.765px) scale(.25);transform-origin:0 0;-webkit-text-stroke:1.20px currentColor;'><span style="color:#75bfff">height</span></div>
<div style='position:absolute;left:1645px;top:943px;font:400 58.80px/118px "Liberation Mono",monospace;color:#d7d7db;white-space:pre;letter-spacing:0.000px;transform:translate(0.700px,0.865px) scale(.25);transform-origin:0 0;-webkit-text-stroke:1.20px currentColor;'><span style="color:#ff7de9">48px</span></div>
<div style="position:absolute;left:1620.20px;top:968.90px;width:279.80px;height:61.00px;background:#18181a;"></div>
<svg style="position:absolute;left:1632.00px;top:975.40px;" width="9.00" height="12.00" viewBox="0 0 9 12"><path d="M0 0v12 l9 -6z" fill="#8a8a92"/></svg>
<div style='position:absolute;left:1627px;top:986px;font:400 58.80px/118px "Liberation Mono",monospace;color:#d7d7db;white-space:pre;letter-spacing:0.000px;transform:translate(0.100px,0.765px) scale(.25);transform-origin:0 0;-webkit-text-stroke:1.20px currentColor;'><span style="color:#75bfff">justify-content</span></div>
<div style='position:absolute;left:1645px;top:1004px;font:400 58.80px/118px "Liberation Mono",monospace;color:#d7d7db;white-space:pre;letter-spacing:0.000px;transform:translate(0.700px,0.865px) scale(.25);transform-origin:0 0;-webkit-text-stroke:1.20px currentColor;'><span style="color:#ff7de9">space-between</span></div>
<div style="position:absolute;left:1620.20px;top:1029.90px;width:279.80px;height:22.10px;background:#232327;"></div>
<svg style="position:absolute;left:1632.00px;top:1036.40px;" width="9.00" height="12.00" viewBox="0 0 9 12"><path d="M0 0v12 l9 -6z" fill="#8a8a92"/></svg>
</div></body></html>
